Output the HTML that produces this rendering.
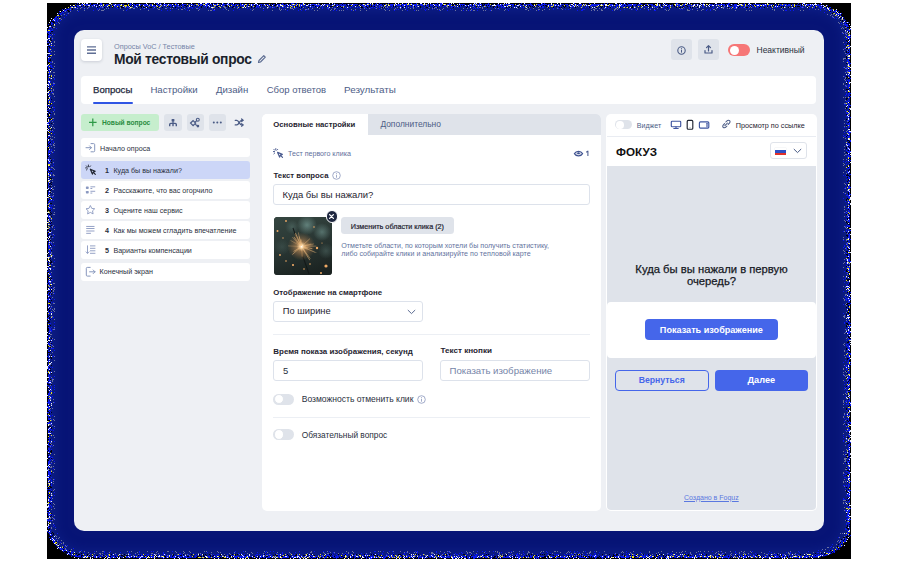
<!DOCTYPE html>
<html><head><meta charset="utf-8">
<style>
*{box-sizing:border-box;margin:0;padding:0}
html,body{width:898px;height:562px;overflow:hidden;background:#fff}
body{position:relative;font-family:"Liberation Sans",sans-serif;color:#1f2430}
.a{position:absolute}
.t{position:absolute;white-space:nowrap;line-height:1}
#black{left:47px;top:3px;width:804px;height:555.5px;background:#000}
#navy{left:47.8px;top:4px;width:802.4px;height:553.6px;background:#071476;border-radius:38px/31px;border:2.5px solid #0a1a9a;box-shadow:inset 0 0 12px 4px #0f218a}
#card{left:74px;top:30px;width:750px;height:501px;background:#eef0f4;border-radius:10px;overflow:hidden}
.wb{background:#fff;border-radius:4px}
.ib{background:#dfe3ea;border-radius:3px}
.lrow{position:absolute;left:81px;width:168.8px;height:18px;background:#fff;border-radius:3px}
.ltxt{font-size:7.15px;color:#2a3040}
.num{font-size:7.15px;font-weight:700;color:#2a3040}
.lbl{font-size:7.85px;font-weight:700;color:#1f2430}
.inp{position:absolute;background:#fff;border:1px solid #dde2eb;border-radius:3px}
</style></head><body>
<div class="a" id="black"></div>
<div class="a" id="navy"></div>
<svg class="a" style="left:0;top:0" width="898" height="562" viewBox="0 0 898 562" shape-rendering="crispEdges"><path fill="#000010" d="M79 4h2v1h-2zM91 4h2v1h-2zM98 4h1v1h-1zM105 4h1v1h-1zM109 4h1v1h-1zM124 4h4v1h-4zM132 4h1v1h-1zM135 4h1v1h-1zM148 4h1v1h-1zM153 4h4v1h-4zM158 4h1v1h-1zM162 4h1v1h-1zM174 4h1v1h-1zM179 4h2v1h-2zM193 4h1v1h-1zM208 4h1v1h-1zM212 4h1v1h-1zM221 4h1v1h-1zM234 4h1v1h-1zM239 4h1v1h-1zM258 4h1v1h-1zM270 4h1v1h-1zM272 4h1v1h-1zM275 4h2v1h-2zM284 4h1v1h-1zM288 4h1v1h-1zM290 4h1v1h-1zM306 4h2v1h-2zM320 4h2v1h-2zM330 4h2v1h-2zM338 4h1v1h-1zM342 4h1v1h-1zM346 4h1v1h-1zM358 4h1v1h-1zM361 4h1v1h-1zM374 4h1v1h-1zM379 4h1v1h-1zM382 4h1v1h-1zM384 4h1v1h-1zM389 4h1v1h-1zM419 4h1v1h-1zM429 4h1v1h-1zM437 4h1v1h-1zM446 4h1v1h-1zM452 4h2v1h-2zM455 4h2v1h-2zM458 4h1v1h-1zM465 4h4v1h-4zM472 4h1v1h-1zM482 4h1v1h-1zM484 4h1v1h-1zM491 4h2v1h-2zM495 4h2v1h-2zM499 4h1v1h-1zM514 4h1v1h-1zM516 4h2v1h-2zM521 4h2v1h-2zM532 4h2v1h-2zM535 4h1v1h-1zM540 4h1v1h-1zM547 4h1v1h-1zM557 4h1v1h-1zM559 4h1v1h-1zM564 4h1v1h-1zM568 4h1v1h-1zM573 4h1v1h-1zM577 4h1v1h-1zM582 4h1v1h-1zM587 4h3v1h-3zM607 4h2v1h-2zM613 4h3v1h-3zM618 4h1v1h-1zM626 4h2v1h-2zM637 4h1v1h-1zM643 4h2v1h-2zM653 4h2v1h-2zM661 4h1v1h-1zM665 4h1v1h-1zM668 4h1v1h-1zM670 4h2v1h-2zM673 4h1v1h-1zM680 4h2v1h-2zM688 4h1v1h-1zM692 4h1v1h-1zM699 4h1v1h-1zM705 4h1v1h-1zM708 4h1v1h-1zM713 4h1v1h-1zM715 4h1v1h-1zM725 4h1v1h-1zM729 4h1v1h-1zM733 4h1v1h-1zM737 4h2v1h-2zM746 4h2v1h-2zM752 4h1v1h-1zM761 4h1v1h-1zM773 4h1v1h-1zM775 4h1v1h-1zM777 4h1v1h-1zM787 4h1v1h-1zM791 4h1v1h-1zM795 4h2v1h-2zM798 4h2v1h-2zM801 4h1v1h-1zM803 4h1v1h-1zM75 5h1v1h-1zM83 5h1v1h-1zM90 5h1v1h-1zM95 5h1v1h-1zM97 5h1v1h-1zM104 5h1v1h-1zM110 5h1v1h-1zM112 5h1v1h-1zM122 5h1v1h-1zM127 5h1v1h-1zM129 5h1v1h-1zM131 5h1v1h-1zM133 5h1v1h-1zM137 5h1v1h-1zM141 5h2v1h-2zM155 5h1v1h-1zM172 5h1v1h-1zM179 5h1v1h-1zM181 5h1v1h-1zM184 5h2v1h-2zM187 5h1v1h-1zM190 5h1v1h-1zM195 5h1v1h-1zM199 5h1v1h-1zM202 5h1v1h-1zM210 5h1v1h-1zM212 5h1v1h-1zM218 5h1v1h-1zM220 5h1v1h-1zM225 5h2v1h-2zM230 5h1v1h-1zM236 5h1v1h-1zM239 5h1v1h-1zM245 5h1v1h-1zM248 5h2v1h-2zM254 5h2v1h-2zM260 5h1v1h-1zM262 5h1v1h-1zM266 5h1v1h-1zM270 5h2v1h-2zM274 5h2v1h-2zM286 5h1v1h-1zM297 5h1v1h-1zM309 5h1v1h-1zM312 5h2v1h-2zM335 5h1v1h-1zM347 5h1v1h-1zM349 5h2v1h-2zM355 5h1v1h-1zM357 5h1v1h-1zM360 5h1v1h-1zM369 5h1v1h-1zM371 5h1v1h-1zM383 5h1v1h-1zM387 5h1v1h-1zM393 5h1v1h-1zM401 5h1v1h-1zM411 5h1v1h-1zM425 5h1v1h-1zM429 5h1v1h-1zM433 5h1v1h-1zM442 5h2v1h-2zM452 5h2v1h-2zM457 5h1v1h-1zM459 5h1v1h-1zM461 5h1v1h-1zM463 5h1v1h-1zM472 5h1v1h-1zM482 5h2v1h-2zM486 5h1v1h-1zM488 5h1v1h-1zM502 5h1v1h-1zM505 5h1v1h-1zM511 5h1v1h-1zM514 5h1v1h-1zM527 5h1v1h-1zM529 5h1v1h-1zM533 5h1v1h-1zM537 5h1v1h-1zM543 5h1v1h-1zM545 5h2v1h-2zM562 5h1v1h-1zM565 5h1v1h-1zM571 5h1v1h-1zM599 5h1v1h-1zM604 5h1v1h-1zM624 5h1v1h-1zM632 5h1v1h-1zM636 5h1v1h-1zM640 5h1v1h-1zM642 5h2v1h-2zM645 5h3v1h-3zM649 5h2v1h-2zM655 5h1v1h-1zM661 5h1v1h-1zM667 5h1v1h-1zM673 5h2v1h-2zM685 5h2v1h-2zM696 5h1v1h-1zM701 5h1v1h-1zM707 5h1v1h-1zM722 5h1v1h-1zM726 5h1v1h-1zM730 5h2v1h-2zM748 5h1v1h-1zM750 5h1v1h-1zM753 5h1v1h-1zM755 5h1v1h-1zM767 5h1v1h-1zM772 5h1v1h-1zM774 5h1v1h-1zM777 5h1v1h-1zM779 5h1v1h-1zM801 5h1v1h-1zM809 5h1v1h-1zM814 5h1v1h-1zM73 6h1v1h-1zM76 6h1v1h-1zM81 6h1v1h-1zM85 6h1v1h-1zM87 6h1v1h-1zM99 6h1v1h-1zM109 6h1v1h-1zM113 6h1v1h-1zM121 6h1v1h-1zM130 6h1v1h-1zM140 6h2v1h-2zM146 6h1v1h-1zM158 6h1v1h-1zM167 6h1v1h-1zM169 6h1v1h-1zM186 6h1v1h-1zM192 6h1v1h-1zM201 6h1v1h-1zM216 6h2v1h-2zM226 6h1v1h-1zM228 6h1v1h-1zM233 6h1v1h-1zM245 6h1v1h-1zM251 6h1v1h-1zM255 6h1v1h-1zM267 6h1v1h-1zM295 6h1v1h-1zM297 6h1v1h-1zM315 6h1v1h-1zM319 6h1v1h-1zM326 6h1v1h-1zM330 6h3v1h-3zM338 6h1v1h-1zM340 6h1v1h-1zM361 6h1v1h-1zM366 6h1v1h-1zM369 6h1v1h-1zM371 6h1v1h-1zM374 6h1v1h-1zM393 6h1v1h-1zM395 6h1v1h-1zM405 6h1v1h-1zM414 6h1v1h-1zM420 6h1v1h-1zM429 6h1v1h-1zM434 6h1v1h-1zM448 6h1v1h-1zM459 6h1v1h-1zM467 6h1v1h-1zM476 6h1v1h-1zM480 6h1v1h-1zM490 6h1v1h-1zM493 6h2v1h-2zM497 6h1v1h-1zM519 6h1v1h-1zM530 6h1v1h-1zM532 6h1v1h-1zM534 6h1v1h-1zM538 6h1v1h-1zM541 6h1v1h-1zM546 6h1v1h-1zM556 6h1v1h-1zM563 6h1v1h-1zM565 6h1v1h-1zM577 6h1v1h-1zM589 6h1v1h-1zM600 6h1v1h-1zM602 6h1v1h-1zM604 6h1v1h-1zM607 6h1v1h-1zM626 6h1v1h-1zM632 6h1v1h-1zM650 6h1v1h-1zM662 6h1v1h-1zM674 6h1v1h-1zM683 6h1v1h-1zM687 6h1v1h-1zM694 6h1v1h-1zM710 6h1v1h-1zM721 6h1v1h-1zM739 6h1v1h-1zM751 6h1v1h-1zM760 6h1v1h-1zM767 6h1v1h-1zM770 6h1v1h-1zM781 6h1v1h-1zM783 6h1v1h-1zM793 6h1v1h-1zM795 6h1v1h-1zM797 6h3v1h-3zM807 6h1v1h-1zM822 6h1v1h-1zM69 7h1v1h-1zM97 7h1v1h-1zM104 7h1v1h-1zM109 7h1v1h-1zM112 7h1v1h-1zM118 7h1v1h-1zM121 7h3v1h-3zM138 7h1v1h-1zM141 7h1v1h-1zM143 7h2v1h-2zM147 7h1v1h-1zM150 7h2v1h-2zM157 7h1v1h-1zM162 7h1v1h-1zM172 7h1v1h-1zM175 7h1v1h-1zM181 7h1v1h-1zM201 7h1v1h-1zM207 7h1v1h-1zM218 7h1v1h-1zM228 7h1v1h-1zM232 7h1v1h-1zM240 7h1v1h-1zM251 7h1v1h-1zM254 7h1v1h-1zM277 7h1v1h-1zM299 7h1v1h-1zM301 7h1v1h-1zM308 7h1v1h-1zM318 7h1v1h-1zM337 7h1v1h-1zM341 7h2v1h-2zM361 7h2v1h-2zM367 7h1v1h-1zM382 7h1v1h-1zM384 7h1v1h-1zM402 7h1v1h-1zM420 7h1v1h-1zM426 7h2v1h-2zM433 7h1v1h-1zM437 7h1v1h-1zM453 7h1v1h-1zM466 7h1v1h-1zM487 7h1v1h-1zM493 7h1v1h-1zM497 7h1v1h-1zM506 7h1v1h-1zM509 7h1v1h-1zM511 7h1v1h-1zM518 7h1v1h-1zM528 7h1v1h-1zM533 7h1v1h-1zM548 7h1v1h-1zM553 7h1v1h-1zM559 7h1v1h-1zM561 7h1v1h-1zM564 7h1v1h-1zM569 7h1v1h-1zM575 7h1v1h-1zM589 7h1v1h-1zM596 7h1v1h-1zM601 7h1v1h-1zM610 7h1v1h-1zM620 7h1v1h-1zM628 7h1v1h-1zM631 7h2v1h-2zM649 7h1v1h-1zM659 7h1v1h-1zM667 7h1v1h-1zM676 7h1v1h-1zM679 7h2v1h-2zM682 7h1v1h-1zM690 7h1v1h-1zM692 7h1v1h-1zM697 7h1v1h-1zM728 7h1v1h-1zM738 7h1v1h-1zM746 7h2v1h-2zM759 7h1v1h-1zM764 7h1v1h-1zM781 7h1v1h-1zM783 7h1v1h-1zM788 7h1v1h-1zM808 7h1v1h-1zM815 7h1v1h-1zM826 7h1v1h-1zM828 7h1v1h-1zM67 8h1v1h-1zM72 8h1v1h-1zM830 8h2v1h-2zM65 9h1v1h-1zM72 9h1v1h-1zM67 10h2v1h-2zM832 10h1v1h-1zM834 10h1v1h-1zM61 11h1v1h-1zM63 11h1v1h-1zM68 11h2v1h-2zM830 11h1v1h-1zM60 12h1v1h-1zM833 12h1v1h-1zM836 12h1v1h-1zM832 13h1v1h-1zM59 14h1v1h-1zM56 15h1v1h-1zM59 15h1v1h-1zM839 15h1v1h-1zM841 15h1v1h-1zM60 16h1v1h-1zM842 16h1v1h-1zM54 17h1v1h-1zM57 17h1v1h-1zM59 17h1v1h-1zM841 17h1v1h-1zM840 18h1v1h-1zM843 18h1v1h-1zM840 20h1v1h-1zM842 20h1v1h-1zM52 21h2v1h-2zM842 21h1v1h-1zM845 21h1v1h-1zM53 22h2v1h-2zM846 23h1v1h-1zM50 24h1v1h-1zM53 24h1v1h-1zM51 25h1v1h-1zM845 26h1v1h-1zM52 27h1v1h-1zM847 27h2v1h-2zM845 29h1v1h-1zM51 31h2v1h-2zM848 31h1v1h-1zM848 32h1v1h-1zM50 33h1v1h-1zM48 34h1v1h-1zM50 38h1v1h-1zM50 39h1v1h-1zM848 39h1v1h-1zM48 40h1v1h-1zM51 40h1v1h-1zM846 40h1v1h-1zM848 40h1v1h-1zM49 41h1v1h-1zM847 41h1v1h-1zM49 42h1v1h-1zM848 42h1v1h-1zM48 43h1v1h-1zM847 43h1v1h-1zM849 43h1v1h-1zM48 44h1v1h-1zM846 45h1v1h-1zM48 46h2v1h-2zM49 47h1v1h-1zM846 48h2v1h-2zM848 50h1v1h-1zM846 51h1v1h-1zM48 52h1v1h-1zM846 52h1v1h-1zM848 52h1v1h-1zM849 54h1v1h-1zM48 56h3v1h-3zM846 56h1v1h-1zM846 57h1v1h-1zM846 58h1v1h-1zM50 59h1v1h-1zM49 60h2v1h-2zM849 60h1v1h-1zM48 62h2v1h-2zM48 63h1v1h-1zM846 63h1v1h-1zM49 64h1v1h-1zM50 68h2v1h-2zM848 69h1v1h-1zM48 70h1v1h-1zM50 70h1v1h-1zM48 74h1v1h-1zM50 76h1v1h-1zM846 76h2v1h-2zM847 77h1v1h-1zM846 78h1v1h-1zM848 78h2v1h-2zM49 79h1v1h-1zM847 81h1v1h-1zM846 83h1v1h-1zM48 86h1v1h-1zM48 88h1v1h-1zM849 88h1v1h-1zM49 89h1v1h-1zM846 89h3v1h-3zM48 90h1v1h-1zM50 91h1v1h-1zM49 92h1v1h-1zM848 92h1v1h-1zM48 96h1v1h-1zM849 96h1v1h-1zM48 98h1v1h-1zM846 98h2v1h-2zM51 99h1v1h-1zM846 99h1v1h-1zM849 102h1v1h-1zM48 103h1v1h-1zM50 103h1v1h-1zM50 104h1v1h-1zM49 106h1v1h-1zM849 106h1v1h-1zM49 107h1v1h-1zM51 107h1v1h-1zM846 107h1v1h-1zM48 108h1v1h-1zM846 108h1v1h-1zM50 109h1v1h-1zM849 109h1v1h-1zM48 111h1v1h-1zM848 111h1v1h-1zM49 112h1v1h-1zM49 113h2v1h-2zM48 114h1v1h-1zM846 114h1v1h-1zM48 115h1v1h-1zM48 116h2v1h-2zM849 117h1v1h-1zM49 118h1v1h-1zM51 118h1v1h-1zM49 119h2v1h-2zM846 119h1v1h-1zM849 121h1v1h-1zM848 122h1v1h-1zM49 123h1v1h-1zM51 123h1v1h-1zM49 125h1v1h-1zM846 125h1v1h-1zM48 128h1v1h-1zM849 128h1v1h-1zM49 129h1v1h-1zM51 129h1v1h-1zM49 131h1v1h-1zM48 132h1v1h-1zM51 132h1v1h-1zM49 133h1v1h-1zM48 134h1v1h-1zM847 135h1v1h-1zM846 136h1v1h-1zM49 137h1v1h-1zM48 138h2v1h-2zM49 140h1v1h-1zM847 140h2v1h-2zM849 141h1v1h-1zM50 142h1v1h-1zM848 142h2v1h-2zM49 143h1v1h-1zM48 144h1v1h-1zM49 145h1v1h-1zM48 146h1v1h-1zM848 146h1v1h-1zM846 147h1v1h-1zM849 147h1v1h-1zM48 148h1v1h-1zM846 148h1v1h-1zM48 149h1v1h-1zM848 150h1v1h-1zM846 152h1v1h-1zM49 153h1v1h-1zM847 153h1v1h-1zM849 154h1v1h-1zM48 156h1v1h-1zM50 158h1v1h-1zM849 158h1v1h-1zM51 160h1v1h-1zM849 160h1v1h-1zM51 162h1v1h-1zM849 162h1v1h-1zM849 164h1v1h-1zM849 165h1v1h-1zM49 166h1v1h-1zM847 166h1v1h-1zM848 167h1v1h-1zM849 169h1v1h-1zM48 170h1v1h-1zM848 170h1v1h-1zM49 171h1v1h-1zM51 171h1v1h-1zM49 173h1v1h-1zM849 173h1v1h-1zM847 174h1v1h-1zM846 175h3v1h-3zM849 176h1v1h-1zM49 177h1v1h-1zM847 177h1v1h-1zM50 178h2v1h-2zM848 179h1v1h-1zM848 180h1v1h-1zM847 181h1v1h-1zM51 182h1v1h-1zM49 183h2v1h-2zM848 183h1v1h-1zM49 184h1v1h-1zM51 184h1v1h-1zM847 185h1v1h-1zM49 186h2v1h-2zM49 189h1v1h-1zM51 189h1v1h-1zM48 190h1v1h-1zM50 190h1v1h-1zM50 192h1v1h-1zM848 192h1v1h-1zM848 193h1v1h-1zM848 194h1v1h-1zM49 195h1v1h-1zM49 197h1v1h-1zM51 198h1v1h-1zM847 198h1v1h-1zM49 199h1v1h-1zM846 199h1v1h-1zM848 199h1v1h-1zM48 200h1v1h-1zM846 200h1v1h-1zM50 203h2v1h-2zM849 204h1v1h-1zM48 205h1v1h-1zM847 206h1v1h-1zM849 207h1v1h-1zM48 209h1v1h-1zM848 209h1v1h-1zM48 210h3v1h-3zM50 212h1v1h-1zM48 213h1v1h-1zM51 213h1v1h-1zM848 213h1v1h-1zM49 214h2v1h-2zM846 214h1v1h-1zM849 215h1v1h-1zM51 216h1v1h-1zM849 217h1v1h-1zM48 218h1v1h-1zM847 218h1v1h-1zM849 218h1v1h-1zM847 219h1v1h-1zM50 220h1v1h-1zM846 221h1v1h-1zM49 222h1v1h-1zM51 222h1v1h-1zM846 222h1v1h-1zM848 222h1v1h-1zM50 223h1v1h-1zM847 223h1v1h-1zM848 224h2v1h-2zM51 225h1v1h-1zM50 226h1v1h-1zM848 227h2v1h-2zM848 228h1v1h-1zM48 229h1v1h-1zM49 230h2v1h-2zM50 231h1v1h-1zM48 232h1v1h-1zM846 232h1v1h-1zM849 232h1v1h-1zM848 233h1v1h-1zM49 234h1v1h-1zM48 235h1v1h-1zM846 235h2v1h-2zM51 236h1v1h-1zM847 236h1v1h-1zM48 237h1v1h-1zM49 238h1v1h-1zM49 239h1v1h-1zM849 239h1v1h-1zM50 240h1v1h-1zM48 241h1v1h-1zM847 241h1v1h-1zM50 244h1v1h-1zM848 244h1v1h-1zM51 245h1v1h-1zM849 245h1v1h-1zM847 248h1v1h-1zM848 249h2v1h-2zM51 250h1v1h-1zM846 251h2v1h-2zM847 252h1v1h-1zM48 253h1v1h-1zM849 253h1v1h-1zM846 254h2v1h-2zM49 255h1v1h-1zM847 255h1v1h-1zM847 257h2v1h-2zM50 258h1v1h-1zM49 259h1v1h-1zM50 260h1v1h-1zM48 261h1v1h-1zM51 261h1v1h-1zM846 261h1v1h-1zM50 262h2v1h-2zM50 263h1v1h-1zM48 265h1v1h-1zM848 265h1v1h-1zM49 266h2v1h-2zM846 266h1v1h-1zM49 269h1v1h-1zM847 269h1v1h-1zM846 270h1v1h-1zM846 271h2v1h-2zM48 272h1v1h-1zM848 272h2v1h-2zM848 274h1v1h-1zM49 275h1v1h-1zM849 275h1v1h-1zM48 276h1v1h-1zM848 276h2v1h-2zM48 277h1v1h-1zM849 277h1v1h-1zM49 278h1v1h-1zM51 278h1v1h-1zM846 278h1v1h-1zM48 279h1v1h-1zM50 279h1v1h-1zM847 279h3v1h-3zM847 280h2v1h-2zM48 283h1v1h-1zM849 283h1v1h-1zM849 284h1v1h-1zM50 285h1v1h-1zM848 285h1v1h-1zM48 287h1v1h-1zM51 287h1v1h-1zM846 288h1v1h-1zM849 288h1v1h-1zM50 289h1v1h-1zM51 290h1v1h-1zM48 291h2v1h-2zM51 291h1v1h-1zM849 291h1v1h-1zM50 292h1v1h-1zM847 292h1v1h-1zM849 292h1v1h-1zM49 293h1v1h-1zM849 293h1v1h-1zM49 294h1v1h-1zM51 294h1v1h-1zM49 297h1v1h-1zM849 297h1v1h-1zM50 298h1v1h-1zM49 300h1v1h-1zM51 300h1v1h-1zM49 302h2v1h-2zM847 303h3v1h-3zM49 304h1v1h-1zM846 304h2v1h-2zM848 305h1v1h-1zM848 306h1v1h-1zM846 307h1v1h-1zM49 308h1v1h-1zM848 308h1v1h-1zM48 309h1v1h-1zM848 309h2v1h-2zM49 310h1v1h-1zM848 310h2v1h-2zM49 311h1v1h-1zM847 312h2v1h-2zM848 313h2v1h-2zM846 314h1v1h-1zM49 315h1v1h-1zM846 315h1v1h-1zM849 315h1v1h-1zM48 316h1v1h-1zM49 317h1v1h-1zM49 318h1v1h-1zM849 318h1v1h-1zM50 319h1v1h-1zM48 320h1v1h-1zM48 321h2v1h-2zM848 321h1v1h-1zM48 322h2v1h-2zM846 323h2v1h-2zM49 324h1v1h-1zM847 324h2v1h-2zM50 325h1v1h-1zM846 325h1v1h-1zM48 326h1v1h-1zM846 326h1v1h-1zM48 328h1v1h-1zM848 328h1v1h-1zM48 329h1v1h-1zM48 330h1v1h-1zM847 331h1v1h-1zM48 332h1v1h-1zM846 333h1v1h-1zM48 334h2v1h-2zM849 334h1v1h-1zM848 336h1v1h-1zM848 337h2v1h-2zM51 338h1v1h-1zM849 338h1v1h-1zM49 339h1v1h-1zM48 341h1v1h-1zM50 341h1v1h-1zM848 341h1v1h-1zM49 342h1v1h-1zM847 342h2v1h-2zM51 343h1v1h-1zM849 344h1v1h-1zM50 345h1v1h-1zM48 346h1v1h-1zM50 347h1v1h-1zM846 348h1v1h-1zM49 349h1v1h-1zM846 349h1v1h-1zM50 351h1v1h-1zM848 351h2v1h-2zM48 352h2v1h-2zM49 354h1v1h-1zM849 354h1v1h-1zM51 355h1v1h-1zM50 357h2v1h-2zM48 358h1v1h-1zM51 358h1v1h-1zM847 358h2v1h-2zM847 359h1v1h-1zM849 360h1v1h-1zM849 361h1v1h-1zM49 362h1v1h-1zM51 365h1v1h-1zM849 365h1v1h-1zM49 367h1v1h-1zM50 368h1v1h-1zM848 369h1v1h-1zM49 370h2v1h-2zM846 371h1v1h-1zM48 373h1v1h-1zM51 373h1v1h-1zM847 373h1v1h-1zM846 377h1v1h-1zM48 378h1v1h-1zM50 379h1v1h-1zM849 379h1v1h-1zM849 380h1v1h-1zM48 381h1v1h-1zM848 381h1v1h-1zM847 382h1v1h-1zM48 384h2v1h-2zM51 384h1v1h-1zM846 386h1v1h-1zM849 387h1v1h-1zM48 388h1v1h-1zM49 389h1v1h-1zM848 390h2v1h-2zM48 391h1v1h-1zM48 392h1v1h-1zM848 392h2v1h-2zM847 395h1v1h-1zM848 397h1v1h-1zM48 398h1v1h-1zM848 399h1v1h-1zM849 403h1v1h-1zM49 405h1v1h-1zM849 405h1v1h-1zM848 406h1v1h-1zM50 407h1v1h-1zM846 408h1v1h-1zM846 409h1v1h-1zM848 410h1v1h-1zM48 411h1v1h-1zM848 411h1v1h-1zM49 412h1v1h-1zM51 412h1v1h-1zM49 413h1v1h-1zM49 414h1v1h-1zM848 414h1v1h-1zM49 417h1v1h-1zM849 417h1v1h-1zM849 418h1v1h-1zM849 419h1v1h-1zM48 420h2v1h-2zM847 420h1v1h-1zM849 420h1v1h-1zM848 421h1v1h-1zM849 423h1v1h-1zM846 424h1v1h-1zM48 426h3v1h-3zM849 426h1v1h-1zM48 427h1v1h-1zM51 427h1v1h-1zM51 428h1v1h-1zM849 428h1v1h-1zM49 431h1v1h-1zM51 431h1v1h-1zM848 432h1v1h-1zM48 434h1v1h-1zM50 434h1v1h-1zM48 435h1v1h-1zM48 437h1v1h-1zM847 437h2v1h-2zM48 439h1v1h-1zM50 439h1v1h-1zM849 442h1v1h-1zM49 443h1v1h-1zM847 443h2v1h-2zM49 444h2v1h-2zM48 446h1v1h-1zM849 446h1v1h-1zM48 450h1v1h-1zM51 450h1v1h-1zM50 451h2v1h-2zM848 451h1v1h-1zM51 452h1v1h-1zM48 453h2v1h-2zM847 454h1v1h-1zM48 455h1v1h-1zM846 455h2v1h-2zM849 456h1v1h-1zM846 457h1v1h-1zM848 457h1v1h-1zM48 458h2v1h-2zM51 458h1v1h-1zM48 460h1v1h-1zM848 460h1v1h-1zM846 462h1v1h-1zM849 462h1v1h-1zM49 465h1v1h-1zM49 468h1v1h-1zM846 468h1v1h-1zM49 470h1v1h-1zM847 470h2v1h-2zM849 471h1v1h-1zM51 472h1v1h-1zM847 474h2v1h-2zM50 475h1v1h-1zM846 475h1v1h-1zM49 477h1v1h-1zM49 482h1v1h-1zM847 482h1v1h-1zM50 484h1v1h-1zM49 486h2v1h-2zM48 487h1v1h-1zM50 487h2v1h-2zM846 487h1v1h-1zM849 487h1v1h-1zM48 488h2v1h-2zM848 489h1v1h-1zM48 490h2v1h-2zM846 490h1v1h-1zM51 491h1v1h-1zM846 491h1v1h-1zM847 492h2v1h-2zM48 493h1v1h-1zM49 494h1v1h-1zM48 495h1v1h-1zM49 496h2v1h-2zM848 497h1v1h-1zM847 498h1v1h-1zM50 499h1v1h-1zM849 499h1v1h-1zM846 500h1v1h-1zM848 500h1v1h-1zM49 502h1v1h-1zM50 503h1v1h-1zM848 504h1v1h-1zM848 505h1v1h-1zM48 508h1v1h-1zM49 510h1v1h-1zM48 511h1v1h-1zM849 512h1v1h-1zM51 513h1v1h-1zM846 513h1v1h-1zM51 515h1v1h-1zM849 515h1v1h-1zM48 516h1v1h-1zM50 516h1v1h-1zM51 519h1v1h-1zM846 520h1v1h-1zM49 521h1v1h-1zM849 521h1v1h-1zM49 522h1v1h-1zM49 524h1v1h-1zM849 524h1v1h-1zM847 525h1v1h-1zM49 526h1v1h-1zM847 526h1v1h-1zM849 526h1v1h-1zM846 527h1v1h-1zM49 528h1v1h-1zM847 528h2v1h-2zM48 529h2v1h-2zM848 529h1v1h-1zM48 531h1v1h-1zM52 532h1v1h-1zM51 533h1v1h-1zM53 533h1v1h-1zM53 534h1v1h-1zM52 535h1v1h-1zM847 535h1v1h-1zM50 536h2v1h-2zM846 536h2v1h-2zM50 537h1v1h-1zM843 537h2v1h-2zM846 537h1v1h-1zM841 539h1v1h-1zM844 539h1v1h-1zM843 540h1v1h-1zM56 541h1v1h-1zM840 542h1v1h-1zM56 543h1v1h-1zM843 543h1v1h-1zM58 544h1v1h-1zM838 544h1v1h-1zM841 544h1v1h-1zM59 546h1v1h-1zM837 546h1v1h-1zM63 547h1v1h-1zM837 547h1v1h-1zM838 548h1v1h-1zM63 549h1v1h-1zM69 550h1v1h-1zM830 550h1v1h-1zM835 550h1v1h-1zM64 551h3v1h-3zM832 551h1v1h-1zM65 552h3v1h-3zM69 552h1v1h-1zM831 552h1v1h-1zM70 553h1v1h-1zM74 553h1v1h-1zM76 553h1v1h-1zM81 553h1v1h-1zM815 553h1v1h-1zM821 553h1v1h-1zM825 553h1v1h-1zM73 554h1v1h-1zM78 554h2v1h-2zM87 554h1v1h-1zM111 554h1v1h-1zM124 554h1v1h-1zM173 554h1v1h-1zM183 554h1v1h-1zM191 554h1v1h-1zM199 554h1v1h-1zM203 554h1v1h-1zM205 554h1v1h-1zM209 554h1v1h-1zM220 554h1v1h-1zM232 554h1v1h-1zM235 554h1v1h-1zM237 554h1v1h-1zM240 554h1v1h-1zM264 554h1v1h-1zM275 554h1v1h-1zM287 554h1v1h-1zM296 554h1v1h-1zM307 554h1v1h-1zM311 554h1v1h-1zM329 554h1v1h-1zM331 554h1v1h-1zM338 554h1v1h-1zM345 554h1v1h-1zM353 554h1v1h-1zM356 554h1v1h-1zM359 554h1v1h-1zM364 554h1v1h-1zM371 554h1v1h-1zM373 554h1v1h-1zM393 554h1v1h-1zM398 554h3v1h-3zM409 554h1v1h-1zM416 554h1v1h-1zM418 554h1v1h-1zM438 554h1v1h-1zM446 554h1v1h-1zM449 554h1v1h-1zM463 554h2v1h-2zM486 554h1v1h-1zM488 554h1v1h-1zM507 554h1v1h-1zM528 554h1v1h-1zM531 554h1v1h-1zM540 554h1v1h-1zM542 554h1v1h-1zM544 554h1v1h-1zM549 554h2v1h-2zM574 554h1v1h-1zM577 554h1v1h-1zM579 554h1v1h-1zM581 554h1v1h-1zM602 554h1v1h-1zM609 554h1v1h-1zM613 554h1v1h-1zM616 554h2v1h-2zM622 554h1v1h-1zM636 554h1v1h-1zM643 554h1v1h-1zM648 554h1v1h-1zM656 554h1v1h-1zM658 554h1v1h-1zM661 554h1v1h-1zM685 554h1v1h-1zM688 554h1v1h-1zM702 554h1v1h-1zM706 554h1v1h-1zM725 554h1v1h-1zM757 554h1v1h-1zM777 554h1v1h-1zM781 554h1v1h-1zM800 554h1v1h-1zM824 554h1v1h-1zM77 555h1v1h-1zM81 555h2v1h-2zM87 555h1v1h-1zM89 555h1v1h-1zM92 555h1v1h-1zM96 555h2v1h-2zM103 555h1v1h-1zM121 555h2v1h-2zM126 555h2v1h-2zM138 555h1v1h-1zM140 555h1v1h-1zM145 555h1v1h-1zM156 555h1v1h-1zM173 555h1v1h-1zM180 555h2v1h-2zM199 555h1v1h-1zM203 555h1v1h-1zM206 555h1v1h-1zM210 555h1v1h-1zM213 555h1v1h-1zM220 555h1v1h-1zM224 555h1v1h-1zM229 555h2v1h-2zM235 555h1v1h-1zM245 555h1v1h-1zM273 555h1v1h-1zM276 555h2v1h-2zM284 555h1v1h-1zM288 555h1v1h-1zM295 555h2v1h-2zM303 555h2v1h-2zM314 555h1v1h-1zM330 555h1v1h-1zM344 555h1v1h-1zM351 555h1v1h-1zM374 555h2v1h-2zM377 555h1v1h-1zM380 555h1v1h-1zM401 555h1v1h-1zM437 555h1v1h-1zM439 555h1v1h-1zM443 555h1v1h-1zM446 555h1v1h-1zM471 555h1v1h-1zM484 555h1v1h-1zM503 555h1v1h-1zM505 555h1v1h-1zM515 555h1v1h-1zM526 555h1v1h-1zM529 555h1v1h-1zM533 555h1v1h-1zM536 555h1v1h-1zM538 555h1v1h-1zM553 555h1v1h-1zM559 555h1v1h-1zM568 555h1v1h-1zM613 555h2v1h-2zM616 555h1v1h-1zM624 555h1v1h-1zM630 555h1v1h-1zM632 555h1v1h-1zM649 555h1v1h-1zM656 555h1v1h-1zM659 555h1v1h-1zM663 555h1v1h-1zM666 555h1v1h-1zM668 555h1v1h-1zM687 555h2v1h-2zM690 555h1v1h-1zM694 555h1v1h-1zM706 555h1v1h-1zM718 555h2v1h-2zM724 555h1v1h-1zM737 555h1v1h-1zM743 555h1v1h-1zM746 555h1v1h-1zM756 555h1v1h-1zM769 555h1v1h-1zM773 555h1v1h-1zM781 555h1v1h-1zM794 555h1v1h-1zM804 555h1v1h-1zM815 555h1v1h-1zM81 556h1v1h-1zM105 556h1v1h-1zM109 556h2v1h-2zM115 556h1v1h-1zM118 556h1v1h-1zM123 556h2v1h-2zM144 556h1v1h-1zM147 556h1v1h-1zM149 556h1v1h-1zM155 556h1v1h-1zM164 556h2v1h-2zM172 556h1v1h-1zM177 556h1v1h-1zM187 556h2v1h-2zM193 556h1v1h-1zM197 556h2v1h-2zM200 556h2v1h-2zM203 556h2v1h-2zM210 556h1v1h-1zM212 556h1v1h-1zM219 556h1v1h-1zM229 556h2v1h-2zM232 556h1v1h-1zM253 556h2v1h-2zM258 556h1v1h-1zM266 556h2v1h-2zM281 556h2v1h-2zM289 556h2v1h-2zM300 556h1v1h-1zM307 556h1v1h-1zM310 556h1v1h-1zM324 556h1v1h-1zM327 556h2v1h-2zM334 556h1v1h-1zM341 556h2v1h-2zM349 556h1v1h-1zM353 556h1v1h-1zM361 556h1v1h-1zM364 556h1v1h-1zM368 556h2v1h-2zM377 556h1v1h-1zM382 556h1v1h-1zM395 556h1v1h-1zM402 556h1v1h-1zM405 556h1v1h-1zM416 556h1v1h-1zM424 556h1v1h-1zM427 556h1v1h-1zM460 556h1v1h-1zM466 556h1v1h-1zM470 556h1v1h-1zM489 556h1v1h-1zM494 556h2v1h-2zM497 556h1v1h-1zM505 556h1v1h-1zM513 556h2v1h-2zM524 556h1v1h-1zM529 556h1v1h-1zM544 556h2v1h-2zM547 556h2v1h-2zM555 556h1v1h-1zM558 556h2v1h-2zM568 556h1v1h-1zM571 556h1v1h-1zM573 556h1v1h-1zM577 556h1v1h-1zM581 556h1v1h-1zM583 556h1v1h-1zM585 556h2v1h-2zM588 556h2v1h-2zM591 556h1v1h-1zM599 556h1v1h-1zM604 556h2v1h-2zM610 556h1v1h-1zM612 556h2v1h-2zM624 556h1v1h-1zM635 556h2v1h-2zM654 556h1v1h-1zM656 556h2v1h-2zM663 556h1v1h-1zM665 556h1v1h-1zM676 556h1v1h-1zM714 556h1v1h-1zM722 556h1v1h-1zM728 556h1v1h-1zM731 556h1v1h-1zM738 556h1v1h-1zM740 556h1v1h-1zM747 556h1v1h-1zM758 556h1v1h-1zM761 556h1v1h-1zM763 556h1v1h-1zM770 556h1v1h-1zM773 556h1v1h-1zM779 556h1v1h-1zM783 556h1v1h-1zM787 556h1v1h-1zM789 556h1v1h-1zM798 556h1v1h-1zM821 556h1v1h-1zM88 557h2v1h-2zM91 557h3v1h-3zM98 557h1v1h-1zM102 557h3v1h-3zM106 557h1v1h-1zM116 557h1v1h-1zM118 557h1v1h-1zM120 557h1v1h-1zM124 557h2v1h-2zM132 557h1v1h-1zM135 557h1v1h-1zM156 557h2v1h-2zM165 557h1v1h-1zM169 557h1v1h-1zM176 557h1v1h-1zM182 557h1v1h-1zM196 557h2v1h-2zM205 557h1v1h-1zM214 557h1v1h-1zM220 557h1v1h-1zM222 557h2v1h-2zM233 557h1v1h-1zM237 557h1v1h-1zM249 557h3v1h-3zM256 557h1v1h-1zM258 557h1v1h-1zM262 557h1v1h-1zM265 557h1v1h-1zM270 557h1v1h-1zM289 557h1v1h-1zM306 557h1v1h-1zM311 557h1v1h-1zM316 557h1v1h-1zM318 557h1v1h-1zM321 557h1v1h-1zM329 557h1v1h-1zM331 557h2v1h-2zM339 557h1v1h-1zM343 557h2v1h-2zM348 557h2v1h-2zM353 557h1v1h-1zM356 557h1v1h-1zM359 557h1v1h-1zM361 557h1v1h-1zM365 557h1v1h-1zM367 557h1v1h-1zM386 557h3v1h-3zM402 557h1v1h-1zM408 557h1v1h-1zM415 557h1v1h-1zM417 557h1v1h-1zM428 557h1v1h-1zM431 557h1v1h-1zM438 557h1v1h-1zM450 557h1v1h-1zM463 557h1v1h-1zM466 557h1v1h-1zM470 557h1v1h-1zM472 557h1v1h-1zM481 557h1v1h-1zM484 557h1v1h-1zM493 557h2v1h-2zM497 557h1v1h-1zM501 557h1v1h-1zM511 557h1v1h-1zM514 557h1v1h-1zM524 557h2v1h-2zM532 557h1v1h-1zM539 557h1v1h-1zM542 557h4v1h-4zM548 557h1v1h-1zM553 557h2v1h-2zM569 557h1v1h-1zM572 557h1v1h-1zM577 557h2v1h-2zM585 557h1v1h-1zM589 557h1v1h-1zM591 557h1v1h-1zM593 557h1v1h-1zM597 557h2v1h-2zM600 557h1v1h-1zM605 557h1v1h-1zM610 557h1v1h-1zM614 557h1v1h-1zM620 557h1v1h-1zM629 557h1v1h-1zM631 557h1v1h-1zM634 557h1v1h-1zM646 557h1v1h-1zM653 557h3v1h-3zM659 557h1v1h-1zM664 557h1v1h-1zM673 557h1v1h-1zM680 557h1v1h-1zM682 557h2v1h-2zM698 557h1v1h-1zM701 557h1v1h-1zM709 557h1v1h-1zM714 557h1v1h-1zM716 557h1v1h-1zM730 557h1v1h-1zM732 557h1v1h-1zM747 557h1v1h-1zM749 557h1v1h-1zM758 557h1v1h-1zM780 557h1v1h-1zM787 557h1v1h-1zM808 557h1v1h-1zM810 557h1v1h-1zM812 557h1v1h-1z"/><path fill="#0a18f0" d="M77 3h1v1h-1zM90 3h1v1h-1zM100 3h2v1h-2zM127 3h1v1h-1zM130 3h1v1h-1zM156 3h2v1h-2zM160 3h1v1h-1zM175 3h2v1h-2zM198 3h1v1h-1zM203 3h1v1h-1zM207 3h2v1h-2zM213 3h1v1h-1zM217 3h1v1h-1zM223 3h1v1h-1zM227 3h1v1h-1zM231 3h1v1h-1zM240 3h1v1h-1zM282 3h1v1h-1zM291 3h3v1h-3zM296 3h1v1h-1zM302 3h1v1h-1zM318 3h1v1h-1zM334 3h1v1h-1zM342 3h1v1h-1zM367 3h2v1h-2zM376 3h1v1h-1zM379 3h1v1h-1zM388 3h1v1h-1zM406 3h1v1h-1zM411 3h1v1h-1zM416 3h1v1h-1zM437 3h1v1h-1zM440 3h2v1h-2zM449 3h1v1h-1zM459 3h1v1h-1zM475 3h1v1h-1zM479 3h1v1h-1zM488 3h1v1h-1zM521 3h1v1h-1zM530 3h1v1h-1zM542 3h1v1h-1zM544 3h1v1h-1zM574 3h1v1h-1zM589 3h1v1h-1zM604 3h1v1h-1zM607 3h1v1h-1zM620 3h1v1h-1zM627 3h1v1h-1zM640 3h1v1h-1zM665 3h1v1h-1zM676 3h2v1h-2zM685 3h1v1h-1zM703 3h1v1h-1zM728 3h2v1h-2zM744 3h1v1h-1zM748 3h1v1h-1zM798 3h1v1h-1zM802 3h1v1h-1zM820 3h1v1h-1zM75 4h1v1h-1zM81 4h2v1h-2zM84 4h1v1h-1zM86 4h2v1h-2zM89 4h2v1h-2zM93 4h3v1h-3zM97 4h1v1h-1zM100 4h2v1h-2zM104 4h1v1h-1zM106 4h3v1h-3zM113 4h2v1h-2zM118 4h3v1h-3zM123 4h1v1h-1zM129 4h3v1h-3zM133 4h2v1h-2zM136 4h3v1h-3zM140 4h1v1h-1zM144 4h3v1h-3zM149 4h3v1h-3zM157 4h1v1h-1zM159 4h1v1h-1zM161 4h1v1h-1zM163 4h4v1h-4zM169 4h2v1h-2zM173 4h1v1h-1zM177 4h1v1h-1zM182 4h4v1h-4zM189 4h1v1h-1zM191 4h2v1h-2zM195 4h1v1h-1zM198 4h5v1h-5zM205 4h3v1h-3zM209 4h3v1h-3zM214 4h3v1h-3zM219 4h2v1h-2zM222 4h3v1h-3zM226 4h1v1h-1zM228 4h2v1h-2zM232 4h2v1h-2zM235 4h2v1h-2zM238 4h1v1h-1zM240 4h1v1h-1zM243 4h2v1h-2zM248 4h1v1h-1zM250 4h1v1h-1zM252 4h2v1h-2zM256 4h1v1h-1zM260 4h2v1h-2zM265 4h1v1h-1zM267 4h1v1h-1zM271 4h1v1h-1zM273 4h2v1h-2zM277 4h3v1h-3zM281 4h3v1h-3zM286 4h1v1h-1zM289 4h1v1h-1zM291 4h1v1h-1zM295 4h2v1h-2zM298 4h1v1h-1zM300 4h3v1h-3zM305 4h1v1h-1zM309 4h1v1h-1zM311 4h5v1h-5zM317 4h1v1h-1zM319 4h1v1h-1zM323 4h1v1h-1zM325 4h1v1h-1zM327 4h1v1h-1zM332 4h1v1h-1zM337 4h1v1h-1zM340 4h2v1h-2zM343 4h1v1h-1zM345 4h1v1h-1zM347 4h1v1h-1zM350 4h2v1h-2zM353 4h4v1h-4zM360 4h1v1h-1zM362 4h1v1h-1zM365 4h1v1h-1zM370 4h1v1h-1zM373 4h1v1h-1zM375 4h1v1h-1zM378 4h1v1h-1zM380 4h2v1h-2zM383 4h1v1h-1zM385 4h1v1h-1zM390 4h4v1h-4zM395 4h1v1h-1zM398 4h2v1h-2zM401 4h6v1h-6zM409 4h1v1h-1zM412 4h1v1h-1zM414 4h3v1h-3zM420 4h3v1h-3zM425 4h1v1h-1zM427 4h1v1h-1zM430 4h1v1h-1zM432 4h1v1h-1zM434 4h3v1h-3zM438 4h1v1h-1zM441 4h2v1h-2zM447 4h4v1h-4zM454 4h1v1h-1zM460 4h5v1h-5zM469 4h1v1h-1zM471 4h1v1h-1zM474 4h1v1h-1zM477 4h1v1h-1zM479 4h3v1h-3zM485 4h1v1h-1zM487 4h2v1h-2zM498 4h1v1h-1zM501 4h2v1h-2zM504 4h1v1h-1zM506 4h3v1h-3zM510 4h4v1h-4zM518 4h1v1h-1zM520 4h1v1h-1zM524 4h1v1h-1zM528 4h4v1h-4zM537 4h3v1h-3zM541 4h6v1h-6zM548 4h2v1h-2zM554 4h3v1h-3zM558 4h1v1h-1zM561 4h1v1h-1zM563 4h1v1h-1zM565 4h3v1h-3zM570 4h1v1h-1zM574 4h1v1h-1zM576 4h1v1h-1zM578 4h1v1h-1zM580 4h2v1h-2zM584 4h1v1h-1zM586 4h1v1h-1zM591 4h3v1h-3zM595 4h1v1h-1zM597 4h3v1h-3zM602 4h1v1h-1zM604 4h1v1h-1zM610 4h3v1h-3zM616 4h2v1h-2zM620 4h1v1h-1zM623 4h3v1h-3zM628 4h4v1h-4zM633 4h3v1h-3zM638 4h1v1h-1zM640 4h2v1h-2zM645 4h2v1h-2zM648 4h5v1h-5zM658 4h1v1h-1zM660 4h1v1h-1zM663 4h1v1h-1zM666 4h2v1h-2zM676 4h1v1h-1zM678 4h2v1h-2zM683 4h2v1h-2zM687 4h1v1h-1zM690 4h1v1h-1zM693 4h1v1h-1zM696 4h1v1h-1zM698 4h1v1h-1zM702 4h1v1h-1zM710 4h1v1h-1zM712 4h1v1h-1zM714 4h1v1h-1zM716 4h1v1h-1zM718 4h7v1h-7zM726 4h3v1h-3zM732 4h1v1h-1zM734 4h3v1h-3zM742 4h1v1h-1zM744 4h1v1h-1zM749 4h1v1h-1zM751 4h1v1h-1zM753 4h1v1h-1zM755 4h6v1h-6zM762 4h3v1h-3zM766 4h1v1h-1zM769 4h1v1h-1zM772 4h1v1h-1zM776 4h1v1h-1zM779 4h2v1h-2zM783 4h4v1h-4zM788 4h2v1h-2zM792 4h1v1h-1zM800 4h1v1h-1zM804 4h1v1h-1zM807 4h3v1h-3zM811 4h1v1h-1zM813 4h1v1h-1zM818 4h1v1h-1zM77 5h1v1h-1zM82 5h1v1h-1zM85 5h1v1h-1zM87 5h1v1h-1zM91 5h3v1h-3zM96 5h1v1h-1zM98 5h1v1h-1zM100 5h1v1h-1zM105 5h3v1h-3zM111 5h1v1h-1zM115 5h4v1h-4zM130 5h1v1h-1zM134 5h3v1h-3zM140 5h1v1h-1zM144 5h5v1h-5zM151 5h1v1h-1zM153 5h2v1h-2zM158 5h3v1h-3zM165 5h2v1h-2zM168 5h4v1h-4zM173 5h1v1h-1zM175 5h1v1h-1zM177 5h2v1h-2zM180 5h1v1h-1zM182 5h2v1h-2zM188 5h1v1h-1zM193 5h1v1h-1zM196 5h2v1h-2zM200 5h2v1h-2zM203 5h1v1h-1zM206 5h2v1h-2zM209 5h1v1h-1zM211 5h1v1h-1zM213 5h1v1h-1zM216 5h2v1h-2zM222 5h2v1h-2zM227 5h1v1h-1zM232 5h2v1h-2zM235 5h1v1h-1zM240 5h4v1h-4zM247 5h1v1h-1zM252 5h1v1h-1zM257 5h2v1h-2zM261 5h1v1h-1zM264 5h1v1h-1zM268 5h2v1h-2zM273 5h1v1h-1zM276 5h1v1h-1zM283 5h3v1h-3zM287 5h1v1h-1zM289 5h1v1h-1zM291 5h2v1h-2zM294 5h2v1h-2zM298 5h1v1h-1zM300 5h1v1h-1zM302 5h2v1h-2zM308 5h1v1h-1zM310 5h1v1h-1zM315 5h6v1h-6zM326 5h1v1h-1zM328 5h2v1h-2zM331 5h1v1h-1zM336 5h3v1h-3zM341 5h4v1h-4zM348 5h1v1h-1zM353 5h2v1h-2zM358 5h1v1h-1zM361 5h4v1h-4zM366 5h3v1h-3zM370 5h1v1h-1zM372 5h2v1h-2zM375 5h1v1h-1zM379 5h3v1h-3zM386 5h1v1h-1zM390 5h3v1h-3zM395 5h1v1h-1zM397 5h4v1h-4zM402 5h2v1h-2zM405 5h1v1h-1zM407 5h1v1h-1zM409 5h1v1h-1zM412 5h1v1h-1zM414 5h4v1h-4zM421 5h2v1h-2zM424 5h1v1h-1zM426 5h1v1h-1zM428 5h1v1h-1zM430 5h3v1h-3zM435 5h2v1h-2zM438 5h1v1h-1zM440 5h2v1h-2zM444 5h3v1h-3zM449 5h2v1h-2zM455 5h2v1h-2zM458 5h1v1h-1zM460 5h1v1h-1zM462 5h1v1h-1zM466 5h1v1h-1zM470 5h2v1h-2zM473 5h3v1h-3zM477 5h1v1h-1zM479 5h1v1h-1zM481 5h1v1h-1zM485 5h1v1h-1zM487 5h1v1h-1zM489 5h1v1h-1zM496 5h1v1h-1zM498 5h4v1h-4zM503 5h2v1h-2zM506 5h2v1h-2zM512 5h1v1h-1zM515 5h2v1h-2zM519 5h4v1h-4zM525 5h1v1h-1zM528 5h1v1h-1zM531 5h2v1h-2zM535 5h1v1h-1zM538 5h4v1h-4zM547 5h1v1h-1zM551 5h2v1h-2zM554 5h1v1h-1zM556 5h2v1h-2zM559 5h2v1h-2zM568 5h1v1h-1zM570 5h1v1h-1zM572 5h1v1h-1zM576 5h1v1h-1zM578 5h1v1h-1zM580 5h2v1h-2zM583 5h1v1h-1zM587 5h1v1h-1zM590 5h8v1h-8zM603 5h1v1h-1zM609 5h3v1h-3zM613 5h1v1h-1zM615 5h2v1h-2zM618 5h1v1h-1zM621 5h1v1h-1zM623 5h1v1h-1zM625 5h2v1h-2zM628 5h4v1h-4zM633 5h2v1h-2zM637 5h3v1h-3zM652 5h1v1h-1zM654 5h1v1h-1zM660 5h1v1h-1zM664 5h1v1h-1zM668 5h2v1h-2zM671 5h2v1h-2zM676 5h4v1h-4zM682 5h1v1h-1zM684 5h1v1h-1zM688 5h2v1h-2zM691 5h2v1h-2zM702 5h2v1h-2zM705 5h1v1h-1zM709 5h3v1h-3zM717 5h1v1h-1zM720 5h1v1h-1zM723 5h2v1h-2zM728 5h1v1h-1zM734 5h3v1h-3zM739 5h2v1h-2zM743 5h1v1h-1zM746 5h2v1h-2zM749 5h1v1h-1zM751 5h2v1h-2zM756 5h1v1h-1zM759 5h1v1h-1zM764 5h3v1h-3zM768 5h3v1h-3zM775 5h2v1h-2zM778 5h1v1h-1zM780 5h4v1h-4zM786 5h4v1h-4zM793 5h1v1h-1zM795 5h2v1h-2zM799 5h1v1h-1zM802 5h1v1h-1zM807 5h2v1h-2zM810 5h2v1h-2zM815 5h4v1h-4zM820 5h1v1h-1zM822 5h1v1h-1zM827 5h1v1h-1zM71 6h2v1h-2zM74 6h2v1h-2zM77 6h2v1h-2zM80 6h1v1h-1zM84 6h1v1h-1zM94 6h1v1h-1zM104 6h1v1h-1zM114 6h2v1h-2zM119 6h1v1h-1zM124 6h1v1h-1zM127 6h1v1h-1zM135 6h1v1h-1zM137 6h1v1h-1zM149 6h1v1h-1zM153 6h3v1h-3zM159 6h1v1h-1zM162 6h1v1h-1zM170 6h1v1h-1zM174 6h1v1h-1zM177 6h1v1h-1zM179 6h1v1h-1zM184 6h1v1h-1zM190 6h1v1h-1zM199 6h1v1h-1zM204 6h1v1h-1zM206 6h1v1h-1zM215 6h1v1h-1zM220 6h1v1h-1zM231 6h1v1h-1zM237 6h1v1h-1zM243 6h1v1h-1zM247 6h1v1h-1zM252 6h1v1h-1zM256 6h3v1h-3zM261 6h1v1h-1zM265 6h1v1h-1zM270 6h1v1h-1zM278 6h2v1h-2zM287 6h1v1h-1zM300 6h1v1h-1zM309 6h1v1h-1zM312 6h1v1h-1zM314 6h1v1h-1zM317 6h2v1h-2zM322 6h1v1h-1zM336 6h1v1h-1zM342 6h1v1h-1zM352 6h1v1h-1zM363 6h1v1h-1zM367 6h1v1h-1zM375 6h1v1h-1zM379 6h1v1h-1zM382 6h1v1h-1zM389 6h1v1h-1zM392 6h1v1h-1zM394 6h1v1h-1zM400 6h1v1h-1zM403 6h1v1h-1zM406 6h1v1h-1zM410 6h1v1h-1zM412 6h1v1h-1zM415 6h1v1h-1zM427 6h1v1h-1zM433 6h1v1h-1zM438 6h1v1h-1zM440 6h1v1h-1zM443 6h1v1h-1zM451 6h3v1h-3zM460 6h1v1h-1zM466 6h1v1h-1zM468 6h1v1h-1zM472 6h1v1h-1zM478 6h1v1h-1zM483 6h1v1h-1zM488 6h2v1h-2zM495 6h1v1h-1zM498 6h1v1h-1zM501 6h2v1h-2zM512 6h1v1h-1zM533 6h1v1h-1zM542 6h2v1h-2zM549 6h2v1h-2zM559 6h2v1h-2zM567 6h1v1h-1zM572 6h2v1h-2zM586 6h1v1h-1zM590 6h1v1h-1zM603 6h1v1h-1zM605 6h1v1h-1zM612 6h1v1h-1zM616 6h1v1h-1zM620 6h3v1h-3zM624 6h1v1h-1zM645 6h2v1h-2zM654 6h4v1h-4zM663 6h2v1h-2zM667 6h2v1h-2zM679 6h1v1h-1zM681 6h1v1h-1zM685 6h1v1h-1zM703 6h1v1h-1zM713 6h1v1h-1zM728 6h2v1h-2zM731 6h1v1h-1zM733 6h1v1h-1zM735 6h2v1h-2zM738 6h1v1h-1zM744 6h1v1h-1zM748 6h1v1h-1zM752 6h2v1h-2zM757 6h1v1h-1zM759 6h1v1h-1zM761 6h1v1h-1zM763 6h1v1h-1zM766 6h1v1h-1zM776 6h1v1h-1zM778 6h2v1h-2zM784 6h1v1h-1zM800 6h1v1h-1zM802 6h1v1h-1zM810 6h1v1h-1zM814 6h1v1h-1zM819 6h1v1h-1zM821 6h1v1h-1zM70 7h1v1h-1zM73 7h1v1h-1zM82 7h1v1h-1zM89 7h1v1h-1zM96 7h1v1h-1zM100 7h2v1h-2zM103 7h1v1h-1zM108 7h1v1h-1zM116 7h1v1h-1zM124 7h1v1h-1zM127 7h2v1h-2zM134 7h1v1h-1zM142 7h1v1h-1zM160 7h1v1h-1zM167 7h1v1h-1zM182 7h1v1h-1zM187 7h1v1h-1zM189 7h1v1h-1zM191 7h2v1h-2zM195 7h1v1h-1zM199 7h1v1h-1zM206 7h1v1h-1zM209 7h1v1h-1zM219 7h1v1h-1zM226 7h1v1h-1zM237 7h1v1h-1zM253 7h1v1h-1zM256 7h1v1h-1zM258 7h1v1h-1zM270 7h1v1h-1zM273 7h2v1h-2zM282 7h2v1h-2zM285 7h1v1h-1zM292 7h1v1h-1zM296 7h1v1h-1zM300 7h1v1h-1zM305 7h1v1h-1zM310 7h1v1h-1zM312 7h1v1h-1zM322 7h1v1h-1zM327 7h2v1h-2zM334 7h1v1h-1zM340 7h1v1h-1zM345 7h1v1h-1zM348 7h1v1h-1zM350 7h1v1h-1zM355 7h1v1h-1zM357 7h1v1h-1zM359 7h1v1h-1zM364 7h2v1h-2zM371 7h2v1h-2zM374 7h1v1h-1zM377 7h1v1h-1zM379 7h1v1h-1zM386 7h1v1h-1zM391 7h1v1h-1zM399 7h1v1h-1zM401 7h1v1h-1zM406 7h1v1h-1zM412 7h1v1h-1zM416 7h1v1h-1zM424 7h1v1h-1zM428 7h1v1h-1zM432 7h1v1h-1zM434 7h1v1h-1zM451 7h1v1h-1zM454 7h1v1h-1zM458 7h1v1h-1zM474 7h1v1h-1zM494 7h1v1h-1zM501 7h1v1h-1zM503 7h2v1h-2zM515 7h1v1h-1zM521 7h1v1h-1zM523 7h1v1h-1zM540 7h1v1h-1zM542 7h2v1h-2zM549 7h1v1h-1zM557 7h1v1h-1zM571 7h1v1h-1zM580 7h1v1h-1zM582 7h1v1h-1zM585 7h1v1h-1zM588 7h1v1h-1zM606 7h1v1h-1zM611 7h1v1h-1zM614 7h1v1h-1zM616 7h1v1h-1zM618 7h1v1h-1zM629 7h1v1h-1zM642 7h1v1h-1zM656 7h1v1h-1zM663 7h1v1h-1zM669 7h1v1h-1zM689 7h1v1h-1zM691 7h1v1h-1zM703 7h1v1h-1zM713 7h1v1h-1zM718 7h1v1h-1zM724 7h1v1h-1zM730 7h1v1h-1zM733 7h1v1h-1zM735 7h1v1h-1zM737 7h1v1h-1zM741 7h1v1h-1zM743 7h1v1h-1zM755 7h1v1h-1zM757 7h1v1h-1zM760 7h1v1h-1zM774 7h1v1h-1zM776 7h1v1h-1zM801 7h1v1h-1zM803 7h1v1h-1zM809 7h1v1h-1zM813 7h2v1h-2zM819 7h3v1h-3zM829 7h2v1h-2zM70 8h1v1h-1zM75 8h2v1h-2zM97 8h1v1h-1zM99 8h1v1h-1zM117 8h1v1h-1zM143 8h1v1h-1zM146 8h1v1h-1zM153 8h1v1h-1zM176 8h1v1h-1zM180 8h1v1h-1zM188 8h1v1h-1zM192 8h1v1h-1zM198 8h1v1h-1zM247 8h1v1h-1zM294 8h2v1h-2zM302 8h1v1h-1zM322 8h1v1h-1zM327 8h1v1h-1zM337 8h1v1h-1zM341 8h1v1h-1zM346 8h1v1h-1zM366 8h1v1h-1zM370 8h1v1h-1zM375 8h1v1h-1zM388 8h1v1h-1zM406 8h1v1h-1zM421 8h1v1h-1zM436 8h1v1h-1zM473 8h1v1h-1zM475 8h1v1h-1zM477 8h2v1h-2zM497 8h1v1h-1zM509 8h1v1h-1zM553 8h1v1h-1zM558 8h1v1h-1zM605 8h1v1h-1zM608 8h1v1h-1zM630 8h1v1h-1zM647 8h1v1h-1zM650 8h1v1h-1zM669 8h1v1h-1zM684 8h1v1h-1zM689 8h1v1h-1zM696 8h1v1h-1zM712 8h1v1h-1zM719 8h1v1h-1zM734 8h2v1h-2zM745 8h1v1h-1zM748 8h1v1h-1zM760 8h1v1h-1zM763 8h1v1h-1zM770 8h1v1h-1zM794 8h1v1h-1zM812 8h1v1h-1zM820 8h1v1h-1zM825 8h1v1h-1zM829 8h1v1h-1zM62 9h1v1h-1zM64 9h1v1h-1zM66 9h3v1h-3zM84 9h1v1h-1zM97 9h1v1h-1zM127 9h1v1h-1zM148 9h1v1h-1zM185 9h1v1h-1zM212 9h1v1h-1zM223 9h1v1h-1zM239 9h1v1h-1zM250 9h1v1h-1zM283 9h1v1h-1zM307 9h1v1h-1zM311 9h1v1h-1zM328 9h1v1h-1zM347 9h1v1h-1zM379 9h1v1h-1zM387 9h1v1h-1zM396 9h1v1h-1zM398 9h1v1h-1zM424 9h1v1h-1zM426 9h1v1h-1zM432 9h1v1h-1zM450 9h1v1h-1zM452 9h1v1h-1zM486 9h1v1h-1zM499 9h1v1h-1zM507 9h1v1h-1zM530 9h1v1h-1zM553 9h1v1h-1zM565 9h1v1h-1zM568 9h1v1h-1zM582 9h3v1h-3zM624 9h1v1h-1zM632 9h1v1h-1zM635 9h1v1h-1zM640 9h1v1h-1zM664 9h1v1h-1zM680 9h1v1h-1zM682 9h1v1h-1zM690 9h1v1h-1zM707 9h1v1h-1zM710 9h1v1h-1zM782 9h1v1h-1zM798 9h1v1h-1zM809 9h1v1h-1zM825 9h1v1h-1zM829 9h1v1h-1zM832 9h1v1h-1zM64 10h3v1h-3zM70 10h1v1h-1zM93 10h1v1h-1zM126 10h1v1h-1zM161 10h1v1h-1zM167 10h1v1h-1zM170 10h1v1h-1zM187 10h1v1h-1zM213 10h2v1h-2zM233 10h1v1h-1zM263 10h1v1h-1zM287 10h1v1h-1zM298 10h1v1h-1zM301 10h1v1h-1zM305 10h1v1h-1zM333 10h1v1h-1zM336 10h1v1h-1zM351 10h1v1h-1zM355 10h1v1h-1zM394 10h1v1h-1zM407 10h1v1h-1zM414 10h1v1h-1zM425 10h1v1h-1zM439 10h1v1h-1zM447 10h1v1h-1zM463 10h1v1h-1zM468 10h1v1h-1zM471 10h1v1h-1zM477 10h1v1h-1zM490 10h1v1h-1zM508 10h1v1h-1zM538 10h1v1h-1zM577 10h1v1h-1zM581 10h2v1h-2zM612 10h1v1h-1zM620 10h1v1h-1zM636 10h1v1h-1zM648 10h1v1h-1zM654 10h2v1h-2zM706 10h1v1h-1zM710 10h1v1h-1zM785 10h2v1h-2zM790 10h1v1h-1zM793 10h1v1h-1zM820 10h1v1h-1zM826 10h1v1h-1zM830 10h2v1h-2zM835 10h2v1h-2zM59 11h1v1h-1zM62 11h1v1h-1zM64 11h1v1h-1zM78 11h1v1h-1zM833 11h3v1h-3zM838 11h1v1h-1zM62 12h2v1h-2zM824 12h1v1h-1zM830 12h1v1h-1zM835 12h1v1h-1zM59 13h3v1h-3zM67 13h1v1h-1zM836 13h1v1h-1zM839 13h1v1h-1zM841 13h1v1h-1zM58 14h1v1h-1zM60 14h1v1h-1zM63 14h1v1h-1zM837 14h4v1h-4zM66 15h1v1h-1zM840 15h1v1h-1zM56 16h1v1h-1zM58 16h1v1h-1zM836 16h1v1h-1zM841 16h1v1h-1zM55 17h2v1h-2zM58 17h1v1h-1zM64 17h1v1h-1zM832 17h1v1h-1zM843 17h1v1h-1zM54 18h2v1h-2zM57 18h1v1h-1zM834 18h1v1h-1zM836 18h1v1h-1zM841 18h1v1h-1zM54 19h2v1h-2zM58 19h1v1h-1zM843 19h1v1h-1zM52 20h2v1h-2zM55 20h1v1h-1zM57 20h1v1h-1zM60 20h1v1h-1zM845 20h1v1h-1zM50 21h1v1h-1zM55 21h1v1h-1zM57 21h1v1h-1zM51 22h1v1h-1zM844 22h1v1h-1zM846 22h1v1h-1zM848 22h1v1h-1zM51 23h2v1h-2zM56 23h1v1h-1zM841 23h1v1h-1zM845 23h1v1h-1zM48 24h1v1h-1zM51 24h1v1h-1zM844 24h4v1h-4zM845 25h3v1h-3zM840 26h1v1h-1zM846 26h3v1h-3zM49 27h2v1h-2zM51 28h1v1h-1zM56 28h1v1h-1zM48 29h2v1h-2zM52 29h1v1h-1zM848 29h1v1h-1zM850 29h1v1h-1zM50 30h3v1h-3zM847 30h3v1h-3zM47 31h4v1h-4zM849 31h1v1h-1zM47 32h1v1h-1zM49 32h1v1h-1zM845 32h1v1h-1zM48 33h2v1h-2zM842 33h1v1h-1zM849 33h1v1h-1zM49 34h2v1h-2zM54 34h1v1h-1zM845 34h1v1h-1zM48 35h2v1h-2zM51 35h1v1h-1zM846 35h1v1h-1zM850 35h1v1h-1zM48 36h2v1h-2zM847 36h3v1h-3zM48 37h2v1h-2zM52 37h1v1h-1zM844 37h1v1h-1zM847 37h4v1h-4zM849 38h1v1h-1zM49 39h1v1h-1zM52 39h1v1h-1zM846 39h1v1h-1zM849 39h1v1h-1zM47 40h1v1h-1zM51 41h1v1h-1zM849 41h1v1h-1zM47 42h2v1h-2zM846 42h1v1h-1zM849 42h1v1h-1zM49 43h1v1h-1zM51 44h1v1h-1zM844 44h1v1h-1zM848 44h1v1h-1zM48 45h2v1h-2zM849 45h1v1h-1zM50 46h2v1h-2zM53 46h1v1h-1zM848 46h2v1h-2zM48 47h1v1h-1zM847 47h1v1h-1zM844 48h1v1h-1zM849 48h1v1h-1zM49 49h1v1h-1zM51 49h1v1h-1zM848 49h2v1h-2zM49 50h2v1h-2zM849 50h1v1h-1zM48 51h2v1h-2zM847 51h2v1h-2zM849 52h1v1h-1zM50 53h1v1h-1zM846 53h1v1h-1zM848 53h2v1h-2zM49 54h2v1h-2zM848 54h1v1h-1zM850 54h1v1h-1zM48 55h1v1h-1zM847 55h1v1h-1zM47 56h1v1h-1zM51 56h1v1h-1zM49 57h1v1h-1zM849 57h1v1h-1zM48 58h2v1h-2zM847 58h1v1h-1zM48 59h1v1h-1zM848 59h2v1h-2zM48 60h1v1h-1zM847 60h2v1h-2zM48 61h2v1h-2zM847 61h3v1h-3zM50 62h2v1h-2zM846 62h1v1h-1zM848 62h1v1h-1zM848 63h3v1h-3zM849 64h1v1h-1zM48 65h4v1h-4zM849 65h1v1h-1zM47 66h1v1h-1zM51 66h1v1h-1zM48 67h1v1h-1zM51 67h2v1h-2zM843 67h1v1h-1zM846 67h1v1h-1zM848 67h2v1h-2zM48 68h2v1h-2zM849 68h1v1h-1zM48 69h1v1h-1zM51 69h1v1h-1zM846 69h2v1h-2zM49 70h1v1h-1zM848 70h3v1h-3zM48 71h2v1h-2zM846 71h1v1h-1zM848 71h2v1h-2zM49 72h1v1h-1zM48 73h2v1h-2zM848 73h1v1h-1zM49 74h1v1h-1zM48 75h1v1h-1zM52 75h1v1h-1zM848 75h2v1h-2zM49 76h1v1h-1zM844 76h1v1h-1zM848 76h1v1h-1zM849 77h1v1h-1zM48 78h1v1h-1zM54 78h1v1h-1zM850 78h1v1h-1zM48 79h1v1h-1zM54 79h1v1h-1zM849 79h1v1h-1zM48 80h2v1h-2zM847 80h3v1h-3zM50 81h1v1h-1zM846 81h1v1h-1zM848 81h2v1h-2zM48 82h1v1h-1zM53 82h1v1h-1zM848 82h1v1h-1zM48 83h1v1h-1zM848 83h1v1h-1zM49 84h1v1h-1zM53 84h2v1h-2zM849 84h1v1h-1zM51 85h1v1h-1zM53 85h1v1h-1zM846 85h1v1h-1zM848 85h2v1h-2zM47 86h1v1h-1zM845 86h1v1h-1zM848 86h2v1h-2zM49 87h1v1h-1zM848 87h1v1h-1zM49 88h1v1h-1zM848 88h1v1h-1zM48 89h1v1h-1zM849 89h1v1h-1zM50 90h1v1h-1zM849 90h1v1h-1zM49 91h1v1h-1zM846 91h1v1h-1zM51 92h2v1h-2zM849 92h1v1h-1zM48 93h2v1h-2zM846 93h1v1h-1zM848 93h3v1h-3zM48 94h1v1h-1zM846 94h1v1h-1zM848 94h1v1h-1zM49 95h1v1h-1zM845 95h1v1h-1zM848 95h2v1h-2zM49 96h2v1h-2zM848 96h1v1h-1zM850 96h1v1h-1zM849 97h1v1h-1zM848 98h1v1h-1zM50 99h1v1h-1zM48 100h3v1h-3zM848 100h1v1h-1zM48 101h1v1h-1zM846 101h2v1h-2zM849 101h1v1h-1zM48 102h1v1h-1zM50 102h1v1h-1zM53 102h1v1h-1zM49 103h1v1h-1zM847 103h1v1h-1zM849 103h1v1h-1zM844 104h2v1h-2zM848 104h2v1h-2zM47 105h1v1h-1zM49 105h1v1h-1zM51 105h1v1h-1zM849 105h2v1h-2zM48 106h1v1h-1zM50 106h1v1h-1zM848 106h1v1h-1zM53 107h2v1h-2zM848 107h2v1h-2zM47 108h1v1h-1zM848 108h1v1h-1zM49 109h1v1h-1zM54 109h1v1h-1zM47 110h1v1h-1zM54 110h1v1h-1zM845 110h1v1h-1zM849 110h1v1h-1zM49 111h1v1h-1zM849 111h1v1h-1zM48 112h1v1h-1zM51 112h1v1h-1zM846 112h1v1h-1zM849 112h1v1h-1zM846 113h3v1h-3zM50 114h1v1h-1zM847 114h1v1h-1zM849 114h1v1h-1zM47 115h1v1h-1zM846 116h2v1h-2zM849 116h1v1h-1zM49 117h2v1h-2zM848 117h1v1h-1zM850 117h1v1h-1zM849 119h1v1h-1zM51 120h1v1h-1zM53 120h1v1h-1zM847 120h2v1h-2zM49 121h1v1h-1zM848 121h1v1h-1zM48 122h2v1h-2zM849 122h1v1h-1zM47 123h2v1h-2zM846 123h1v1h-1zM848 123h2v1h-2zM49 124h1v1h-1zM847 124h3v1h-3zM48 125h1v1h-1zM849 125h1v1h-1zM48 126h1v1h-1zM848 126h2v1h-2zM48 127h1v1h-1zM844 127h1v1h-1zM848 127h1v1h-1zM48 130h1v1h-1zM849 130h1v1h-1zM50 131h2v1h-2zM53 131h1v1h-1zM848 131h1v1h-1zM52 132h1v1h-1zM844 132h1v1h-1zM847 132h4v1h-4zM48 133h1v1h-1zM848 133h2v1h-2zM49 134h1v1h-1zM54 134h1v1h-1zM847 134h1v1h-1zM849 134h1v1h-1zM843 135h1v1h-1zM846 135h1v1h-1zM48 136h2v1h-2zM844 136h2v1h-2zM847 136h3v1h-3zM48 137h1v1h-1zM848 137h2v1h-2zM47 138h1v1h-1zM49 139h1v1h-1zM51 140h1v1h-1zM850 140h1v1h-1zM49 141h1v1h-1zM53 141h1v1h-1zM850 141h1v1h-1zM48 142h2v1h-2zM51 142h1v1h-1zM53 142h1v1h-1zM847 142h1v1h-1zM48 143h1v1h-1zM50 143h1v1h-1zM846 143h1v1h-1zM848 143h1v1h-1zM49 144h1v1h-1zM51 144h1v1h-1zM848 144h2v1h-2zM48 145h1v1h-1zM848 145h1v1h-1zM47 146h1v1h-1zM49 146h1v1h-1zM847 146h1v1h-1zM848 147h1v1h-1zM49 148h1v1h-1zM847 148h1v1h-1zM849 148h1v1h-1zM51 149h1v1h-1zM848 149h1v1h-1zM49 150h1v1h-1zM51 150h1v1h-1zM846 150h1v1h-1zM849 150h1v1h-1zM48 151h3v1h-3zM847 151h4v1h-4zM48 152h2v1h-2zM53 152h1v1h-1zM848 152h2v1h-2zM50 153h1v1h-1zM849 153h1v1h-1zM48 154h1v1h-1zM847 154h2v1h-2zM48 155h1v1h-1zM848 155h2v1h-2zM49 156h1v1h-1zM847 156h4v1h-4zM48 157h1v1h-1zM847 157h1v1h-1zM849 157h1v1h-1zM47 159h1v1h-1zM49 159h1v1h-1zM53 159h1v1h-1zM849 159h1v1h-1zM49 160h2v1h-2zM850 160h1v1h-1zM48 161h1v1h-1zM843 161h1v1h-1zM846 161h1v1h-1zM848 161h2v1h-2zM48 162h2v1h-2zM845 162h1v1h-1zM48 163h2v1h-2zM53 163h1v1h-1zM849 163h1v1h-1zM846 164h1v1h-1zM848 164h1v1h-1zM53 165h1v1h-1zM48 166h1v1h-1zM51 166h1v1h-1zM849 166h1v1h-1zM49 167h1v1h-1zM849 167h1v1h-1zM48 168h2v1h-2zM847 168h3v1h-3zM48 169h1v1h-1zM50 169h2v1h-2zM47 170h1v1h-1zM49 170h1v1h-1zM849 170h1v1h-1zM48 171h1v1h-1zM847 171h1v1h-1zM48 172h2v1h-2zM51 172h1v1h-1zM847 172h1v1h-1zM849 172h1v1h-1zM51 173h1v1h-1zM848 173h1v1h-1zM49 174h1v1h-1zM850 174h1v1h-1zM48 175h2v1h-2zM843 175h1v1h-1zM845 175h1v1h-1zM49 176h1v1h-1zM53 176h1v1h-1zM846 176h1v1h-1zM848 176h1v1h-1zM48 177h1v1h-1zM848 177h2v1h-2zM848 178h2v1h-2zM48 179h1v1h-1zM846 179h1v1h-1zM849 180h1v1h-1zM49 181h1v1h-1zM848 181h1v1h-1zM48 182h1v1h-1zM846 182h1v1h-1zM848 182h1v1h-1zM48 183h1v1h-1zM48 184h1v1h-1zM49 185h1v1h-1zM846 185h1v1h-1zM849 185h1v1h-1zM48 186h1v1h-1zM849 186h1v1h-1zM48 187h1v1h-1zM845 187h1v1h-1zM848 187h3v1h-3zM50 188h1v1h-1zM844 188h1v1h-1zM848 188h2v1h-2zM50 189h1v1h-1zM49 190h1v1h-1zM849 190h1v1h-1zM48 191h1v1h-1zM848 191h1v1h-1zM49 192h1v1h-1zM849 192h1v1h-1zM48 193h1v1h-1zM844 193h1v1h-1zM849 193h1v1h-1zM48 194h1v1h-1zM847 194h1v1h-1zM849 194h2v1h-2zM846 195h3v1h-3zM48 196h1v1h-1zM51 196h1v1h-1zM53 196h1v1h-1zM848 196h2v1h-2zM52 197h1v1h-1zM848 197h2v1h-2zM48 198h1v1h-1zM843 198h1v1h-1zM849 198h1v1h-1zM48 199h1v1h-1zM49 200h3v1h-3zM53 200h1v1h-1zM848 200h1v1h-1zM48 201h2v1h-2zM845 201h1v1h-1zM848 201h2v1h-2zM49 202h1v1h-1zM849 202h1v1h-1zM48 203h1v1h-1zM848 203h1v1h-1zM47 204h1v1h-1zM49 204h1v1h-1zM49 205h2v1h-2zM52 205h1v1h-1zM846 205h1v1h-1zM849 205h1v1h-1zM49 206h1v1h-1zM848 206h2v1h-2zM48 207h1v1h-1zM50 207h2v1h-2zM48 208h2v1h-2zM51 208h1v1h-1zM847 208h3v1h-3zM49 209h1v1h-1zM849 209h1v1h-1zM51 210h1v1h-1zM848 210h1v1h-1zM848 211h2v1h-2zM845 212h1v1h-1zM847 212h1v1h-1zM849 212h1v1h-1zM846 213h1v1h-1zM48 214h1v1h-1zM848 214h2v1h-2zM48 215h2v1h-2zM848 215h1v1h-1zM48 216h1v1h-1zM846 216h1v1h-1zM849 216h1v1h-1zM48 217h2v1h-2zM847 217h2v1h-2zM49 218h1v1h-1zM848 218h1v1h-1zM49 219h2v1h-2zM846 219h1v1h-1zM849 219h1v1h-1zM47 220h1v1h-1zM49 220h1v1h-1zM846 220h1v1h-1zM848 220h2v1h-2zM48 221h1v1h-1zM848 221h2v1h-2zM50 222h1v1h-1zM48 223h1v1h-1zM50 224h1v1h-1zM847 225h3v1h-3zM51 226h1v1h-1zM845 226h2v1h-2zM848 226h2v1h-2zM48 227h1v1h-1zM54 227h1v1h-1zM49 229h1v1h-1zM848 229h1v1h-1zM48 230h1v1h-1zM846 230h1v1h-1zM848 230h1v1h-1zM850 230h1v1h-1zM47 231h1v1h-1zM49 231h1v1h-1zM843 231h1v1h-1zM846 231h1v1h-1zM51 232h1v1h-1zM847 232h1v1h-1zM48 233h2v1h-2zM849 233h1v1h-1zM48 234h1v1h-1zM52 234h1v1h-1zM848 234h2v1h-2zM49 235h1v1h-1zM54 235h1v1h-1zM849 235h1v1h-1zM48 236h1v1h-1zM848 236h2v1h-2zM53 237h1v1h-1zM848 237h2v1h-2zM849 238h1v1h-1zM48 239h1v1h-1zM850 239h1v1h-1zM48 240h1v1h-1zM843 240h1v1h-1zM848 240h1v1h-1zM49 241h1v1h-1zM48 242h1v1h-1zM50 242h1v1h-1zM848 242h1v1h-1zM49 243h1v1h-1zM51 243h1v1h-1zM846 243h2v1h-2zM48 244h1v1h-1zM51 244h1v1h-1zM847 244h1v1h-1zM849 244h1v1h-1zM48 245h2v1h-2zM52 245h1v1h-1zM54 245h1v1h-1zM844 245h1v1h-1zM847 245h1v1h-1zM48 246h2v1h-2zM844 246h1v1h-1zM848 246h2v1h-2zM48 247h2v1h-2zM51 247h1v1h-1zM843 247h1v1h-1zM846 247h1v1h-1zM849 247h1v1h-1zM49 248h1v1h-1zM846 248h1v1h-1zM848 248h1v1h-1zM51 249h1v1h-1zM846 249h1v1h-1zM49 250h2v1h-2zM848 250h1v1h-1zM49 251h2v1h-2zM848 251h1v1h-1zM49 252h1v1h-1zM845 252h1v1h-1zM50 253h1v1h-1zM846 253h1v1h-1zM848 254h2v1h-2zM53 255h1v1h-1zM848 255h1v1h-1zM48 256h2v1h-2zM846 256h2v1h-2zM849 256h1v1h-1zM849 257h1v1h-1zM51 258h1v1h-1zM846 259h1v1h-1zM848 259h2v1h-2zM846 260h1v1h-1zM848 260h2v1h-2zM47 261h1v1h-1zM54 261h1v1h-1zM848 261h1v1h-1zM850 261h1v1h-1zM49 262h1v1h-1zM846 262h1v1h-1zM51 263h1v1h-1zM846 263h1v1h-1zM848 263h1v1h-1zM48 264h2v1h-2zM849 264h1v1h-1zM51 265h1v1h-1zM846 265h1v1h-1zM849 265h1v1h-1zM848 266h1v1h-1zM48 267h2v1h-2zM847 267h3v1h-3zM51 268h1v1h-1zM846 268h1v1h-1zM849 268h1v1h-1zM53 269h1v1h-1zM849 269h1v1h-1zM848 270h2v1h-2zM47 271h1v1h-1zM844 271h1v1h-1zM849 271h1v1h-1zM846 272h1v1h-1zM49 273h2v1h-2zM847 273h1v1h-1zM48 274h1v1h-1zM50 274h1v1h-1zM848 275h1v1h-1zM49 276h1v1h-1zM51 276h1v1h-1zM845 277h1v1h-1zM48 278h1v1h-1zM845 278h1v1h-1zM849 278h1v1h-1zM52 279h1v1h-1zM843 279h1v1h-1zM48 280h2v1h-2zM52 280h1v1h-1zM48 281h1v1h-1zM51 281h1v1h-1zM848 281h1v1h-1zM48 282h2v1h-2zM844 282h1v1h-1zM47 283h1v1h-1zM49 283h1v1h-1zM51 283h1v1h-1zM848 283h1v1h-1zM48 284h2v1h-2zM846 284h1v1h-1zM49 285h1v1h-1zM847 285h1v1h-1zM849 285h1v1h-1zM48 286h1v1h-1zM49 287h2v1h-2zM53 287h1v1h-1zM846 287h3v1h-3zM49 288h1v1h-1zM51 288h1v1h-1zM849 289h1v1h-1zM48 290h1v1h-1zM50 290h1v1h-1zM848 290h1v1h-1zM50 291h1v1h-1zM843 291h1v1h-1zM846 291h1v1h-1zM49 292h1v1h-1zM848 292h1v1h-1zM850 292h1v1h-1zM48 293h1v1h-1zM50 293h1v1h-1zM54 293h1v1h-1zM848 293h1v1h-1zM47 294h1v1h-1zM48 295h3v1h-3zM849 295h1v1h-1zM49 296h1v1h-1zM844 296h1v1h-1zM848 296h1v1h-1zM48 297h1v1h-1zM845 297h1v1h-1zM850 297h1v1h-1zM49 298h1v1h-1zM51 298h1v1h-1zM846 298h2v1h-2zM849 298h1v1h-1zM47 299h2v1h-2zM50 299h1v1h-1zM54 299h1v1h-1zM845 299h2v1h-2zM848 299h3v1h-3zM48 300h1v1h-1zM846 300h1v1h-1zM848 300h1v1h-1zM48 301h2v1h-2zM848 301h2v1h-2zM51 302h1v1h-1zM53 302h1v1h-1zM848 302h1v1h-1zM850 303h1v1h-1zM48 304h1v1h-1zM843 304h1v1h-1zM848 304h2v1h-2zM48 305h1v1h-1zM849 305h1v1h-1zM48 306h1v1h-1zM51 307h1v1h-1zM848 307h1v1h-1zM48 308h1v1h-1zM847 308h1v1h-1zM849 308h1v1h-1zM49 309h2v1h-2zM48 310h1v1h-1zM847 310h1v1h-1zM849 311h1v1h-1zM48 312h3v1h-3zM52 312h1v1h-1zM849 312h1v1h-1zM49 313h1v1h-1zM843 313h1v1h-1zM48 314h2v1h-2zM847 314h2v1h-2zM845 315h1v1h-1zM49 316h1v1h-1zM848 316h2v1h-2zM48 317h1v1h-1zM52 317h2v1h-2zM47 318h2v1h-2zM50 318h1v1h-1zM51 319h1v1h-1zM848 319h1v1h-1zM848 320h1v1h-1zM47 321h1v1h-1zM846 321h2v1h-2zM849 321h1v1h-1zM54 322h1v1h-1zM844 322h1v1h-1zM848 322h1v1h-1zM48 323h3v1h-3zM844 323h1v1h-1zM848 323h3v1h-3zM849 324h1v1h-1zM48 325h2v1h-2zM54 325h1v1h-1zM848 326h3v1h-3zM48 327h2v1h-2zM51 327h1v1h-1zM849 327h1v1h-1zM49 328h2v1h-2zM54 328h1v1h-1zM847 328h1v1h-1zM849 328h1v1h-1zM49 329h2v1h-2zM52 329h1v1h-1zM846 329h1v1h-1zM49 330h3v1h-3zM849 330h1v1h-1zM49 331h1v1h-1zM51 331h1v1h-1zM848 331h2v1h-2zM49 332h1v1h-1zM846 332h5v1h-5zM48 333h1v1h-1zM848 333h2v1h-2zM48 335h1v1h-1zM848 335h1v1h-1zM49 336h1v1h-1zM849 336h1v1h-1zM48 337h1v1h-1zM47 338h2v1h-2zM848 338h1v1h-1zM48 339h1v1h-1zM52 339h1v1h-1zM848 339h3v1h-3zM50 340h1v1h-1zM846 340h1v1h-1zM49 341h1v1h-1zM48 342h1v1h-1zM51 342h1v1h-1zM849 342h1v1h-1zM48 343h2v1h-2zM849 343h1v1h-1zM48 344h2v1h-2zM51 344h1v1h-1zM846 344h2v1h-2zM49 345h1v1h-1zM51 345h1v1h-1zM846 345h1v1h-1zM848 345h2v1h-2zM847 346h2v1h-2zM49 347h1v1h-1zM848 347h2v1h-2zM49 348h1v1h-1zM51 348h3v1h-3zM848 348h2v1h-2zM48 349h1v1h-1zM849 349h1v1h-1zM54 350h1v1h-1zM847 350h2v1h-2zM48 351h2v1h-2zM51 351h1v1h-1zM847 352h2v1h-2zM48 353h1v1h-1zM849 353h2v1h-2zM848 354h1v1h-1zM850 354h1v1h-1zM48 355h1v1h-1zM53 355h1v1h-1zM846 355h1v1h-1zM848 355h1v1h-1zM47 356h1v1h-1zM52 356h1v1h-1zM847 356h2v1h-2zM48 357h2v1h-2zM848 357h2v1h-2zM849 358h1v1h-1zM48 359h1v1h-1zM848 359h2v1h-2zM48 360h2v1h-2zM845 360h1v1h-1zM848 360h1v1h-1zM48 361h1v1h-1zM848 361h1v1h-1zM843 362h1v1h-1zM847 362h2v1h-2zM850 362h1v1h-1zM48 364h1v1h-1zM848 364h3v1h-3zM49 365h1v1h-1zM846 365h1v1h-1zM49 366h1v1h-1zM845 366h2v1h-2zM849 366h1v1h-1zM48 367h1v1h-1zM50 367h1v1h-1zM52 367h1v1h-1zM848 367h1v1h-1zM48 368h2v1h-2zM846 368h1v1h-1zM48 369h1v1h-1zM846 369h2v1h-2zM48 370h1v1h-1zM849 370h1v1h-1zM847 371h2v1h-2zM47 372h1v1h-1zM50 372h1v1h-1zM848 373h2v1h-2zM49 374h1v1h-1zM48 375h1v1h-1zM843 375h1v1h-1zM48 376h3v1h-3zM54 376h1v1h-1zM849 376h1v1h-1zM49 377h1v1h-1zM848 377h2v1h-2zM49 378h1v1h-1zM52 378h1v1h-1zM847 378h4v1h-4zM49 379h1v1h-1zM848 379h1v1h-1zM48 380h2v1h-2zM848 380h1v1h-1zM49 381h2v1h-2zM844 381h1v1h-1zM847 381h1v1h-1zM849 381h1v1h-1zM47 382h2v1h-2zM848 382h1v1h-1zM49 383h2v1h-2zM846 383h1v1h-1zM848 383h1v1h-1zM844 384h1v1h-1zM848 384h1v1h-1zM47 385h1v1h-1zM54 385h1v1h-1zM849 385h1v1h-1zM49 386h1v1h-1zM51 386h1v1h-1zM847 386h3v1h-3zM49 387h1v1h-1zM51 387h1v1h-1zM54 387h1v1h-1zM844 387h1v1h-1zM846 387h1v1h-1zM848 387h1v1h-1zM51 388h1v1h-1zM48 389h1v1h-1zM51 389h1v1h-1zM54 389h1v1h-1zM844 389h1v1h-1zM846 389h1v1h-1zM850 390h1v1h-1zM49 391h3v1h-3zM846 391h1v1h-1zM848 391h2v1h-2zM49 392h1v1h-1zM54 392h1v1h-1zM846 392h1v1h-1zM48 393h2v1h-2zM48 394h2v1h-2zM849 394h1v1h-1zM48 395h1v1h-1zM848 395h1v1h-1zM50 396h1v1h-1zM52 396h1v1h-1zM845 396h1v1h-1zM849 396h1v1h-1zM48 397h2v1h-2zM51 397h1v1h-1zM51 398h1v1h-1zM849 398h1v1h-1zM48 399h2v1h-2zM849 399h1v1h-1zM48 400h1v1h-1zM846 400h1v1h-1zM848 400h2v1h-2zM48 401h2v1h-2zM845 401h2v1h-2zM849 401h1v1h-1zM47 402h4v1h-4zM54 402h1v1h-1zM848 402h1v1h-1zM850 402h1v1h-1zM48 403h2v1h-2zM844 403h1v1h-1zM848 403h1v1h-1zM846 404h3v1h-3zM850 404h1v1h-1zM848 405h1v1h-1zM850 405h1v1h-1zM47 406h2v1h-2zM849 406h1v1h-1zM48 407h2v1h-2zM51 407h1v1h-1zM48 408h2v1h-2zM848 408h2v1h-2zM48 409h1v1h-1zM848 409h1v1h-1zM48 410h3v1h-3zM846 410h1v1h-1zM49 411h1v1h-1zM847 411h1v1h-1zM47 412h2v1h-2zM50 412h1v1h-1zM849 412h1v1h-1zM848 413h1v1h-1zM846 414h1v1h-1zM47 415h2v1h-2zM50 415h1v1h-1zM52 415h1v1h-1zM844 415h1v1h-1zM847 415h3v1h-3zM48 416h1v1h-1zM50 416h1v1h-1zM848 416h1v1h-1zM48 418h2v1h-2zM844 418h1v1h-1zM848 418h1v1h-1zM48 419h2v1h-2zM51 419h1v1h-1zM846 419h1v1h-1zM848 419h1v1h-1zM848 420h1v1h-1zM844 421h1v1h-1zM849 421h1v1h-1zM48 422h2v1h-2zM51 422h1v1h-1zM848 422h3v1h-3zM47 423h4v1h-4zM847 423h1v1h-1zM850 423h1v1h-1zM51 424h1v1h-1zM849 424h1v1h-1zM845 425h1v1h-1zM847 425h2v1h-2zM51 426h1v1h-1zM49 427h1v1h-1zM848 427h1v1h-1zM48 428h1v1h-1zM50 428h1v1h-1zM54 428h1v1h-1zM847 428h2v1h-2zM49 429h3v1h-3zM848 429h2v1h-2zM48 430h2v1h-2zM51 430h1v1h-1zM53 430h1v1h-1zM845 430h1v1h-1zM847 430h3v1h-3zM48 431h1v1h-1zM848 431h1v1h-1zM48 432h2v1h-2zM51 433h1v1h-1zM849 433h1v1h-1zM848 434h1v1h-1zM49 435h2v1h-2zM843 435h1v1h-1zM849 435h1v1h-1zM51 436h1v1h-1zM849 436h1v1h-1zM49 437h1v1h-1zM843 437h1v1h-1zM849 437h1v1h-1zM48 438h2v1h-2zM845 438h1v1h-1zM49 439h1v1h-1zM51 439h1v1h-1zM847 439h1v1h-1zM849 439h1v1h-1zM48 440h2v1h-2zM51 440h1v1h-1zM843 440h1v1h-1zM847 440h1v1h-1zM849 440h1v1h-1zM49 441h1v1h-1zM54 441h1v1h-1zM843 441h1v1h-1zM849 441h1v1h-1zM49 442h2v1h-2zM846 442h1v1h-1zM850 442h1v1h-1zM48 443h1v1h-1zM849 443h1v1h-1zM48 444h1v1h-1zM848 444h1v1h-1zM48 445h4v1h-4zM848 445h2v1h-2zM52 446h1v1h-1zM848 446h1v1h-1zM850 446h1v1h-1zM50 447h1v1h-1zM48 448h2v1h-2zM848 448h2v1h-2zM48 449h2v1h-2zM51 449h1v1h-1zM848 449h1v1h-1zM47 450h1v1h-1zM49 450h1v1h-1zM848 450h2v1h-2zM48 451h2v1h-2zM849 451h1v1h-1zM49 452h1v1h-1zM845 452h1v1h-1zM848 452h1v1h-1zM51 453h1v1h-1zM849 453h1v1h-1zM48 454h1v1h-1zM849 454h1v1h-1zM49 455h1v1h-1zM844 455h1v1h-1zM848 455h2v1h-2zM48 456h1v1h-1zM50 456h1v1h-1zM846 456h1v1h-1zM848 456h1v1h-1zM48 457h2v1h-2zM51 457h2v1h-2zM849 457h1v1h-1zM50 458h1v1h-1zM848 458h1v1h-1zM51 459h1v1h-1zM53 459h1v1h-1zM848 459h1v1h-1zM49 460h2v1h-2zM849 460h1v1h-1zM48 461h2v1h-2zM54 461h1v1h-1zM847 461h3v1h-3zM48 462h2v1h-2zM847 462h2v1h-2zM48 463h2v1h-2zM51 463h1v1h-1zM845 463h1v1h-1zM48 464h1v1h-1zM848 464h2v1h-2zM48 466h1v1h-1zM848 466h1v1h-1zM48 467h2v1h-2zM848 467h1v1h-1zM48 468h1v1h-1zM53 468h1v1h-1zM848 468h2v1h-2zM47 469h1v1h-1zM49 469h1v1h-1zM48 470h1v1h-1zM849 470h1v1h-1zM48 471h3v1h-3zM846 471h2v1h-2zM48 472h3v1h-3zM848 472h2v1h-2zM48 473h3v1h-3zM844 473h1v1h-1zM848 473h2v1h-2zM48 474h3v1h-3zM845 474h2v1h-2zM49 475h1v1h-1zM843 475h1v1h-1zM849 475h1v1h-1zM47 476h2v1h-2zM849 476h1v1h-1zM51 477h1v1h-1zM844 477h2v1h-2zM848 477h2v1h-2zM48 478h2v1h-2zM846 478h1v1h-1zM48 479h3v1h-3zM54 479h1v1h-1zM48 480h1v1h-1zM51 480h1v1h-1zM848 480h1v1h-1zM49 481h1v1h-1zM51 481h1v1h-1zM849 481h2v1h-2zM48 482h1v1h-1zM846 482h1v1h-1zM848 482h1v1h-1zM51 483h1v1h-1zM849 483h1v1h-1zM51 484h1v1h-1zM848 484h1v1h-1zM48 485h1v1h-1zM51 485h1v1h-1zM843 485h2v1h-2zM846 485h1v1h-1zM848 485h2v1h-2zM846 486h1v1h-1zM848 486h1v1h-1zM47 487h1v1h-1zM49 487h1v1h-1zM848 487h1v1h-1zM845 488h1v1h-1zM47 489h1v1h-1zM49 489h2v1h-2zM849 489h1v1h-1zM51 490h1v1h-1zM847 490h4v1h-4zM48 491h2v1h-2zM849 491h1v1h-1zM48 492h1v1h-1zM54 492h1v1h-1zM848 493h2v1h-2zM48 494h1v1h-1zM847 494h2v1h-2zM49 495h1v1h-1zM54 495h1v1h-1zM846 495h1v1h-1zM848 495h2v1h-2zM48 496h1v1h-1zM51 496h1v1h-1zM848 496h2v1h-2zM48 497h1v1h-1zM50 497h2v1h-2zM48 498h1v1h-1zM50 498h1v1h-1zM843 498h1v1h-1zM849 498h1v1h-1zM49 499h1v1h-1zM51 499h1v1h-1zM843 499h2v1h-2zM847 499h1v1h-1zM49 500h3v1h-3zM849 500h1v1h-1zM48 501h2v1h-2zM846 501h1v1h-1zM848 501h2v1h-2zM50 502h1v1h-1zM49 503h1v1h-1zM51 503h1v1h-1zM48 504h2v1h-2zM845 504h1v1h-1zM849 504h1v1h-1zM50 505h1v1h-1zM49 506h1v1h-1zM51 506h1v1h-1zM848 506h1v1h-1zM48 507h2v1h-2zM51 507h1v1h-1zM847 507h3v1h-3zM49 508h1v1h-1zM848 508h1v1h-1zM850 508h1v1h-1zM48 509h1v1h-1zM47 510h2v1h-2zM845 510h2v1h-2zM848 510h2v1h-2zM846 511h1v1h-1zM848 511h2v1h-2zM47 512h1v1h-1zM49 512h1v1h-1zM848 512h1v1h-1zM48 513h2v1h-2zM847 513h2v1h-2zM48 514h1v1h-1zM50 514h2v1h-2zM847 514h3v1h-3zM48 515h3v1h-3zM52 515h1v1h-1zM847 515h1v1h-1zM846 516h3v1h-3zM48 517h1v1h-1zM848 517h2v1h-2zM49 518h1v1h-1zM54 518h1v1h-1zM847 518h2v1h-2zM47 519h1v1h-1zM49 519h1v1h-1zM846 519h2v1h-2zM849 519h2v1h-2zM47 520h5v1h-5zM848 520h2v1h-2zM48 521h1v1h-1zM847 522h3v1h-3zM846 523h1v1h-1zM848 523h2v1h-2zM53 524h1v1h-1zM846 524h1v1h-1zM49 525h1v1h-1zM54 525h1v1h-1zM848 525h1v1h-1zM48 526h1v1h-1zM53 526h1v1h-1zM848 526h1v1h-1zM48 527h2v1h-2zM55 527h1v1h-1zM48 528h1v1h-1zM845 528h1v1h-1zM845 529h2v1h-2zM849 529h1v1h-1zM49 530h2v1h-2zM847 530h2v1h-2zM47 531h1v1h-1zM48 532h3v1h-3zM847 532h1v1h-1zM849 532h1v1h-1zM49 533h1v1h-1zM57 533h1v1h-1zM847 533h2v1h-2zM51 534h1v1h-1zM846 534h2v1h-2zM50 535h2v1h-2zM846 535h1v1h-1zM848 535h1v1h-1zM850 535h1v1h-1zM849 536h1v1h-1zM49 537h1v1h-1zM51 537h1v1h-1zM838 537h1v1h-1zM51 538h1v1h-1zM845 538h1v1h-1zM51 539h2v1h-2zM55 539h1v1h-1zM843 539h1v1h-1zM845 539h2v1h-2zM53 540h1v1h-1zM841 540h1v1h-1zM844 540h2v1h-2zM53 541h2v1h-2zM57 541h1v1h-1zM839 541h1v1h-1zM842 541h1v1h-1zM844 541h2v1h-2zM53 542h2v1h-2zM60 542h1v1h-1zM841 542h1v1h-1zM841 543h2v1h-2zM55 544h1v1h-1zM57 544h1v1h-1zM63 544h1v1h-1zM832 544h1v1h-1zM840 544h1v1h-1zM67 545h1v1h-1zM839 545h1v1h-1zM842 545h1v1h-1zM57 546h1v1h-1zM65 546h1v1h-1zM831 546h1v1h-1zM839 546h3v1h-3zM59 547h1v1h-1zM64 547h1v1h-1zM830 547h1v1h-1zM59 548h3v1h-3zM63 548h1v1h-1zM73 548h1v1h-1zM836 548h2v1h-2zM60 549h3v1h-3zM66 549h1v1h-1zM832 549h1v1h-1zM837 549h1v1h-1zM839 549h1v1h-1zM63 550h3v1h-3zM81 550h1v1h-1zM818 550h1v1h-1zM821 550h1v1h-1zM829 550h1v1h-1zM833 550h2v1h-2zM63 551h1v1h-1zM67 551h1v1h-1zM69 551h1v1h-1zM71 551h1v1h-1zM73 551h1v1h-1zM79 551h1v1h-1zM94 551h1v1h-1zM104 551h1v1h-1zM110 551h1v1h-1zM129 551h1v1h-1zM139 551h1v1h-1zM151 551h1v1h-1zM153 551h1v1h-1zM172 551h1v1h-1zM235 551h1v1h-1zM243 551h1v1h-1zM266 551h1v1h-1zM270 551h1v1h-1zM273 551h1v1h-1zM299 551h1v1h-1zM314 551h1v1h-1zM323 551h1v1h-1zM329 551h1v1h-1zM374 551h2v1h-2zM383 551h1v1h-1zM389 551h1v1h-1zM392 551h1v1h-1zM415 551h1v1h-1zM417 551h1v1h-1zM436 551h1v1h-1zM448 551h1v1h-1zM477 551h1v1h-1zM482 551h1v1h-1zM485 551h1v1h-1zM493 551h1v1h-1zM511 551h1v1h-1zM523 551h1v1h-1zM546 551h1v1h-1zM570 551h1v1h-1zM574 551h1v1h-1zM577 551h1v1h-1zM585 551h1v1h-1zM594 551h1v1h-1zM626 551h1v1h-1zM712 551h1v1h-1zM720 551h1v1h-1zM735 551h1v1h-1zM752 551h1v1h-1zM769 551h1v1h-1zM798 551h1v1h-1zM808 551h1v1h-1zM831 551h1v1h-1zM833 551h2v1h-2zM68 552h1v1h-1zM71 552h2v1h-2zM84 552h1v1h-1zM104 552h1v1h-1zM120 552h1v1h-1zM129 552h1v1h-1zM139 552h1v1h-1zM163 552h1v1h-1zM207 552h1v1h-1zM257 552h1v1h-1zM265 552h1v1h-1zM282 552h1v1h-1zM295 552h1v1h-1zM333 552h1v1h-1zM406 552h1v1h-1zM417 552h1v1h-1zM429 552h1v1h-1zM436 552h1v1h-1zM449 552h1v1h-1zM461 552h1v1h-1zM501 552h1v1h-1zM547 552h1v1h-1zM574 552h1v1h-1zM579 552h1v1h-1zM599 552h1v1h-1zM640 552h1v1h-1zM735 552h1v1h-1zM771 552h1v1h-1zM786 552h1v1h-1zM790 552h1v1h-1zM799 552h1v1h-1zM817 552h2v1h-2zM827 552h3v1h-3zM832 552h1v1h-1zM834 552h1v1h-1zM67 553h1v1h-1zM69 553h1v1h-1zM71 553h1v1h-1zM90 553h1v1h-1zM107 553h1v1h-1zM163 553h1v1h-1zM179 553h2v1h-2zM193 553h1v1h-1zM234 553h1v1h-1zM238 553h1v1h-1zM241 553h1v1h-1zM276 553h1v1h-1zM282 553h1v1h-1zM334 553h1v1h-1zM345 553h1v1h-1zM361 553h1v1h-1zM378 553h1v1h-1zM382 553h1v1h-1zM393 553h1v1h-1zM404 553h1v1h-1zM439 553h1v1h-1zM443 553h1v1h-1zM455 553h1v1h-1zM459 553h1v1h-1zM462 553h1v1h-1zM486 553h1v1h-1zM498 553h1v1h-1zM510 553h1v1h-1zM517 553h1v1h-1zM523 553h1v1h-1zM542 553h1v1h-1zM550 553h1v1h-1zM578 553h1v1h-1zM586 553h1v1h-1zM594 553h2v1h-2zM626 553h1v1h-1zM628 553h1v1h-1zM668 553h1v1h-1zM671 553h1v1h-1zM686 553h1v1h-1zM699 553h1v1h-1zM703 553h1v1h-1zM723 553h1v1h-1zM736 553h1v1h-1zM755 553h1v1h-1zM768 553h1v1h-1zM790 553h1v1h-1zM820 553h1v1h-1zM828 553h1v1h-1zM830 553h1v1h-1zM69 554h1v1h-1zM71 554h1v1h-1zM82 554h1v1h-1zM85 554h1v1h-1zM104 554h1v1h-1zM112 554h1v1h-1zM115 554h1v1h-1zM129 554h2v1h-2zM135 554h1v1h-1zM139 554h1v1h-1zM141 554h1v1h-1zM145 554h1v1h-1zM147 554h2v1h-2zM151 554h1v1h-1zM153 554h1v1h-1zM158 554h1v1h-1zM163 554h1v1h-1zM165 554h1v1h-1zM180 554h1v1h-1zM182 554h1v1h-1zM188 554h1v1h-1zM196 554h1v1h-1zM200 554h1v1h-1zM213 554h1v1h-1zM217 554h2v1h-2zM227 554h1v1h-1zM244 554h1v1h-1zM256 554h2v1h-2zM259 554h1v1h-1zM263 554h1v1h-1zM265 554h1v1h-1zM267 554h2v1h-2zM270 554h1v1h-1zM278 554h2v1h-2zM282 554h1v1h-1zM286 554h1v1h-1zM292 554h1v1h-1zM294 554h1v1h-1zM298 554h1v1h-1zM308 554h1v1h-1zM328 554h1v1h-1zM332 554h1v1h-1zM336 554h1v1h-1zM343 554h2v1h-2zM346 554h2v1h-2zM350 554h1v1h-1zM355 554h1v1h-1zM365 554h2v1h-2zM372 554h1v1h-1zM374 554h1v1h-1zM382 554h1v1h-1zM386 554h1v1h-1zM392 554h1v1h-1zM403 554h2v1h-2zM417 554h1v1h-1zM422 554h1v1h-1zM432 554h1v1h-1zM447 554h2v1h-2zM453 554h1v1h-1zM456 554h2v1h-2zM466 554h1v1h-1zM470 554h1v1h-1zM474 554h1v1h-1zM476 554h2v1h-2zM482 554h2v1h-2zM493 554h1v1h-1zM508 554h1v1h-1zM516 554h2v1h-2zM519 554h1v1h-1zM524 554h1v1h-1zM537 554h1v1h-1zM547 554h2v1h-2zM554 554h1v1h-1zM556 554h3v1h-3zM564 554h1v1h-1zM567 554h1v1h-1zM569 554h1v1h-1zM571 554h3v1h-3zM576 554h1v1h-1zM583 554h1v1h-1zM590 554h1v1h-1zM595 554h1v1h-1zM598 554h1v1h-1zM614 554h2v1h-2zM618 554h1v1h-1zM623 554h1v1h-1zM631 554h1v1h-1zM634 554h1v1h-1zM644 554h1v1h-1zM647 554h1v1h-1zM649 554h1v1h-1zM657 554h1v1h-1zM667 554h1v1h-1zM670 554h1v1h-1zM672 554h1v1h-1zM675 554h1v1h-1zM681 554h1v1h-1zM690 554h1v1h-1zM697 554h1v1h-1zM700 554h1v1h-1zM704 554h1v1h-1zM713 554h1v1h-1zM717 554h1v1h-1zM720 554h1v1h-1zM722 554h1v1h-1zM733 554h1v1h-1zM739 554h1v1h-1zM744 554h1v1h-1zM748 554h1v1h-1zM750 554h1v1h-1zM753 554h1v1h-1zM756 554h1v1h-1zM773 554h1v1h-1zM775 554h2v1h-2zM782 554h2v1h-2zM795 554h1v1h-1zM797 554h1v1h-1zM815 554h1v1h-1zM818 554h1v1h-1zM821 554h1v1h-1zM823 554h1v1h-1zM826 554h2v1h-2zM73 555h1v1h-1zM75 555h2v1h-2zM79 555h2v1h-2zM95 555h1v1h-1zM99 555h1v1h-1zM101 555h1v1h-1zM107 555h2v1h-2zM110 555h1v1h-1zM116 555h1v1h-1zM137 555h1v1h-1zM141 555h2v1h-2zM144 555h1v1h-1zM147 555h1v1h-1zM150 555h1v1h-1zM161 555h1v1h-1zM165 555h1v1h-1zM168 555h1v1h-1zM171 555h1v1h-1zM174 555h1v1h-1zM177 555h3v1h-3zM182 555h1v1h-1zM195 555h1v1h-1zM205 555h1v1h-1zM211 555h1v1h-1zM214 555h1v1h-1zM216 555h1v1h-1zM231 555h3v1h-3zM243 555h1v1h-1zM247 555h1v1h-1zM255 555h1v1h-1zM261 555h1v1h-1zM271 555h1v1h-1zM278 555h1v1h-1zM280 555h1v1h-1zM287 555h1v1h-1zM298 555h1v1h-1zM301 555h1v1h-1zM310 555h2v1h-2zM321 555h1v1h-1zM326 555h4v1h-4zM333 555h1v1h-1zM337 555h1v1h-1zM339 555h1v1h-1zM346 555h1v1h-1zM350 555h1v1h-1zM353 555h2v1h-2zM362 555h2v1h-2zM368 555h1v1h-1zM378 555h1v1h-1zM387 555h1v1h-1zM389 555h1v1h-1zM392 555h1v1h-1zM400 555h1v1h-1zM408 555h1v1h-1zM412 555h1v1h-1zM415 555h1v1h-1zM430 555h1v1h-1zM432 555h1v1h-1zM440 555h1v1h-1zM445 555h1v1h-1zM450 555h1v1h-1zM460 555h1v1h-1zM475 555h2v1h-2zM480 555h1v1h-1zM488 555h2v1h-2zM491 555h1v1h-1zM499 555h1v1h-1zM513 555h2v1h-2zM517 555h2v1h-2zM523 555h1v1h-1zM530 555h1v1h-1zM532 555h1v1h-1zM537 555h1v1h-1zM539 555h1v1h-1zM547 555h1v1h-1zM556 555h1v1h-1zM565 555h1v1h-1zM570 555h1v1h-1zM580 555h1v1h-1zM585 555h2v1h-2zM589 555h3v1h-3zM593 555h2v1h-2zM596 555h1v1h-1zM603 555h1v1h-1zM605 555h1v1h-1zM609 555h1v1h-1zM626 555h2v1h-2zM631 555h1v1h-1zM633 555h1v1h-1zM635 555h1v1h-1zM637 555h1v1h-1zM641 555h2v1h-2zM644 555h1v1h-1zM646 555h2v1h-2zM651 555h1v1h-1zM655 555h1v1h-1zM658 555h1v1h-1zM665 555h1v1h-1zM673 555h1v1h-1zM677 555h1v1h-1zM679 555h1v1h-1zM685 555h1v1h-1zM693 555h1v1h-1zM702 555h1v1h-1zM707 555h1v1h-1zM709 555h1v1h-1zM727 555h1v1h-1zM729 555h1v1h-1zM739 555h1v1h-1zM741 555h1v1h-1zM744 555h2v1h-2zM747 555h1v1h-1zM754 555h1v1h-1zM764 555h1v1h-1zM767 555h1v1h-1zM770 555h1v1h-1zM774 555h1v1h-1zM776 555h1v1h-1zM780 555h1v1h-1zM782 555h2v1h-2zM788 555h1v1h-1zM792 555h1v1h-1zM799 555h1v1h-1zM806 555h1v1h-1zM814 555h1v1h-1zM816 555h4v1h-4zM821 555h1v1h-1zM824 555h2v1h-2zM71 556h1v1h-1zM75 556h6v1h-6zM82 556h2v1h-2zM86 556h1v1h-1zM88 556h2v1h-2zM94 556h1v1h-1zM97 556h2v1h-2zM103 556h2v1h-2zM107 556h2v1h-2zM111 556h4v1h-4zM116 556h2v1h-2zM119 556h2v1h-2zM126 556h2v1h-2zM129 556h2v1h-2zM133 556h1v1h-1zM135 556h1v1h-1zM139 556h2v1h-2zM146 556h1v1h-1zM150 556h4v1h-4zM157 556h1v1h-1zM160 556h1v1h-1zM166 556h3v1h-3zM171 556h1v1h-1zM173 556h2v1h-2zM180 556h1v1h-1zM182 556h1v1h-1zM184 556h3v1h-3zM189 556h2v1h-2zM195 556h2v1h-2zM199 556h1v1h-1zM202 556h1v1h-1zM207 556h3v1h-3zM215 556h1v1h-1zM220 556h1v1h-1zM224 556h1v1h-1zM227 556h2v1h-2zM234 556h5v1h-5zM240 556h3v1h-3zM244 556h3v1h-3zM248 556h2v1h-2zM251 556h1v1h-1zM255 556h2v1h-2zM261 556h2v1h-2zM265 556h1v1h-1zM268 556h2v1h-2zM271 556h2v1h-2zM274 556h1v1h-1zM277 556h3v1h-3zM283 556h2v1h-2zM287 556h1v1h-1zM291 556h1v1h-1zM293 556h1v1h-1zM295 556h2v1h-2zM299 556h1v1h-1zM302 556h1v1h-1zM304 556h1v1h-1zM306 556h1v1h-1zM308 556h1v1h-1zM311 556h2v1h-2zM315 556h2v1h-2zM319 556h1v1h-1zM321 556h3v1h-3zM326 556h1v1h-1zM329 556h1v1h-1zM332 556h2v1h-2zM335 556h3v1h-3zM340 556h1v1h-1zM344 556h1v1h-1zM351 556h1v1h-1zM355 556h1v1h-1zM358 556h1v1h-1zM365 556h1v1h-1zM370 556h4v1h-4zM376 556h1v1h-1zM381 556h1v1h-1zM383 556h1v1h-1zM385 556h3v1h-3zM389 556h2v1h-2zM392 556h2v1h-2zM400 556h2v1h-2zM403 556h1v1h-1zM407 556h1v1h-1zM409 556h2v1h-2zM412 556h1v1h-1zM415 556h1v1h-1zM419 556h2v1h-2zM422 556h1v1h-1zM425 556h1v1h-1zM429 556h3v1h-3zM433 556h2v1h-2zM437 556h1v1h-1zM439 556h1v1h-1zM441 556h3v1h-3zM447 556h2v1h-2zM450 556h1v1h-1zM452 556h2v1h-2zM457 556h2v1h-2zM462 556h4v1h-4zM467 556h1v1h-1zM471 556h6v1h-6zM479 556h1v1h-1zM482 556h5v1h-5zM493 556h1v1h-1zM496 556h1v1h-1zM498 556h1v1h-1zM500 556h1v1h-1zM503 556h2v1h-2zM507 556h2v1h-2zM510 556h2v1h-2zM515 556h1v1h-1zM518 556h2v1h-2zM521 556h2v1h-2zM525 556h2v1h-2zM528 556h1v1h-1zM530 556h2v1h-2zM534 556h1v1h-1zM539 556h5v1h-5zM546 556h1v1h-1zM551 556h4v1h-4zM557 556h1v1h-1zM561 556h2v1h-2zM565 556h2v1h-2zM570 556h1v1h-1zM576 556h1v1h-1zM578 556h3v1h-3zM582 556h1v1h-1zM587 556h1v1h-1zM590 556h1v1h-1zM592 556h2v1h-2zM595 556h2v1h-2zM600 556h2v1h-2zM603 556h1v1h-1zM606 556h2v1h-2zM609 556h1v1h-1zM611 556h1v1h-1zM614 556h4v1h-4zM619 556h5v1h-5zM626 556h4v1h-4zM631 556h1v1h-1zM638 556h1v1h-1zM642 556h3v1h-3zM647 556h1v1h-1zM650 556h2v1h-2zM655 556h1v1h-1zM659 556h2v1h-2zM662 556h1v1h-1zM666 556h1v1h-1zM669 556h1v1h-1zM674 556h2v1h-2zM677 556h1v1h-1zM681 556h1v1h-1zM684 556h3v1h-3zM690 556h2v1h-2zM693 556h2v1h-2zM697 556h3v1h-3zM702 556h2v1h-2zM706 556h1v1h-1zM711 556h1v1h-1zM713 556h1v1h-1zM716 556h3v1h-3zM720 556h2v1h-2zM723 556h5v1h-5zM729 556h1v1h-1zM732 556h2v1h-2zM735 556h1v1h-1zM737 556h1v1h-1zM741 556h2v1h-2zM744 556h3v1h-3zM749 556h1v1h-1zM751 556h4v1h-4zM756 556h2v1h-2zM759 556h1v1h-1zM762 556h1v1h-1zM764 556h1v1h-1zM766 556h1v1h-1zM776 556h3v1h-3zM780 556h1v1h-1zM782 556h1v1h-1zM784 556h2v1h-2zM788 556h1v1h-1zM790 556h1v1h-1zM792 556h1v1h-1zM797 556h1v1h-1zM800 556h2v1h-2zM804 556h2v1h-2zM807 556h2v1h-2zM810 556h2v1h-2zM813 556h5v1h-5zM820 556h1v1h-1zM85 557h1v1h-1zM94 557h1v1h-1zM97 557h1v1h-1zM99 557h1v1h-1zM101 557h1v1h-1zM107 557h1v1h-1zM110 557h1v1h-1zM114 557h2v1h-2zM126 557h1v1h-1zM128 557h1v1h-1zM130 557h1v1h-1zM133 557h2v1h-2zM136 557h4v1h-4zM141 557h2v1h-2zM144 557h3v1h-3zM152 557h2v1h-2zM155 557h1v1h-1zM158 557h1v1h-1zM161 557h2v1h-2zM164 557h1v1h-1zM166 557h1v1h-1zM168 557h1v1h-1zM170 557h6v1h-6zM177 557h1v1h-1zM179 557h3v1h-3zM183 557h1v1h-1zM185 557h6v1h-6zM192 557h1v1h-1zM195 557h1v1h-1zM201 557h1v1h-1zM208 557h3v1h-3zM212 557h2v1h-2zM216 557h1v1h-1zM218 557h2v1h-2zM226 557h1v1h-1zM228 557h1v1h-1zM230 557h1v1h-1zM232 557h1v1h-1zM234 557h3v1h-3zM239 557h5v1h-5zM245 557h1v1h-1zM248 557h1v1h-1zM252 557h2v1h-2zM257 557h1v1h-1zM259 557h3v1h-3zM263 557h2v1h-2zM266 557h4v1h-4zM271 557h1v1h-1zM273 557h1v1h-1zM275 557h1v1h-1zM279 557h1v1h-1zM282 557h7v1h-7zM292 557h2v1h-2zM296 557h1v1h-1zM300 557h2v1h-2zM305 557h1v1h-1zM309 557h2v1h-2zM312 557h4v1h-4zM317 557h1v1h-1zM320 557h1v1h-1zM322 557h1v1h-1zM324 557h3v1h-3zM333 557h2v1h-2zM336 557h3v1h-3zM340 557h3v1h-3zM347 557h1v1h-1zM351 557h1v1h-1zM355 557h1v1h-1zM357 557h2v1h-2zM364 557h1v1h-1zM366 557h1v1h-1zM368 557h3v1h-3zM372 557h2v1h-2zM375 557h1v1h-1zM377 557h2v1h-2zM381 557h1v1h-1zM384 557h2v1h-2zM390 557h2v1h-2zM393 557h1v1h-1zM395 557h2v1h-2zM399 557h1v1h-1zM404 557h4v1h-4zM410 557h1v1h-1zM414 557h1v1h-1zM418 557h1v1h-1zM420 557h2v1h-2zM423 557h1v1h-1zM426 557h2v1h-2zM430 557h1v1h-1zM433 557h1v1h-1zM439 557h1v1h-1zM442 557h3v1h-3zM446 557h1v1h-1zM448 557h2v1h-2zM453 557h3v1h-3zM460 557h2v1h-2zM464 557h2v1h-2zM467 557h1v1h-1zM471 557h1v1h-1zM473 557h4v1h-4zM479 557h2v1h-2zM482 557h1v1h-1zM485 557h3v1h-3zM489 557h1v1h-1zM491 557h1v1h-1zM496 557h1v1h-1zM499 557h1v1h-1zM502 557h8v1h-8zM512 557h1v1h-1zM516 557h1v1h-1zM518 557h2v1h-2zM521 557h1v1h-1zM527 557h1v1h-1zM529 557h3v1h-3zM534 557h1v1h-1zM536 557h3v1h-3zM552 557h1v1h-1zM556 557h3v1h-3zM560 557h6v1h-6zM567 557h1v1h-1zM570 557h2v1h-2zM573 557h3v1h-3zM579 557h6v1h-6zM587 557h2v1h-2zM592 557h1v1h-1zM595 557h2v1h-2zM601 557h2v1h-2zM606 557h2v1h-2zM617 557h1v1h-1zM621 557h8v1h-8zM630 557h1v1h-1zM636 557h3v1h-3zM640 557h2v1h-2zM643 557h3v1h-3zM650 557h2v1h-2zM657 557h2v1h-2zM660 557h1v1h-1zM662 557h1v1h-1zM665 557h2v1h-2zM669 557h1v1h-1zM671 557h2v1h-2zM675 557h2v1h-2zM681 557h1v1h-1zM684 557h2v1h-2zM687 557h5v1h-5zM693 557h1v1h-1zM697 557h1v1h-1zM700 557h1v1h-1zM704 557h1v1h-1zM706 557h3v1h-3zM711 557h2v1h-2zM717 557h1v1h-1zM721 557h1v1h-1zM723 557h2v1h-2zM726 557h4v1h-4zM731 557h1v1h-1zM734 557h1v1h-1zM738 557h3v1h-3zM743 557h3v1h-3zM748 557h1v1h-1zM750 557h1v1h-1zM761 557h2v1h-2zM764 557h2v1h-2zM767 557h1v1h-1zM770 557h3v1h-3zM774 557h4v1h-4zM779 557h1v1h-1zM781 557h3v1h-3zM785 557h1v1h-1zM789 557h1v1h-1zM791 557h1v1h-1zM794 557h5v1h-5zM800 557h1v1h-1zM804 557h2v1h-2zM807 557h1v1h-1zM809 557h1v1h-1zM813 557h1v1h-1zM110 558h1v1h-1zM140 558h1v1h-1zM163 558h1v1h-1zM203 558h1v1h-1zM236 558h1v1h-1zM281 558h1v1h-1zM299 558h1v1h-1zM311 558h1v1h-1zM319 558h1v1h-1zM324 558h1v1h-1zM336 558h1v1h-1zM354 558h1v1h-1zM366 558h1v1h-1zM370 558h2v1h-2zM383 558h2v1h-2zM388 558h1v1h-1zM418 558h1v1h-1zM424 558h1v1h-1zM453 558h1v1h-1zM468 558h2v1h-2zM473 558h2v1h-2zM490 558h1v1h-1zM497 558h1v1h-1zM500 558h1v1h-1zM518 558h1v1h-1zM536 558h1v1h-1zM538 558h1v1h-1zM547 558h1v1h-1zM550 558h1v1h-1zM556 558h1v1h-1zM564 558h1v1h-1zM585 558h1v1h-1zM595 558h1v1h-1zM602 558h1v1h-1zM631 558h1v1h-1zM658 558h1v1h-1zM667 558h1v1h-1zM722 558h1v1h-1zM728 558h1v1h-1zM799 558h1v1h-1z"/><path fill="#6a70a0" d="M89 6h1v1h-1zM92 6h1v1h-1zM100 6h1v1h-1zM102 6h1v1h-1zM126 6h1v1h-1zM144 6h1v1h-1zM148 6h1v1h-1zM156 6h1v1h-1zM166 6h1v1h-1zM178 6h1v1h-1zM181 6h1v1h-1zM214 6h1v1h-1zM218 6h1v1h-1zM223 6h2v1h-2zM246 6h1v1h-1zM249 6h1v1h-1zM268 6h1v1h-1zM276 6h2v1h-2zM283 6h1v1h-1zM292 6h1v1h-1zM299 6h1v1h-1zM320 6h1v1h-1zM341 6h1v1h-1zM364 6h1v1h-1zM376 6h1v1h-1zM381 6h1v1h-1zM384 6h1v1h-1zM387 6h1v1h-1zM413 6h1v1h-1zM417 6h1v1h-1zM446 6h2v1h-2zM455 6h1v1h-1zM473 6h1v1h-1zM485 6h1v1h-1zM539 6h2v1h-2zM571 6h1v1h-1zM576 6h1v1h-1zM578 6h1v1h-1zM582 6h1v1h-1zM591 6h1v1h-1zM596 6h1v1h-1zM610 6h1v1h-1zM634 6h1v1h-1zM652 6h1v1h-1zM660 6h1v1h-1zM670 6h1v1h-1zM691 6h2v1h-2zM695 6h2v1h-2zM701 6h1v1h-1zM719 6h1v1h-1zM724 6h1v1h-1zM745 6h1v1h-1zM750 6h1v1h-1zM771 6h1v1h-1zM805 6h1v1h-1zM808 6h2v1h-2zM81 7h1v1h-1zM88 7h1v1h-1zM102 7h1v1h-1zM120 7h1v1h-1zM125 7h1v1h-1zM132 7h1v1h-1zM137 7h1v1h-1zM154 7h1v1h-1zM188 7h1v1h-1zM214 7h1v1h-1zM224 7h2v1h-2zM234 7h1v1h-1zM260 7h1v1h-1zM268 7h1v1h-1zM272 7h1v1h-1zM279 7h1v1h-1zM288 7h1v1h-1zM303 7h1v1h-1zM332 7h1v1h-1zM343 7h1v1h-1zM383 7h1v1h-1zM385 7h1v1h-1zM387 7h1v1h-1zM397 7h1v1h-1zM408 7h1v1h-1zM413 7h1v1h-1zM429 7h1v1h-1zM435 7h2v1h-2zM447 7h1v1h-1zM477 7h1v1h-1zM479 7h2v1h-2zM482 7h1v1h-1zM510 7h1v1h-1zM525 7h1v1h-1zM529 7h1v1h-1zM538 7h1v1h-1zM547 7h1v1h-1zM623 7h1v1h-1zM626 7h1v1h-1zM635 7h1v1h-1zM654 7h1v1h-1zM662 7h1v1h-1zM683 7h1v1h-1zM722 7h2v1h-2zM744 7h1v1h-1zM749 7h1v1h-1zM751 7h1v1h-1zM767 7h1v1h-1zM782 7h1v1h-1zM785 7h1v1h-1zM789 7h1v1h-1zM791 7h1v1h-1zM802 7h1v1h-1zM77 8h1v1h-1zM80 8h1v1h-1zM84 8h1v1h-1zM87 8h1v1h-1zM106 8h1v1h-1zM108 8h1v1h-1zM120 8h1v1h-1zM129 8h2v1h-2zM133 8h2v1h-2zM144 8h1v1h-1zM157 8h1v1h-1zM165 8h2v1h-2zM170 8h1v1h-1zM172 8h1v1h-1zM184 8h1v1h-1zM196 8h2v1h-2zM212 8h1v1h-1zM225 8h1v1h-1zM237 8h1v1h-1zM263 8h1v1h-1zM267 8h1v1h-1zM279 8h1v1h-1zM290 8h3v1h-3zM308 8h1v1h-1zM312 8h1v1h-1zM319 8h1v1h-1zM328 8h1v1h-1zM334 8h2v1h-2zM360 8h1v1h-1zM364 8h1v1h-1zM369 8h1v1h-1zM376 8h1v1h-1zM381 8h1v1h-1zM395 8h1v1h-1zM400 8h1v1h-1zM410 8h1v1h-1zM413 8h1v1h-1zM432 8h1v1h-1zM434 8h1v1h-1zM443 8h1v1h-1zM463 8h1v1h-1zM467 8h1v1h-1zM482 8h1v1h-1zM495 8h1v1h-1zM498 8h1v1h-1zM517 8h1v1h-1zM527 8h1v1h-1zM533 8h1v1h-1zM557 8h1v1h-1zM561 8h1v1h-1zM570 8h1v1h-1zM591 8h1v1h-1zM595 8h2v1h-2zM599 8h1v1h-1zM604 8h1v1h-1zM615 8h2v1h-2zM618 8h1v1h-1zM629 8h1v1h-1zM637 8h1v1h-1zM644 8h1v1h-1zM657 8h1v1h-1zM679 8h1v1h-1zM681 8h2v1h-2zM697 8h1v1h-1zM716 8h1v1h-1zM723 8h1v1h-1zM727 8h1v1h-1zM729 8h1v1h-1zM731 8h1v1h-1zM736 8h1v1h-1zM781 8h1v1h-1zM70 9h1v1h-1zM99 9h1v1h-1zM104 9h1v1h-1zM140 9h1v1h-1zM158 9h2v1h-2zM178 9h1v1h-1zM181 9h2v1h-2zM199 9h1v1h-1zM214 9h1v1h-1zM226 9h1v1h-1zM253 9h1v1h-1zM279 9h1v1h-1zM281 9h1v1h-1zM285 9h1v1h-1zM293 9h1v1h-1zM300 9h1v1h-1zM305 9h2v1h-2zM308 9h1v1h-1zM331 9h1v1h-1zM334 9h1v1h-1zM351 9h1v1h-1zM355 9h1v1h-1zM384 9h1v1h-1zM394 9h1v1h-1zM405 9h1v1h-1zM428 9h1v1h-1zM437 9h1v1h-1zM439 9h1v1h-1zM442 9h1v1h-1zM471 9h1v1h-1zM505 9h1v1h-1zM525 9h2v1h-2zM538 9h2v1h-2zM544 9h1v1h-1zM549 9h1v1h-1zM562 9h1v1h-1zM593 9h2v1h-2zM601 9h1v1h-1zM614 9h2v1h-2zM617 9h1v1h-1zM631 9h1v1h-1zM637 9h1v1h-1zM648 9h1v1h-1zM650 9h1v1h-1zM654 9h1v1h-1zM665 9h1v1h-1zM669 9h1v1h-1zM687 9h1v1h-1zM692 9h1v1h-1zM702 9h2v1h-2zM713 9h2v1h-2zM772 9h1v1h-1zM774 9h1v1h-1zM815 9h1v1h-1zM818 9h1v1h-1zM824 9h1v1h-1zM77 10h1v1h-1zM84 10h1v1h-1zM98 10h1v1h-1zM101 10h3v1h-3zM123 10h1v1h-1zM148 10h1v1h-1zM189 10h1v1h-1zM198 10h1v1h-1zM208 10h1v1h-1zM210 10h2v1h-2zM228 10h1v1h-1zM252 10h1v1h-1zM272 10h1v1h-1zM280 10h1v1h-1zM314 10h1v1h-1zM317 10h1v1h-1zM330 10h1v1h-1zM339 10h1v1h-1zM341 10h1v1h-1zM343 10h1v1h-1zM353 10h1v1h-1zM360 10h1v1h-1zM366 10h1v1h-1zM385 10h1v1h-1zM389 10h1v1h-1zM402 10h1v1h-1zM416 10h1v1h-1zM418 10h1v1h-1zM440 10h1v1h-1zM455 10h1v1h-1zM461 10h1v1h-1zM466 10h1v1h-1zM470 10h1v1h-1zM473 10h2v1h-2zM483 10h1v1h-1zM485 10h1v1h-1zM491 10h1v1h-1zM504 10h1v1h-1zM528 10h1v1h-1zM536 10h1v1h-1zM542 10h1v1h-1zM591 10h1v1h-1zM594 10h1v1h-1zM597 10h1v1h-1zM601 10h2v1h-2zM614 10h1v1h-1zM666 10h1v1h-1zM668 10h1v1h-1zM687 10h3v1h-3zM697 10h1v1h-1zM701 10h1v1h-1zM715 10h1v1h-1zM735 10h1v1h-1zM746 10h1v1h-1zM749 10h1v1h-1zM751 10h1v1h-1zM774 10h1v1h-1zM783 10h1v1h-1zM800 10h1v1h-1zM803 10h1v1h-1zM65 11h1v1h-1zM70 11h1v1h-1zM68 13h1v1h-1zM833 13h1v1h-1zM64 14h1v1h-1zM827 14h1v1h-1zM831 14h1v1h-1zM833 14h1v1h-1zM61 15h1v1h-1zM830 15h1v1h-1zM836 15h1v1h-1zM832 16h1v1h-1zM837 16h1v1h-1zM833 17h1v1h-1zM60 18h1v1h-1zM838 18h1v1h-1zM61 19h1v1h-1zM841 19h1v1h-1zM840 21h1v1h-1zM58 22h1v1h-1zM838 22h1v1h-1zM59 23h1v1h-1zM839 23h1v1h-1zM843 24h1v1h-1zM53 27h2v1h-2zM842 27h1v1h-1zM845 27h2v1h-2zM841 28h1v1h-1zM843 28h1v1h-1zM845 31h1v1h-1zM842 32h1v1h-1zM846 32h2v1h-2zM843 33h1v1h-1zM845 33h1v1h-1zM52 34h1v1h-1zM846 34h1v1h-1zM50 36h1v1h-1zM845 36h1v1h-1zM52 38h1v1h-1zM54 41h1v1h-1zM54 42h1v1h-1zM843 42h1v1h-1zM54 45h1v1h-1zM846 46h2v1h-2zM845 48h1v1h-1zM843 49h1v1h-1zM847 50h1v1h-1zM51 51h1v1h-1zM54 51h1v1h-1zM844 51h1v1h-1zM845 53h1v1h-1zM54 54h1v1h-1zM847 54h1v1h-1zM846 55h1v1h-1zM847 56h1v1h-1zM50 57h1v1h-1zM843 58h3v1h-3zM843 59h1v1h-1zM52 61h1v1h-1zM843 61h1v1h-1zM52 62h1v1h-1zM54 63h1v1h-1zM847 65h1v1h-1zM54 66h1v1h-1zM844 67h1v1h-1zM847 67h1v1h-1zM53 68h1v1h-1zM845 68h2v1h-2zM51 70h1v1h-1zM847 71h1v1h-1zM50 72h1v1h-1zM53 72h2v1h-2zM845 72h1v1h-1zM847 72h1v1h-1zM54 75h1v1h-1zM843 76h1v1h-1zM53 77h1v1h-1zM845 77h1v1h-1zM50 78h1v1h-1zM845 78h1v1h-1zM844 79h1v1h-1zM845 80h1v1h-1zM50 83h1v1h-1zM53 83h2v1h-2zM843 83h1v1h-1zM843 84h1v1h-1zM845 85h1v1h-1zM52 86h1v1h-1zM846 86h1v1h-1zM53 89h1v1h-1zM843 89h1v1h-1zM51 90h1v1h-1zM53 90h1v1h-1zM51 91h1v1h-1zM845 91h1v1h-1zM52 93h2v1h-2zM53 94h1v1h-1zM54 96h1v1h-1zM843 97h1v1h-1zM845 97h1v1h-1zM845 100h1v1h-1zM54 101h1v1h-1zM844 103h2v1h-2zM52 107h1v1h-1zM50 108h1v1h-1zM845 108h1v1h-1zM53 111h1v1h-1zM846 111h1v1h-1zM54 113h1v1h-1zM54 114h1v1h-1zM52 118h2v1h-2zM50 120h1v1h-1zM844 120h1v1h-1zM52 121h1v1h-1zM847 121h1v1h-1zM53 123h1v1h-1zM844 123h1v1h-1zM52 125h1v1h-1zM844 126h1v1h-1zM846 126h1v1h-1zM53 127h1v1h-1zM54 128h1v1h-1zM50 130h1v1h-1zM52 130h1v1h-1zM843 130h1v1h-1zM847 130h1v1h-1zM846 131h1v1h-1zM50 136h1v1h-1zM52 136h1v1h-1zM54 137h1v1h-1zM843 137h1v1h-1zM50 138h1v1h-1zM845 138h1v1h-1zM51 139h2v1h-2zM54 143h1v1h-1zM50 144h1v1h-1zM53 144h1v1h-1zM53 145h2v1h-2zM846 145h1v1h-1zM51 146h1v1h-1zM844 146h1v1h-1zM54 147h1v1h-1zM847 147h1v1h-1zM844 149h1v1h-1zM54 150h1v1h-1zM51 151h1v1h-1zM52 152h1v1h-1zM844 152h1v1h-1zM845 154h2v1h-2zM844 155h1v1h-1zM50 159h1v1h-1zM843 159h1v1h-1zM846 159h1v1h-1zM53 162h1v1h-1zM50 163h1v1h-1zM843 163h1v1h-1zM844 164h1v1h-1zM843 165h1v1h-1zM51 167h2v1h-2zM53 168h1v1h-1zM54 169h1v1h-1zM845 170h1v1h-1zM843 172h1v1h-1zM846 173h1v1h-1zM50 174h1v1h-1zM53 174h1v1h-1zM53 175h2v1h-2zM52 179h1v1h-1zM52 181h1v1h-1zM844 183h1v1h-1zM845 184h1v1h-1zM51 185h1v1h-1zM54 186h1v1h-1zM52 187h1v1h-1zM845 188h1v1h-1zM52 189h2v1h-2zM847 190h1v1h-1zM50 191h1v1h-1zM51 192h1v1h-1zM843 192h1v1h-1zM53 193h1v1h-1zM845 193h1v1h-1zM53 195h1v1h-1zM50 196h1v1h-1zM52 196h1v1h-1zM847 200h1v1h-1zM54 205h1v1h-1zM844 206h1v1h-1zM844 207h1v1h-1zM53 208h2v1h-2zM844 209h1v1h-1zM846 211h1v1h-1zM54 212h1v1h-1zM844 212h1v1h-1zM53 214h2v1h-2zM847 214h1v1h-1zM847 215h1v1h-1zM50 216h1v1h-1zM844 216h1v1h-1zM50 217h1v1h-1zM51 219h1v1h-1zM844 220h1v1h-1zM847 220h1v1h-1zM51 221h1v1h-1zM845 221h1v1h-1zM53 225h1v1h-1zM52 226h1v1h-1zM844 226h1v1h-1zM52 227h1v1h-1zM845 227h1v1h-1zM846 228h1v1h-1zM54 229h1v1h-1zM51 231h1v1h-1zM844 231h1v1h-1zM847 233h1v1h-1zM53 234h1v1h-1zM50 235h1v1h-1zM52 237h1v1h-1zM843 237h1v1h-1zM50 239h1v1h-1zM843 239h1v1h-1zM846 239h1v1h-1zM846 240h1v1h-1zM51 242h1v1h-1zM53 242h1v1h-1zM847 242h1v1h-1zM846 244h1v1h-1zM51 248h1v1h-1zM845 248h1v1h-1zM843 250h1v1h-1zM844 251h1v1h-1zM51 252h1v1h-1zM51 253h1v1h-1zM844 253h1v1h-1zM52 255h1v1h-1zM50 256h1v1h-1zM51 257h1v1h-1zM54 258h1v1h-1zM844 259h1v1h-1zM847 261h1v1h-1zM844 262h1v1h-1zM52 263h1v1h-1zM843 263h1v1h-1zM53 266h2v1h-2zM847 266h1v1h-1zM843 267h1v1h-1zM51 272h1v1h-1zM847 272h1v1h-1zM847 274h1v1h-1zM843 276h1v1h-1zM846 277h1v1h-1zM51 279h1v1h-1zM847 281h1v1h-1zM50 282h1v1h-1zM53 283h2v1h-2zM51 286h1v1h-1zM843 286h1v1h-1zM54 287h1v1h-1zM845 287h1v1h-1zM53 288h1v1h-1zM54 289h1v1h-1zM53 290h1v1h-1zM53 291h1v1h-1zM51 292h1v1h-1zM53 293h1v1h-1zM50 294h1v1h-1zM845 294h2v1h-2zM845 295h1v1h-1zM52 297h1v1h-1zM843 298h1v1h-1zM844 299h1v1h-1zM844 300h1v1h-1zM53 303h2v1h-2zM846 303h1v1h-1zM50 304h1v1h-1zM845 304h1v1h-1zM846 305h1v1h-1zM51 306h1v1h-1zM50 308h1v1h-1zM54 308h1v1h-1zM52 309h1v1h-1zM54 309h1v1h-1zM53 310h1v1h-1zM51 311h1v1h-1zM54 311h1v1h-1zM846 312h1v1h-1zM844 315h1v1h-1zM51 316h2v1h-2zM843 316h2v1h-2zM844 317h1v1h-1zM54 319h1v1h-1zM846 320h1v1h-1zM847 325h1v1h-1zM54 327h1v1h-1zM53 329h2v1h-2zM845 329h1v1h-1zM846 330h1v1h-1zM50 331h1v1h-1zM845 332h1v1h-1zM844 333h1v1h-1zM50 334h2v1h-2zM50 336h1v1h-1zM847 337h1v1h-1zM52 338h1v1h-1zM846 338h1v1h-1zM54 339h1v1h-1zM50 342h1v1h-1zM844 343h1v1h-1zM50 344h1v1h-1zM843 344h1v1h-1zM52 345h1v1h-1zM844 345h1v1h-1zM50 346h1v1h-1zM53 346h1v1h-1zM51 347h1v1h-1zM844 350h1v1h-1zM844 351h1v1h-1zM52 352h1v1h-1zM50 354h1v1h-1zM844 355h1v1h-1zM54 356h1v1h-1zM845 357h1v1h-1zM54 360h1v1h-1zM50 364h1v1h-1zM844 365h1v1h-1zM843 368h1v1h-1zM843 369h1v1h-1zM54 371h1v1h-1zM845 371h1v1h-1zM843 372h1v1h-1zM846 372h1v1h-1zM843 374h1v1h-1zM844 375h1v1h-1zM846 375h2v1h-2zM845 376h1v1h-1zM51 377h1v1h-1zM52 379h2v1h-2zM50 380h1v1h-1zM52 380h1v1h-1zM843 380h1v1h-1zM847 380h1v1h-1zM52 381h1v1h-1zM51 383h1v1h-1zM50 385h1v1h-1zM845 388h1v1h-1zM51 390h1v1h-1zM847 391h1v1h-1zM847 392h1v1h-1zM845 393h1v1h-1zM50 394h1v1h-1zM843 394h1v1h-1zM846 394h1v1h-1zM50 398h1v1h-1zM846 398h1v1h-1zM50 399h1v1h-1zM53 399h1v1h-1zM843 400h1v1h-1zM843 401h1v1h-1zM53 402h1v1h-1zM843 402h1v1h-1zM846 402h1v1h-1zM51 404h1v1h-1zM843 404h1v1h-1zM843 407h1v1h-1zM50 408h1v1h-1zM52 408h1v1h-1zM844 413h1v1h-1zM847 413h1v1h-1zM844 414h1v1h-1zM54 416h1v1h-1zM843 416h1v1h-1zM843 417h1v1h-1zM50 418h1v1h-1zM53 419h1v1h-1zM51 420h1v1h-1zM54 420h1v1h-1zM845 420h1v1h-1zM844 423h1v1h-1zM50 424h1v1h-1zM843 424h1v1h-1zM52 425h1v1h-1zM54 426h1v1h-1zM846 426h1v1h-1zM50 431h1v1h-1zM846 431h1v1h-1zM843 433h1v1h-1zM53 435h1v1h-1zM846 436h1v1h-1zM54 437h1v1h-1zM846 439h1v1h-1zM51 442h1v1h-1zM845 442h1v1h-1zM50 443h1v1h-1zM51 444h1v1h-1zM53 445h1v1h-1zM845 445h1v1h-1zM50 446h1v1h-1zM846 449h1v1h-1zM843 451h1v1h-1zM847 451h1v1h-1zM54 454h1v1h-1zM843 454h1v1h-1zM845 454h2v1h-2zM844 458h3v1h-3zM844 459h2v1h-2zM52 460h1v1h-1zM845 460h1v1h-1zM844 461h2v1h-2zM51 462h1v1h-1zM54 463h1v1h-1zM843 463h1v1h-1zM50 464h1v1h-1zM51 466h1v1h-1zM53 466h1v1h-1zM50 467h2v1h-2zM846 467h1v1h-1zM54 469h1v1h-1zM845 469h2v1h-2zM51 470h1v1h-1zM53 472h1v1h-1zM843 472h1v1h-1zM843 473h1v1h-1zM847 475h1v1h-1zM53 479h1v1h-1zM844 479h1v1h-1zM53 481h1v1h-1zM843 481h1v1h-1zM845 481h1v1h-1zM843 482h1v1h-1zM53 483h1v1h-1zM844 486h1v1h-1zM54 489h1v1h-1zM53 490h1v1h-1zM845 490h1v1h-1zM51 494h1v1h-1zM52 495h1v1h-1zM52 498h1v1h-1zM843 500h3v1h-3zM50 501h1v1h-1zM843 502h1v1h-1zM845 502h1v1h-1zM53 503h1v1h-1zM843 503h1v1h-1zM54 504h1v1h-1zM847 504h1v1h-1zM53 506h1v1h-1zM844 507h1v1h-1zM54 508h1v1h-1zM51 509h1v1h-1zM844 510h1v1h-1zM847 512h1v1h-1zM54 515h1v1h-1zM50 517h1v1h-1zM52 517h1v1h-1zM50 518h1v1h-1zM53 518h1v1h-1zM54 519h1v1h-1zM52 520h1v1h-1zM845 520h1v1h-1zM847 521h1v1h-1zM50 522h1v1h-1zM53 523h1v1h-1zM51 527h1v1h-1zM51 528h1v1h-1zM55 529h1v1h-1zM840 533h1v1h-1zM842 533h1v1h-1zM55 535h1v1h-1zM56 536h1v1h-1zM844 536h1v1h-1zM59 537h1v1h-1zM839 537h1v1h-1zM56 538h1v1h-1zM58 538h1v1h-1zM843 538h1v1h-1zM57 540h1v1h-1zM61 540h1v1h-1zM838 540h1v1h-1zM840 540h1v1h-1zM837 541h1v1h-1zM840 541h1v1h-1zM63 542h1v1h-1zM839 542h1v1h-1zM57 543h1v1h-1zM61 543h1v1h-1zM63 543h1v1h-1zM59 544h1v1h-1zM836 544h1v1h-1zM65 545h1v1h-1zM62 546h1v1h-1zM66 546h1v1h-1zM827 547h2v1h-2zM833 547h1v1h-1zM836 547h1v1h-1zM65 548h1v1h-1zM65 549h1v1h-1zM71 549h1v1h-1zM822 549h1v1h-1zM825 549h1v1h-1zM80 551h1v1h-1zM84 551h1v1h-1zM96 551h1v1h-1zM102 551h2v1h-2zM127 551h1v1h-1zM131 551h1v1h-1zM147 551h1v1h-1zM157 551h1v1h-1zM167 551h2v1h-2zM175 551h1v1h-1zM183 551h1v1h-1zM189 551h1v1h-1zM204 551h1v1h-1zM206 551h1v1h-1zM217 551h1v1h-1zM245 551h1v1h-1zM264 551h1v1h-1zM311 551h1v1h-1zM327 551h1v1h-1zM346 551h1v1h-1zM352 551h1v1h-1zM378 551h1v1h-1zM380 551h1v1h-1zM393 551h1v1h-1zM400 551h1v1h-1zM407 551h1v1h-1zM440 551h1v1h-1zM447 551h1v1h-1zM449 551h1v1h-1zM466 551h1v1h-1zM473 551h1v1h-1zM489 551h1v1h-1zM495 551h1v1h-1zM497 551h1v1h-1zM513 551h1v1h-1zM519 551h1v1h-1zM528 551h1v1h-1zM541 551h1v1h-1zM543 551h1v1h-1zM554 551h2v1h-2zM557 551h1v1h-1zM568 551h1v1h-1zM583 551h1v1h-1zM590 551h1v1h-1zM596 551h1v1h-1zM604 551h1v1h-1zM622 551h1v1h-1zM633 551h1v1h-1zM649 551h1v1h-1zM661 551h1v1h-1zM672 551h1v1h-1zM682 551h1v1h-1zM685 551h1v1h-1zM698 551h1v1h-1zM700 551h1v1h-1zM704 551h1v1h-1zM708 551h1v1h-1zM718 551h1v1h-1zM721 551h1v1h-1zM730 551h1v1h-1zM741 551h1v1h-1zM744 551h1v1h-1zM750 551h1v1h-1zM790 551h1v1h-1zM79 552h1v1h-1zM88 552h1v1h-1zM109 552h1v1h-1zM137 552h1v1h-1zM156 552h1v1h-1zM176 552h1v1h-1zM184 552h1v1h-1zM190 552h1v1h-1zM211 552h1v1h-1zM218 552h1v1h-1zM220 552h1v1h-1zM234 552h1v1h-1zM251 552h1v1h-1zM267 552h1v1h-1zM277 552h1v1h-1zM289 552h1v1h-1zM310 552h2v1h-2zM323 552h1v1h-1zM330 552h1v1h-1zM334 552h1v1h-1zM348 552h1v1h-1zM353 552h1v1h-1zM370 552h1v1h-1zM387 552h1v1h-1zM404 552h1v1h-1zM407 552h1v1h-1zM414 552h1v1h-1zM416 552h1v1h-1zM431 552h2v1h-2zM444 552h1v1h-1zM450 552h1v1h-1zM467 552h1v1h-1zM469 552h2v1h-2zM484 552h1v1h-1zM497 552h1v1h-1zM499 552h1v1h-1zM508 552h2v1h-2zM511 552h1v1h-1zM528 552h2v1h-2zM540 552h1v1h-1zM560 552h1v1h-1zM567 552h1v1h-1zM569 552h1v1h-1zM589 552h2v1h-2zM621 552h1v1h-1zM623 552h1v1h-1zM630 552h1v1h-1zM649 552h1v1h-1zM658 552h1v1h-1zM676 552h1v1h-1zM679 552h1v1h-1zM681 552h1v1h-1zM690 552h1v1h-1zM696 552h1v1h-1zM716 552h1v1h-1zM725 552h1v1h-1zM739 552h1v1h-1zM743 552h1v1h-1zM751 552h1v1h-1zM761 552h1v1h-1zM788 552h1v1h-1zM813 552h1v1h-1zM820 552h1v1h-1zM94 553h1v1h-1zM99 553h2v1h-2zM102 553h1v1h-1zM115 553h1v1h-1zM128 553h1v1h-1zM135 553h1v1h-1zM151 553h2v1h-2zM158 553h1v1h-1zM183 553h1v1h-1zM198 553h1v1h-1zM200 553h1v1h-1zM229 553h1v1h-1zM247 553h1v1h-1zM252 553h1v1h-1zM263 553h1v1h-1zM290 553h1v1h-1zM307 553h1v1h-1zM324 553h1v1h-1zM327 553h2v1h-2zM338 553h1v1h-1zM342 553h1v1h-1zM348 553h1v1h-1zM366 553h1v1h-1zM388 553h1v1h-1zM409 553h1v1h-1zM431 553h3v1h-3zM447 553h1v1h-1zM467 553h1v1h-1zM471 553h1v1h-1zM476 553h1v1h-1zM499 553h1v1h-1zM505 553h1v1h-1zM519 553h1v1h-1zM527 553h1v1h-1zM532 553h1v1h-1zM552 553h1v1h-1zM566 553h1v1h-1zM571 553h1v1h-1zM574 553h2v1h-2zM579 553h1v1h-1zM582 553h1v1h-1zM587 553h1v1h-1zM589 553h1v1h-1zM615 553h1v1h-1zM631 553h1v1h-1zM641 553h1v1h-1zM656 553h1v1h-1zM667 553h1v1h-1zM690 553h1v1h-1zM715 553h1v1h-1zM718 553h1v1h-1zM722 553h1v1h-1zM731 553h1v1h-1zM739 553h1v1h-1zM744 553h1v1h-1zM748 553h1v1h-1zM764 553h1v1h-1zM774 553h1v1h-1zM778 553h1v1h-1zM788 553h2v1h-2zM795 553h1v1h-1zM806 553h1v1h-1zM89 554h1v1h-1zM100 554h1v1h-1zM108 554h1v1h-1zM120 554h1v1h-1zM122 554h1v1h-1zM126 554h1v1h-1zM138 554h1v1h-1zM155 554h2v1h-2zM172 554h1v1h-1zM177 554h1v1h-1zM185 554h1v1h-1zM187 554h1v1h-1zM211 554h1v1h-1zM224 554h1v1h-1zM230 554h1v1h-1zM239 554h1v1h-1zM269 554h1v1h-1zM276 554h2v1h-2zM297 554h1v1h-1zM305 554h1v1h-1zM351 554h2v1h-2zM358 554h1v1h-1zM424 554h1v1h-1zM436 554h1v1h-1zM442 554h1v1h-1zM454 554h1v1h-1zM499 554h1v1h-1zM502 554h1v1h-1zM512 554h1v1h-1zM521 554h1v1h-1zM527 554h1v1h-1zM580 554h1v1h-1zM605 554h2v1h-2zM619 554h1v1h-1zM633 554h1v1h-1zM642 554h1v1h-1zM652 554h1v1h-1zM691 554h1v1h-1zM699 554h1v1h-1zM718 554h1v1h-1zM721 554h1v1h-1zM730 554h1v1h-1zM766 554h2v1h-2zM772 554h1v1h-1zM784 554h1v1h-1zM789 554h1v1h-1zM794 554h1v1h-1zM88 555h1v1h-1zM93 555h1v1h-1zM102 555h1v1h-1zM105 555h1v1h-1zM133 555h1v1h-1zM167 555h1v1h-1zM189 555h1v1h-1zM198 555h1v1h-1zM202 555h1v1h-1zM222 555h1v1h-1zM227 555h1v1h-1zM234 555h1v1h-1zM264 555h1v1h-1zM266 555h2v1h-2zM282 555h1v1h-1zM297 555h1v1h-1zM318 555h1v1h-1zM322 555h1v1h-1zM355 555h1v1h-1zM386 555h1v1h-1zM396 555h1v1h-1zM406 555h1v1h-1zM411 555h1v1h-1zM414 555h1v1h-1zM417 555h1v1h-1zM420 555h1v1h-1zM425 555h2v1h-2zM441 555h1v1h-1zM448 555h1v1h-1zM458 555h1v1h-1zM470 555h1v1h-1zM502 555h1v1h-1zM510 555h1v1h-1zM516 555h1v1h-1zM572 555h1v1h-1zM574 555h1v1h-1zM576 555h1v1h-1zM582 555h1v1h-1zM588 555h1v1h-1zM619 555h1v1h-1zM623 555h1v1h-1zM667 555h1v1h-1zM671 555h1v1h-1zM676 555h1v1h-1zM683 555h1v1h-1zM711 555h1v1h-1zM721 555h1v1h-1zM731 555h1v1h-1zM753 555h1v1h-1zM795 555h1v1h-1zM798 555h1v1h-1z"/><path fill="#e8e020" d="M103 4h1v1h-1zM111 4h1v1h-1zM128 4h1v1h-1zM152 4h1v1h-1zM175 4h1v1h-1zM187 4h1v1h-1zM196 4h2v1h-2zM203 4h2v1h-2zM218 4h1v1h-1zM246 4h1v1h-1zM249 4h1v1h-1zM269 4h1v1h-1zM292 4h1v1h-1zM294 4h1v1h-1zM297 4h1v1h-1zM299 4h1v1h-1zM303 4h1v1h-1zM318 4h1v1h-1zM364 4h1v1h-1zM368 4h1v1h-1zM372 4h1v1h-1zM386 4h1v1h-1zM388 4h1v1h-1zM394 4h1v1h-1zM400 4h1v1h-1zM407 4h2v1h-2zM410 4h1v1h-1zM417 4h1v1h-1zM423 4h1v1h-1zM426 4h1v1h-1zM443 4h1v1h-1zM445 4h1v1h-1zM475 4h1v1h-1zM490 4h1v1h-1zM503 4h1v1h-1zM515 4h1v1h-1zM519 4h1v1h-1zM534 4h1v1h-1zM536 4h1v1h-1zM553 4h1v1h-1zM585 4h1v1h-1zM590 4h1v1h-1zM609 4h1v1h-1zM647 4h1v1h-1zM656 4h1v1h-1zM659 4h1v1h-1zM674 4h1v1h-1zM677 4h1v1h-1zM682 4h1v1h-1zM686 4h1v1h-1zM691 4h1v1h-1zM707 4h1v1h-1zM739 4h1v1h-1zM745 4h1v1h-1zM767 4h2v1h-2zM778 4h1v1h-1zM782 4h1v1h-1zM794 4h1v1h-1zM74 5h1v1h-1zM84 5h1v1h-1zM103 5h1v1h-1zM108 5h2v1h-2zM120 5h2v1h-2zM124 5h3v1h-3zM128 5h1v1h-1zM139 5h1v1h-1zM149 5h1v1h-1zM161 5h1v1h-1zM167 5h1v1h-1zM189 5h1v1h-1zM198 5h1v1h-1zM214 5h2v1h-2zM228 5h1v1h-1zM231 5h1v1h-1zM237 5h1v1h-1zM244 5h1v1h-1zM265 5h1v1h-1zM282 5h1v1h-1zM296 5h1v1h-1zM299 5h1v1h-1zM327 5h1v1h-1zM333 5h1v1h-1zM351 5h1v1h-1zM359 5h1v1h-1zM384 5h1v1h-1zM389 5h1v1h-1zM447 5h1v1h-1zM451 5h1v1h-1zM454 5h1v1h-1zM476 5h1v1h-1zM508 5h1v1h-1zM523 5h1v1h-1zM553 5h1v1h-1zM564 5h1v1h-1zM569 5h1v1h-1zM575 5h1v1h-1zM582 5h1v1h-1zM584 5h1v1h-1zM600 5h1v1h-1zM602 5h1v1h-1zM607 5h1v1h-1zM614 5h1v1h-1zM641 5h1v1h-1zM656 5h1v1h-1zM663 5h1v1h-1zM681 5h1v1h-1zM704 5h1v1h-1zM718 5h1v1h-1zM741 5h2v1h-2zM745 5h1v1h-1zM754 5h1v1h-1zM760 5h1v1h-1zM773 5h1v1h-1zM785 5h1v1h-1zM791 5h1v1h-1zM794 5h1v1h-1zM803 5h1v1h-1zM112 6h1v1h-1zM117 6h1v1h-1zM125 6h1v1h-1zM157 6h1v1h-1zM160 6h1v1h-1zM219 6h1v1h-1zM253 6h1v1h-1zM291 6h1v1h-1zM294 6h1v1h-1zM343 6h1v1h-1zM484 6h1v1h-1zM525 6h1v1h-1zM535 6h1v1h-1zM548 6h1v1h-1zM551 6h2v1h-2zM597 6h1v1h-1zM619 6h1v1h-1zM638 6h1v1h-1zM677 6h1v1h-1zM755 6h1v1h-1zM794 6h1v1h-1zM816 6h1v1h-1zM825 6h1v1h-1zM68 7h1v1h-1zM71 7h1v1h-1zM74 7h1v1h-1zM131 7h1v1h-1zM159 7h1v1h-1zM213 7h1v1h-1zM220 7h1v1h-1zM238 7h1v1h-1zM242 7h1v1h-1zM290 7h1v1h-1zM294 7h1v1h-1zM581 7h1v1h-1zM617 7h1v1h-1zM624 7h1v1h-1zM627 7h1v1h-1zM641 7h1v1h-1zM670 7h1v1h-1zM732 7h1v1h-1zM772 7h1v1h-1zM812 7h1v1h-1zM833 9h1v1h-1zM829 10h1v1h-1zM834 13h1v1h-1zM57 15h2v1h-2zM835 15h1v1h-1zM840 16h1v1h-1zM59 18h1v1h-1zM842 19h1v1h-1zM54 25h1v1h-1zM849 29h1v1h-1zM48 30h2v1h-2zM848 33h1v1h-1zM849 34h1v1h-1zM848 35h1v1h-1zM846 37h1v1h-1zM50 41h1v1h-1zM51 45h1v1h-1zM847 45h2v1h-2zM849 47h1v1h-1zM848 48h1v1h-1zM50 49h1v1h-1zM50 55h2v1h-2zM848 55h1v1h-1zM849 58h1v1h-1zM847 62h1v1h-1zM49 63h1v1h-1zM49 66h1v1h-1zM848 66h2v1h-2zM48 72h1v1h-1zM848 72h1v1h-1zM51 75h1v1h-1zM51 76h1v1h-1zM49 77h1v1h-1zM848 77h1v1h-1zM849 82h1v1h-1zM50 84h1v1h-1zM849 87h1v1h-1zM51 88h1v1h-1zM49 90h1v1h-1zM848 91h2v1h-2zM49 94h1v1h-1zM848 97h1v1h-1zM49 98h1v1h-1zM49 101h1v1h-1zM49 102h1v1h-1zM51 103h1v1h-1zM846 103h1v1h-1zM49 104h1v1h-1zM849 108h1v1h-1zM847 111h1v1h-1zM849 113h1v1h-1zM848 114h1v1h-1zM49 115h1v1h-1zM51 119h1v1h-1zM48 121h1v1h-1zM848 125h1v1h-1zM49 126h1v1h-1zM50 128h1v1h-1zM49 132h1v1h-1zM51 133h1v1h-1zM847 133h1v1h-1zM849 138h1v1h-1zM846 142h1v1h-1zM48 147h1v1h-1zM848 157h1v1h-1zM848 158h1v1h-1zM48 164h2v1h-2zM49 165h1v1h-1zM848 165h1v1h-1zM846 167h1v1h-1zM48 176h1v1h-1zM50 179h1v1h-1zM48 181h1v1h-1zM849 182h1v1h-1zM849 184h1v1h-1zM847 187h1v1h-1zM849 189h1v1h-1zM48 197h1v1h-1zM50 198h1v1h-1zM849 199h1v1h-1zM849 200h1v1h-1zM49 203h1v1h-1zM48 204h1v1h-1zM848 205h1v1h-1zM48 206h1v1h-1zM48 211h1v1h-1zM49 212h1v1h-1zM848 212h1v1h-1zM849 213h1v1h-1zM51 218h1v1h-1zM48 220h1v1h-1zM48 222h1v1h-1zM49 224h1v1h-1zM48 226h1v1h-1zM49 227h1v1h-1zM48 228h1v1h-1zM849 228h1v1h-1zM48 231h1v1h-1zM847 239h1v1h-1zM49 240h1v1h-1zM848 243h1v1h-1zM49 244h1v1h-1zM847 246h1v1h-1zM49 249h1v1h-1zM849 252h1v1h-1zM51 255h1v1h-1zM49 257h1v1h-1zM846 258h1v1h-1zM48 259h1v1h-1zM848 262h1v1h-1zM49 263h1v1h-1zM849 263h1v1h-1zM50 265h1v1h-1zM849 266h1v1h-1zM847 268h2v1h-2zM848 271h1v1h-1zM49 274h1v1h-1zM849 274h1v1h-1zM49 277h1v1h-1zM846 280h1v1h-1zM50 284h1v1h-1zM48 285h1v1h-1zM49 286h1v1h-1zM848 288h1v1h-1zM848 291h1v1h-1zM48 303h2v1h-2zM849 306h1v1h-1zM849 307h1v1h-1zM848 311h1v1h-1zM48 313h1v1h-1zM849 314h1v1h-1zM51 317h1v1h-1zM849 320h1v1h-1zM48 324h1v1h-1zM849 325h1v1h-1zM49 338h1v1h-1zM849 340h1v1h-1zM48 345h1v1h-1zM49 346h1v1h-1zM847 353h1v1h-1zM846 354h1v1h-1zM849 355h1v1h-1zM849 362h1v1h-1zM49 363h1v1h-1zM849 363h1v1h-1zM848 368h1v1h-1zM848 370h1v1h-1zM48 371h1v1h-1zM48 372h1v1h-1zM848 374h2v1h-2zM846 378h1v1h-1zM847 384h1v1h-1zM849 384h1v1h-1zM849 389h1v1h-1zM51 392h1v1h-1zM51 393h1v1h-1zM848 393h1v1h-1zM848 394h1v1h-1zM49 396h1v1h-1zM849 397h1v1h-1zM49 398h1v1h-1zM849 402h1v1h-1zM848 407h2v1h-2zM49 409h1v1h-1zM848 412h1v1h-1zM48 414h1v1h-1zM847 416h1v1h-1zM849 416h1v1h-1zM50 420h1v1h-1zM48 421h1v1h-1zM49 424h1v1h-1zM849 425h1v1h-1zM848 426h1v1h-1zM847 429h1v1h-1zM849 434h1v1h-1zM51 435h1v1h-1zM48 436h1v1h-1zM849 438h1v1h-1zM848 439h1v1h-1zM48 441h1v1h-1zM846 441h1v1h-1zM847 450h1v1h-1zM50 453h1v1h-1zM847 456h1v1h-1zM848 465h1v1h-1zM48 469h1v1h-1zM51 471h1v1h-1zM848 475h1v1h-1zM49 480h1v1h-1zM849 480h1v1h-1zM849 482h1v1h-1zM48 483h1v1h-1zM49 485h1v1h-1zM48 486h1v1h-1zM849 488h1v1h-1zM49 492h1v1h-1zM49 493h1v1h-1zM49 497h1v1h-1zM48 502h1v1h-1zM48 503h1v1h-1zM849 503h1v1h-1zM846 508h2v1h-2zM849 508h1v1h-1zM848 509h1v1h-1zM50 513h1v1h-1zM48 518h1v1h-1zM849 518h1v1h-1zM848 521h1v1h-1zM49 523h1v1h-1zM849 531h1v1h-1zM846 533h1v1h-1zM848 534h1v1h-1zM55 542h2v1h-2zM843 542h1v1h-1zM55 543h1v1h-1zM57 545h1v1h-1zM841 545h1v1h-1zM62 547h1v1h-1zM838 547h1v1h-1zM835 549h1v1h-1zM832 550h1v1h-1zM70 551h1v1h-1zM826 553h2v1h-2zM74 554h1v1h-1zM83 554h1v1h-1zM92 554h1v1h-1zM109 554h1v1h-1zM143 554h1v1h-1zM178 554h1v1h-1zM193 554h1v1h-1zM234 554h1v1h-1zM285 554h1v1h-1zM291 554h1v1h-1zM299 554h1v1h-1zM306 554h1v1h-1zM320 554h1v1h-1zM415 554h1v1h-1zM423 554h1v1h-1zM445 554h1v1h-1zM578 554h1v1h-1zM632 554h1v1h-1zM637 554h1v1h-1zM673 554h1v1h-1zM684 554h1v1h-1zM719 554h1v1h-1zM743 554h1v1h-1zM745 554h1v1h-1zM808 554h1v1h-1zM810 554h1v1h-1zM109 555h1v1h-1zM118 555h1v1h-1zM151 555h1v1h-1zM283 555h1v1h-1zM324 555h1v1h-1zM341 555h1v1h-1zM345 555h1v1h-1zM359 555h2v1h-2zM369 555h1v1h-1zM381 555h1v1h-1zM395 555h1v1h-1zM403 555h1v1h-1zM438 555h1v1h-1zM465 555h1v1h-1zM500 555h1v1h-1zM534 555h1v1h-1zM548 555h1v1h-1zM650 555h1v1h-1zM657 555h1v1h-1zM723 555h1v1h-1zM758 555h1v1h-1zM84 556h1v1h-1zM106 556h1v1h-1zM125 556h1v1h-1zM136 556h1v1h-1zM145 556h1v1h-1zM161 556h1v1h-1zM163 556h1v1h-1zM169 556h1v1h-1zM192 556h1v1h-1zM218 556h1v1h-1zM223 556h1v1h-1zM273 556h1v1h-1zM275 556h1v1h-1zM314 556h1v1h-1zM318 556h1v1h-1zM320 556h1v1h-1zM346 556h1v1h-1zM374 556h1v1h-1zM378 556h1v1h-1zM388 556h1v1h-1zM391 556h1v1h-1zM398 556h1v1h-1zM414 556h1v1h-1zM435 556h1v1h-1zM451 556h1v1h-1zM480 556h1v1h-1zM499 556h1v1h-1zM501 556h2v1h-2zM533 556h1v1h-1zM556 556h1v1h-1zM564 556h1v1h-1zM584 556h1v1h-1zM625 556h1v1h-1zM630 556h1v1h-1zM632 556h2v1h-2zM637 556h1v1h-1zM640 556h2v1h-2zM653 556h1v1h-1zM672 556h2v1h-2zM679 556h1v1h-1zM683 556h1v1h-1zM688 556h1v1h-1zM695 556h1v1h-1zM701 556h1v1h-1zM705 556h1v1h-1zM709 556h2v1h-2zM712 556h1v1h-1zM734 556h1v1h-1zM750 556h1v1h-1zM765 556h1v1h-1zM772 556h1v1h-1zM781 556h1v1h-1zM793 556h1v1h-1zM796 556h1v1h-1zM799 556h1v1h-1zM802 556h1v1h-1zM809 556h1v1h-1zM819 556h1v1h-1zM87 557h1v1h-1zM100 557h1v1h-1zM148 557h1v1h-1zM154 557h1v1h-1zM198 557h3v1h-3zM202 557h2v1h-2zM207 557h1v1h-1zM211 557h1v1h-1zM224 557h2v1h-2zM231 557h1v1h-1zM238 557h1v1h-1zM246 557h2v1h-2zM254 557h1v1h-1zM274 557h1v1h-1zM277 557h1v1h-1zM281 557h1v1h-1zM302 557h1v1h-1zM304 557h1v1h-1zM308 557h1v1h-1zM319 557h1v1h-1zM323 557h1v1h-1zM327 557h1v1h-1zM345 557h1v1h-1zM379 557h1v1h-1zM392 557h1v1h-1zM394 557h1v1h-1zM397 557h2v1h-2zM400 557h1v1h-1zM409 557h1v1h-1zM436 557h1v1h-1zM483 557h1v1h-1zM488 557h1v1h-1zM498 557h1v1h-1zM520 557h1v1h-1zM523 557h1v1h-1zM528 557h1v1h-1zM533 557h1v1h-1zM540 557h1v1h-1zM550 557h1v1h-1zM555 557h1v1h-1zM612 557h1v1h-1zM632 557h2v1h-2zM639 557h1v1h-1zM661 557h1v1h-1zM668 557h1v1h-1zM710 557h1v1h-1zM715 557h1v1h-1zM719 557h2v1h-2zM735 557h1v1h-1zM737 557h1v1h-1zM741 557h1v1h-1zM752 557h1v1h-1zM756 557h1v1h-1zM760 557h1v1h-1zM786 557h1v1h-1zM790 557h1v1h-1z"/><path fill="#e8ecff" d="M79 3h1v1h-1zM82 3h1v1h-1zM84 3h1v1h-1zM86 3h2v1h-2zM97 3h1v1h-1zM109 3h2v1h-2zM132 3h1v1h-1zM146 3h1v1h-1zM154 3h1v1h-1zM158 3h1v1h-1zM164 3h1v1h-1zM182 3h1v1h-1zM191 3h1v1h-1zM200 3h2v1h-2zM205 3h2v1h-2zM210 3h1v1h-1zM222 3h1v1h-1zM228 3h1v1h-1zM233 3h1v1h-1zM255 3h2v1h-2zM276 3h1v1h-1zM303 3h1v1h-1zM329 3h1v1h-1zM332 3h1v1h-1zM370 3h1v1h-1zM372 3h1v1h-1zM395 3h1v1h-1zM398 3h1v1h-1zM402 3h1v1h-1zM408 3h1v1h-1zM420 3h2v1h-2zM424 3h1v1h-1zM428 3h1v1h-1zM430 3h1v1h-1zM442 3h1v1h-1zM451 3h1v1h-1zM453 3h1v1h-1zM474 3h1v1h-1zM476 3h1v1h-1zM480 3h1v1h-1zM498 3h1v1h-1zM504 3h1v1h-1zM506 3h1v1h-1zM508 3h2v1h-2zM524 3h1v1h-1zM541 3h1v1h-1zM551 3h1v1h-1zM557 3h1v1h-1zM560 3h1v1h-1zM573 3h1v1h-1zM579 3h2v1h-2zM594 3h1v1h-1zM615 3h2v1h-2zM624 3h1v1h-1zM639 3h1v1h-1zM657 3h1v1h-1zM663 3h1v1h-1zM687 3h1v1h-1zM689 3h1v1h-1zM700 3h1v1h-1zM715 3h2v1h-2zM721 3h1v1h-1zM738 3h1v1h-1zM749 3h1v1h-1zM755 3h1v1h-1zM767 3h1v1h-1zM775 3h1v1h-1zM803 3h2v1h-2zM815 3h1v1h-1zM821 3h1v1h-1zM83 4h1v1h-1zM115 4h1v1h-1zM121 4h1v1h-1zM139 4h1v1h-1zM147 4h1v1h-1zM160 4h1v1h-1zM168 4h1v1h-1zM172 4h1v1h-1zM178 4h1v1h-1zM213 4h1v1h-1zM217 4h1v1h-1zM227 4h1v1h-1zM242 4h1v1h-1zM245 4h1v1h-1zM251 4h1v1h-1zM254 4h1v1h-1zM257 4h1v1h-1zM264 4h1v1h-1zM280 4h1v1h-1zM287 4h1v1h-1zM293 4h1v1h-1zM304 4h1v1h-1zM308 4h1v1h-1zM310 4h1v1h-1zM316 4h1v1h-1zM322 4h1v1h-1zM324 4h1v1h-1zM334 4h1v1h-1zM348 4h1v1h-1zM352 4h1v1h-1zM363 4h1v1h-1zM367 4h1v1h-1zM377 4h1v1h-1zM396 4h1v1h-1zM411 4h1v1h-1zM424 4h1v1h-1zM433 4h1v1h-1zM439 4h1v1h-1zM444 4h1v1h-1zM457 4h1v1h-1zM459 4h1v1h-1zM470 4h1v1h-1zM473 4h1v1h-1zM494 4h1v1h-1zM500 4h1v1h-1zM551 4h1v1h-1zM560 4h1v1h-1zM571 4h2v1h-2zM575 4h1v1h-1zM583 4h1v1h-1zM601 4h1v1h-1zM605 4h2v1h-2zM619 4h1v1h-1zM621 4h1v1h-1zM632 4h1v1h-1zM655 4h1v1h-1zM657 4h1v1h-1zM664 4h1v1h-1zM675 4h1v1h-1zM685 4h1v1h-1zM694 4h1v1h-1zM697 4h1v1h-1zM701 4h1v1h-1zM703 4h2v1h-2zM706 4h1v1h-1zM709 4h1v1h-1zM731 4h1v1h-1zM740 4h2v1h-2zM748 4h1v1h-1zM750 4h1v1h-1zM765 4h1v1h-1zM802 4h1v1h-1zM806 4h1v1h-1zM810 4h1v1h-1zM812 4h1v1h-1zM814 4h3v1h-3zM70 5h1v1h-1zM73 5h1v1h-1zM79 5h2v1h-2zM88 5h2v1h-2zM94 5h1v1h-1zM99 5h1v1h-1zM101 5h1v1h-1zM114 5h1v1h-1zM132 5h1v1h-1zM143 5h1v1h-1zM152 5h1v1h-1zM156 5h1v1h-1zM164 5h1v1h-1zM191 5h1v1h-1zM205 5h1v1h-1zM208 5h1v1h-1zM221 5h1v1h-1zM251 5h1v1h-1zM259 5h1v1h-1zM267 5h1v1h-1zM272 5h1v1h-1zM277 5h1v1h-1zM280 5h2v1h-2zM288 5h1v1h-1zM290 5h1v1h-1zM301 5h1v1h-1zM306 5h2v1h-2zM321 5h1v1h-1zM323 5h1v1h-1zM332 5h1v1h-1zM365 5h1v1h-1zM385 5h1v1h-1zM388 5h1v1h-1zM394 5h1v1h-1zM404 5h1v1h-1zM413 5h1v1h-1zM434 5h1v1h-1zM439 5h1v1h-1zM448 5h1v1h-1zM465 5h1v1h-1zM468 5h1v1h-1zM478 5h1v1h-1zM480 5h1v1h-1zM492 5h4v1h-4zM509 5h2v1h-2zM517 5h2v1h-2zM526 5h1v1h-1zM534 5h1v1h-1zM548 5h1v1h-1zM555 5h1v1h-1zM558 5h1v1h-1zM573 5h1v1h-1zM577 5h1v1h-1zM586 5h1v1h-1zM588 5h2v1h-2zM598 5h1v1h-1zM601 5h1v1h-1zM605 5h2v1h-2zM608 5h1v1h-1zM612 5h1v1h-1zM619 5h2v1h-2zM644 5h1v1h-1zM648 5h1v1h-1zM657 5h1v1h-1zM659 5h1v1h-1zM665 5h2v1h-2zM670 5h1v1h-1zM675 5h1v1h-1zM680 5h1v1h-1zM693 5h2v1h-2zM697 5h1v1h-1zM699 5h2v1h-2zM708 5h1v1h-1zM712 5h2v1h-2zM716 5h1v1h-1zM721 5h1v1h-1zM727 5h1v1h-1zM737 5h2v1h-2zM757 5h2v1h-2zM761 5h1v1h-1zM763 5h1v1h-1zM771 5h1v1h-1zM805 5h1v1h-1zM813 5h1v1h-1zM821 5h1v1h-1zM823 5h1v1h-1zM826 5h1v1h-1zM96 6h1v1h-1zM107 6h1v1h-1zM123 6h1v1h-1zM129 6h1v1h-1zM136 6h1v1h-1zM173 6h1v1h-1zM189 6h1v1h-1zM209 6h1v1h-1zM229 6h1v1h-1zM244 6h1v1h-1zM248 6h1v1h-1zM282 6h1v1h-1zM310 6h1v1h-1zM327 6h1v1h-1zM337 6h1v1h-1zM355 6h1v1h-1zM360 6h1v1h-1zM418 6h1v1h-1zM457 6h1v1h-1zM504 6h2v1h-2zM507 6h1v1h-1zM520 6h1v1h-1zM570 6h1v1h-1zM574 6h1v1h-1zM642 6h1v1h-1zM693 6h1v1h-1zM699 6h1v1h-1zM706 6h1v1h-1zM709 6h1v1h-1zM727 6h1v1h-1zM775 6h1v1h-1zM777 6h1v1h-1zM824 6h1v1h-1zM72 7h1v1h-1zM75 7h1v1h-1zM130 7h1v1h-1zM146 7h1v1h-1zM211 7h2v1h-2zM243 7h1v1h-1zM245 7h1v1h-1zM267 7h1v1h-1zM287 7h1v1h-1zM317 7h1v1h-1zM329 7h1v1h-1zM347 7h1v1h-1zM400 7h1v1h-1zM404 7h1v1h-1zM470 7h1v1h-1zM514 7h1v1h-1zM516 7h1v1h-1zM526 7h1v1h-1zM592 7h1v1h-1zM594 7h1v1h-1zM605 7h1v1h-1zM619 7h1v1h-1zM630 7h1v1h-1zM634 7h1v1h-1zM648 7h1v1h-1zM652 7h1v1h-1zM661 7h1v1h-1zM699 7h1v1h-1zM717 7h1v1h-1zM721 7h1v1h-1zM736 7h1v1h-1zM784 7h1v1h-1zM792 7h1v1h-1zM807 7h1v1h-1zM823 7h1v1h-1zM827 7h1v1h-1zM65 8h1v1h-1zM827 8h2v1h-2zM828 9h1v1h-1zM836 9h1v1h-1zM63 10h1v1h-1zM833 10h1v1h-1zM60 11h1v1h-1zM836 11h1v1h-1zM837 12h1v1h-1zM57 13h1v1h-1zM838 13h1v1h-1zM840 13h1v1h-1zM836 14h1v1h-1zM838 15h1v1h-1zM839 17h1v1h-1zM842 17h1v1h-1zM51 18h1v1h-1zM842 18h1v1h-1zM53 19h1v1h-1zM50 20h1v1h-1zM54 20h1v1h-1zM844 21h1v1h-1zM49 22h1v1h-1zM843 22h1v1h-1zM847 22h1v1h-1zM54 24h1v1h-1zM849 24h1v1h-1zM49 26h2v1h-2zM850 26h1v1h-1zM47 27h1v1h-1zM850 28h1v1h-1zM845 30h1v1h-1zM847 31h1v1h-1zM849 32h1v1h-1zM849 35h1v1h-1zM48 38h2v1h-2zM848 38h1v1h-1zM47 39h1v1h-1zM49 40h1v1h-1zM849 40h1v1h-1zM848 41h1v1h-1zM51 43h1v1h-1zM49 44h1v1h-1zM47 45h1v1h-1zM850 46h1v1h-1zM846 47h1v1h-1zM848 47h1v1h-1zM47 53h3v1h-3zM849 55h1v1h-1zM848 56h2v1h-2zM48 57h1v1h-1zM848 58h1v1h-1zM48 64h1v1h-1zM848 64h1v1h-1zM47 65h1v1h-1zM848 65h1v1h-1zM850 67h1v1h-1zM848 68h1v1h-1zM49 69h1v1h-1zM47 70h1v1h-1zM50 71h1v1h-1zM849 72h1v1h-1zM849 73h1v1h-1zM846 74h1v1h-1zM848 74h1v1h-1zM49 75h1v1h-1zM850 75h1v1h-1zM51 78h1v1h-1zM48 81h2v1h-2zM49 82h1v1h-1zM846 82h1v1h-1zM850 82h1v1h-1zM849 83h1v1h-1zM47 84h2v1h-2zM48 85h1v1h-1zM48 87h1v1h-1zM848 90h1v1h-1zM48 91h1v1h-1zM47 92h2v1h-2zM48 95h1v1h-1zM49 97h1v1h-1zM48 99h1v1h-1zM848 102h1v1h-1zM48 104h1v1h-1zM847 105h1v1h-1zM846 106h1v1h-1zM48 107h1v1h-1zM49 108h1v1h-1zM850 108h1v1h-1zM850 109h1v1h-1zM47 112h1v1h-1zM848 112h1v1h-1zM49 114h1v1h-1zM847 115h1v1h-1zM848 116h1v1h-1zM47 117h1v1h-1zM848 118h1v1h-1zM48 119h1v1h-1zM848 119h1v1h-1zM48 120h1v1h-1zM47 122h1v1h-1zM47 124h2v1h-2zM51 127h1v1h-1zM47 128h1v1h-1zM48 129h1v1h-1zM848 129h2v1h-2zM47 130h1v1h-1zM48 131h1v1h-1zM849 131h2v1h-2zM848 134h1v1h-1zM48 135h2v1h-2zM848 138h1v1h-1zM48 139h1v1h-1zM848 139h2v1h-2zM48 140h1v1h-1zM846 144h1v1h-1zM847 145h1v1h-1zM848 148h1v1h-1zM49 149h1v1h-1zM849 149h1v1h-1zM850 152h1v1h-1zM848 153h1v1h-1zM49 154h1v1h-1zM850 154h1v1h-1zM48 159h1v1h-1zM48 160h1v1h-1zM848 160h1v1h-1zM49 161h1v1h-1zM850 162h1v1h-1zM48 165h1v1h-1zM848 166h1v1h-1zM49 169h1v1h-1zM849 171h1v1h-1zM848 172h1v1h-1zM48 173h1v1h-1zM48 174h1v1h-1zM50 175h1v1h-1zM48 178h1v1h-1zM849 179h1v1h-1zM48 180h2v1h-2zM49 182h1v1h-1zM848 184h1v1h-1zM848 185h1v1h-1zM48 188h1v1h-1zM51 188h1v1h-1zM47 189h1v1h-1zM848 189h1v1h-1zM848 190h1v1h-1zM49 191h1v1h-1zM849 191h1v1h-1zM49 194h1v1h-1zM48 195h1v1h-1zM849 195h1v1h-1zM49 196h1v1h-1zM47 197h1v1h-1zM850 197h1v1h-1zM850 198h1v1h-1zM51 199h1v1h-1zM850 199h1v1h-1zM848 202h1v1h-1zM850 203h1v1h-1zM850 204h1v1h-1zM49 207h1v1h-1zM848 207h1v1h-1zM47 212h2v1h-2zM47 215h1v1h-1zM47 216h1v1h-1zM49 216h1v1h-1zM848 216h1v1h-1zM48 219h1v1h-1zM848 219h1v1h-1zM49 221h1v1h-1zM47 222h1v1h-1zM848 223h1v1h-1zM48 224h1v1h-1zM847 227h1v1h-1zM47 228h1v1h-1zM850 228h1v1h-1zM848 231h1v1h-1zM49 232h2v1h-2zM850 234h1v1h-1zM49 236h1v1h-1zM47 237h1v1h-1zM49 237h1v1h-1zM48 238h1v1h-1zM848 238h1v1h-1zM848 239h1v1h-1zM47 240h1v1h-1zM49 242h1v1h-1zM849 243h1v1h-1zM50 246h1v1h-1zM848 247h1v1h-1zM849 248h1v1h-1zM849 250h1v1h-1zM48 252h1v1h-1zM848 252h1v1h-1zM850 252h1v1h-1zM47 253h1v1h-1zM50 254h1v1h-1zM51 256h1v1h-1zM848 256h1v1h-1zM47 257h2v1h-2zM48 258h1v1h-1zM847 259h1v1h-1zM48 260h2v1h-2zM847 260h1v1h-1zM49 261h1v1h-1zM847 262h1v1h-1zM850 262h1v1h-1zM847 263h1v1h-1zM49 265h1v1h-1zM47 266h2v1h-2zM47 268h1v1h-1zM49 268h2v1h-2zM47 269h1v1h-1zM50 269h1v1h-1zM848 269h1v1h-1zM48 273h1v1h-1zM849 273h1v1h-1zM50 276h1v1h-1zM846 276h1v1h-1zM848 277h1v1h-1zM49 279h1v1h-1zM849 280h1v1h-1zM49 281h2v1h-2zM849 281h1v1h-1zM51 284h1v1h-1zM846 286h3v1h-3zM849 287h1v1h-1zM48 288h1v1h-1zM847 288h1v1h-1zM48 289h2v1h-2zM51 289h1v1h-1zM846 289h1v1h-1zM848 289h1v1h-1zM47 290h1v1h-1zM849 290h1v1h-1zM850 294h1v1h-1zM847 295h1v1h-1zM48 296h1v1h-1zM849 296h1v1h-1zM848 298h1v1h-1zM49 299h1v1h-1zM849 300h1v1h-1zM49 306h1v1h-1zM48 307h1v1h-1zM847 309h1v1h-1zM47 311h1v1h-1zM51 313h1v1h-1zM51 314h1v1h-1zM847 315h2v1h-2zM847 317h3v1h-3zM846 318h1v1h-1zM848 318h1v1h-1zM48 319h1v1h-1zM848 327h1v1h-1zM850 327h1v1h-1zM848 329h1v1h-1zM848 330h1v1h-1zM846 331h1v1h-1zM850 331h1v1h-1zM47 332h1v1h-1zM49 333h1v1h-1zM847 333h1v1h-1zM47 335h1v1h-1zM849 335h1v1h-1zM49 337h1v1h-1zM850 337h1v1h-1zM48 340h2v1h-2zM51 340h1v1h-1zM850 340h1v1h-1zM47 341h1v1h-1zM850 342h1v1h-1zM47 343h1v1h-1zM850 344h1v1h-1zM849 346h1v1h-1zM47 349h1v1h-1zM848 349h1v1h-1zM50 350h1v1h-1zM849 350h1v1h-1zM49 356h1v1h-1zM51 356h1v1h-1zM849 356h1v1h-1zM850 358h1v1h-1zM49 359h1v1h-1zM47 361h1v1h-1zM49 361h1v1h-1zM51 362h1v1h-1zM50 363h1v1h-1zM49 364h1v1h-1zM48 365h1v1h-1zM848 365h1v1h-1zM47 366h1v1h-1zM848 366h1v1h-1zM47 367h1v1h-1zM846 367h1v1h-1zM47 368h1v1h-1zM49 369h1v1h-1zM49 372h1v1h-1zM51 372h1v1h-1zM49 373h1v1h-1zM849 375h1v1h-1zM47 377h2v1h-2zM847 377h1v1h-1zM47 381h1v1h-1zM49 382h2v1h-2zM848 385h1v1h-1zM48 387h1v1h-1zM849 388h1v1h-1zM50 389h1v1h-1zM848 389h1v1h-1zM49 390h1v1h-1zM47 395h1v1h-1zM849 395h1v1h-1zM848 396h1v1h-1zM50 397h1v1h-1zM846 397h1v1h-1zM847 398h1v1h-1zM50 400h1v1h-1zM51 403h1v1h-1zM850 403h1v1h-1zM48 404h1v1h-1zM51 405h1v1h-1zM49 406h1v1h-1zM47 407h1v1h-1zM849 410h1v1h-1zM849 411h2v1h-2zM847 414h1v1h-1zM49 415h1v1h-1zM848 417h1v1h-1zM47 421h1v1h-1zM51 423h1v1h-1zM48 424h1v1h-1zM848 424h1v1h-1zM48 425h1v1h-1zM850 425h1v1h-1zM50 427h1v1h-1zM49 428h1v1h-1zM48 429h1v1h-1zM850 430h1v1h-1zM849 431h2v1h-2zM849 432h1v1h-1zM48 433h3v1h-3zM850 435h1v1h-1zM850 437h1v1h-1zM846 438h1v1h-1zM848 440h1v1h-1zM850 440h1v1h-1zM51 441h1v1h-1zM850 441h1v1h-1zM47 444h1v1h-1zM849 447h1v1h-1zM849 449h1v1h-1zM48 452h1v1h-1zM847 452h1v1h-1zM850 453h1v1h-1zM850 454h1v1h-1zM49 456h1v1h-1zM850 457h1v1h-1zM47 458h1v1h-1zM849 459h1v1h-1zM848 463h1v1h-1zM49 464h1v1h-1zM48 465h1v1h-1zM849 465h1v1h-1zM47 466h1v1h-1zM49 466h1v1h-1zM849 466h1v1h-1zM849 469h1v1h-1zM47 470h1v1h-1zM850 472h1v1h-1zM849 474h1v1h-1zM48 475h1v1h-1zM848 476h1v1h-1zM47 477h2v1h-2zM848 478h2v1h-2zM848 479h1v1h-1zM48 481h1v1h-1zM847 481h1v1h-1zM51 482h1v1h-1zM49 483h1v1h-1zM49 484h1v1h-1zM848 491h1v1h-1zM849 492h1v1h-1zM51 493h1v1h-1zM847 493h1v1h-1zM849 494h1v1h-1zM51 495h1v1h-1zM849 497h1v1h-1zM848 498h1v1h-1zM48 499h1v1h-1zM48 500h1v1h-1zM51 501h1v1h-1zM47 503h1v1h-1zM846 503h1v1h-1zM48 505h1v1h-1zM849 505h2v1h-2zM47 506h2v1h-2zM47 507h1v1h-1zM847 510h1v1h-1zM49 511h1v1h-1zM846 512h1v1h-1zM849 513h1v1h-1zM49 514h1v1h-1zM848 515h1v1h-1zM49 516h1v1h-1zM849 516h2v1h-2zM49 517h1v1h-1zM47 518h1v1h-1zM848 519h1v1h-1zM48 522h1v1h-1zM50 523h1v1h-1zM48 524h1v1h-1zM48 525h1v1h-1zM47 526h1v1h-1zM848 527h1v1h-1zM47 530h1v1h-1zM849 530h1v1h-1zM49 531h1v1h-1zM848 531h1v1h-1zM844 533h1v1h-1zM50 534h1v1h-1zM54 536h1v1h-1zM848 537h1v1h-1zM52 538h1v1h-1zM50 539h1v1h-1zM53 539h1v1h-1zM847 539h1v1h-1zM52 540h1v1h-1zM54 540h1v1h-1zM846 541h1v1h-1zM54 543h1v1h-1zM56 544h1v1h-1zM58 545h1v1h-1zM844 545h1v1h-1zM58 547h1v1h-1zM60 547h1v1h-1zM57 548h1v1h-1zM62 550h1v1h-1zM66 550h1v1h-1zM74 552h1v1h-1zM824 552h1v1h-1zM68 553h1v1h-1zM829 553h1v1h-1zM67 554h1v1h-1zM72 554h1v1h-1zM113 554h1v1h-1zM119 554h1v1h-1zM128 554h1v1h-1zM154 554h1v1h-1zM164 554h1v1h-1zM198 554h1v1h-1zM202 554h1v1h-1zM221 554h1v1h-1zM241 554h1v1h-1zM249 554h1v1h-1zM280 554h1v1h-1zM309 554h1v1h-1zM312 554h1v1h-1zM325 554h1v1h-1zM375 554h1v1h-1zM411 554h1v1h-1zM413 554h1v1h-1zM434 554h1v1h-1zM506 554h1v1h-1zM629 554h1v1h-1zM659 554h1v1h-1zM663 554h1v1h-1zM674 554h1v1h-1zM680 554h1v1h-1zM682 554h1v1h-1zM701 554h1v1h-1zM735 554h1v1h-1zM771 554h1v1h-1zM780 554h1v1h-1zM792 554h1v1h-1zM804 554h1v1h-1zM807 554h1v1h-1zM809 554h1v1h-1zM828 554h1v1h-1zM155 555h1v1h-1zM159 555h1v1h-1zM169 555h1v1h-1zM185 555h1v1h-1zM242 555h1v1h-1zM249 555h1v1h-1zM263 555h1v1h-1zM306 555h1v1h-1zM352 555h1v1h-1zM365 555h1v1h-1zM367 555h1v1h-1zM391 555h1v1h-1zM399 555h1v1h-1zM427 555h1v1h-1zM431 555h1v1h-1zM482 555h1v1h-1zM498 555h1v1h-1zM558 555h1v1h-1zM595 555h1v1h-1zM636 555h1v1h-1zM695 555h1v1h-1zM710 555h1v1h-1zM720 555h1v1h-1zM759 555h1v1h-1zM785 555h1v1h-1zM812 555h1v1h-1zM820 555h1v1h-1zM822 555h1v1h-1zM85 556h1v1h-1zM87 556h1v1h-1zM92 556h1v1h-1zM96 556h1v1h-1zM128 556h1v1h-1zM131 556h1v1h-1zM134 556h1v1h-1zM141 556h2v1h-2zM148 556h1v1h-1zM154 556h1v1h-1zM156 556h1v1h-1zM158 556h2v1h-2zM162 556h1v1h-1zM175 556h1v1h-1zM183 556h1v1h-1zM205 556h2v1h-2zM214 556h1v1h-1zM217 556h1v1h-1zM222 556h1v1h-1zM225 556h1v1h-1zM231 556h1v1h-1zM233 556h1v1h-1zM243 556h1v1h-1zM247 556h1v1h-1zM252 556h1v1h-1zM257 556h1v1h-1zM260 556h1v1h-1zM263 556h1v1h-1zM270 556h1v1h-1zM280 556h1v1h-1zM285 556h2v1h-2zM292 556h1v1h-1zM297 556h2v1h-2zM301 556h1v1h-1zM305 556h1v1h-1zM309 556h1v1h-1zM313 556h1v1h-1zM345 556h1v1h-1zM350 556h1v1h-1zM356 556h2v1h-2zM360 556h1v1h-1zM362 556h1v1h-1zM396 556h1v1h-1zM404 556h1v1h-1zM406 556h1v1h-1zM411 556h1v1h-1zM413 556h1v1h-1zM417 556h1v1h-1zM426 556h1v1h-1zM432 556h1v1h-1zM438 556h1v1h-1zM440 556h1v1h-1zM445 556h1v1h-1zM454 556h1v1h-1zM456 556h1v1h-1zM461 556h1v1h-1zM478 556h1v1h-1zM481 556h1v1h-1zM487 556h1v1h-1zM491 556h1v1h-1zM509 556h1v1h-1zM512 556h1v1h-1zM538 556h1v1h-1zM549 556h1v1h-1zM560 556h1v1h-1zM567 556h1v1h-1zM569 556h1v1h-1zM572 556h1v1h-1zM594 556h1v1h-1zM602 556h1v1h-1zM608 556h1v1h-1zM618 556h1v1h-1zM646 556h1v1h-1zM649 556h1v1h-1zM652 556h1v1h-1zM667 556h2v1h-2zM670 556h1v1h-1zM678 556h1v1h-1zM700 556h1v1h-1zM704 556h1v1h-1zM708 556h1v1h-1zM715 556h1v1h-1zM739 556h1v1h-1zM743 556h1v1h-1zM748 556h1v1h-1zM755 556h1v1h-1zM760 556h1v1h-1zM771 556h1v1h-1zM775 556h1v1h-1zM794 556h2v1h-2zM803 556h1v1h-1zM818 556h1v1h-1zM74 557h1v1h-1zM83 557h2v1h-2zM86 557h1v1h-1zM90 557h1v1h-1zM96 557h1v1h-1zM105 557h1v1h-1zM108 557h2v1h-2zM113 557h1v1h-1zM117 557h1v1h-1zM119 557h1v1h-1zM123 557h1v1h-1zM129 557h1v1h-1zM140 557h1v1h-1zM147 557h1v1h-1zM149 557h1v1h-1zM151 557h1v1h-1zM163 557h1v1h-1zM167 557h1v1h-1zM178 557h1v1h-1zM206 557h1v1h-1zM227 557h1v1h-1zM272 557h1v1h-1zM276 557h1v1h-1zM280 557h1v1h-1zM294 557h2v1h-2zM297 557h1v1h-1zM299 557h1v1h-1zM307 557h1v1h-1zM330 557h1v1h-1zM350 557h1v1h-1zM362 557h2v1h-2zM371 557h1v1h-1zM374 557h1v1h-1zM376 557h1v1h-1zM380 557h1v1h-1zM382 557h1v1h-1zM389 557h1v1h-1zM403 557h1v1h-1zM412 557h1v1h-1zM422 557h1v1h-1zM425 557h1v1h-1zM434 557h1v1h-1zM441 557h1v1h-1zM451 557h2v1h-2zM457 557h1v1h-1zM459 557h1v1h-1zM462 557h1v1h-1zM469 557h1v1h-1zM477 557h1v1h-1zM500 557h1v1h-1zM510 557h1v1h-1zM515 557h1v1h-1zM517 557h1v1h-1zM526 557h1v1h-1zM546 557h1v1h-1zM549 557h1v1h-1zM551 557h1v1h-1zM566 557h1v1h-1zM576 557h1v1h-1zM586 557h1v1h-1zM608 557h1v1h-1zM611 557h1v1h-1zM613 557h1v1h-1zM615 557h1v1h-1zM618 557h1v1h-1zM647 557h2v1h-2zM656 557h1v1h-1zM667 557h1v1h-1zM670 557h1v1h-1zM677 557h1v1h-1zM686 557h1v1h-1zM692 557h1v1h-1zM694 557h1v1h-1zM696 557h1v1h-1zM713 557h1v1h-1zM722 557h1v1h-1zM733 557h1v1h-1zM746 557h1v1h-1zM751 557h1v1h-1zM759 557h1v1h-1zM763 557h1v1h-1zM769 557h1v1h-1zM773 557h1v1h-1zM784 557h1v1h-1zM792 557h1v1h-1zM799 557h1v1h-1zM802 557h1v1h-1zM806 557h1v1h-1zM811 557h1v1h-1zM818 557h1v1h-1zM78 558h1v1h-1zM90 558h1v1h-1zM92 558h1v1h-1zM104 558h1v1h-1zM107 558h1v1h-1zM118 558h2v1h-2zM139 558h1v1h-1zM146 558h1v1h-1zM154 558h1v1h-1zM174 558h1v1h-1zM179 558h1v1h-1zM186 558h1v1h-1zM214 558h1v1h-1zM218 558h1v1h-1zM229 558h1v1h-1zM234 558h1v1h-1zM240 558h1v1h-1zM242 558h2v1h-2zM245 558h1v1h-1zM248 558h1v1h-1zM256 558h1v1h-1zM259 558h1v1h-1zM266 558h1v1h-1zM275 558h1v1h-1zM290 558h1v1h-1zM293 558h1v1h-1zM300 558h1v1h-1zM303 558h1v1h-1zM305 558h2v1h-2zM317 558h1v1h-1zM344 558h1v1h-1zM348 558h1v1h-1zM361 558h1v1h-1zM369 558h1v1h-1zM396 558h1v1h-1zM399 558h1v1h-1zM404 558h1v1h-1zM413 558h1v1h-1zM422 558h1v1h-1zM436 558h1v1h-1zM444 558h2v1h-2zM452 558h1v1h-1zM455 558h2v1h-2zM458 558h1v1h-1zM461 558h1v1h-1zM464 558h2v1h-2zM491 558h1v1h-1zM512 558h1v1h-1zM519 558h1v1h-1zM534 558h1v1h-1zM568 558h1v1h-1zM573 558h1v1h-1zM578 558h1v1h-1zM605 558h1v1h-1zM610 558h1v1h-1zM619 558h1v1h-1zM625 558h1v1h-1zM630 558h1v1h-1zM643 558h1v1h-1zM646 558h1v1h-1zM649 558h1v1h-1zM655 558h1v1h-1zM661 558h1v1h-1zM666 558h1v1h-1zM668 558h1v1h-1zM694 558h1v1h-1zM707 558h1v1h-1zM717 558h1v1h-1zM738 558h1v1h-1zM743 558h1v1h-1zM762 558h1v1h-1zM769 558h2v1h-2zM782 558h1v1h-1zM784 558h1v1h-1zM787 558h1v1h-1zM812 558h1v1h-1z"/></svg>
<div class="a" id="card"></div>

<!-- header -->
<div class="a wb" style="left:81px;top:39px;width:21px;height:22px;border-radius:4px;box-shadow:0 1px 3px rgba(40,50,80,.18)"></div>

<div class="t" style="left:114px;top:43px;font-size:7.3px;color:#7685a8">Опросы VoC / Тестовые</div>
<div class="t" style="left:114px;top:53px;font-size:13.8px;font-weight:700;color:#1a1f2c;letter-spacing:-0.29px">Мой тестовый опрос</div>
<svg class="a" style="left:257px;top:54px" width="10" height="10" viewBox="0 0 10 10"><path d="M1.5 8.5 L2 6.5 L6.8 1.7 L8.3 3.2 L3.5 8 Z" fill="none" stroke="#5a6a90" stroke-width="1.1" stroke-linejoin="round"/></svg>

<div class="a ib" style="left:671px;top:39px;width:21px;height:21px"></div>
<svg class="a" style="left:677px;top:45.5px" width="9" height="9" viewBox="0 0 9 9"><circle cx="4.5" cy="4.5" r="3.7" fill="none" stroke="#4a5b85" stroke-width="1.1"/><rect x="4" y="3.8" width="1" height="2.8" fill="#4a5b85"/><rect x="4" y="2.2" width="1" height="1" fill="#4a5b85"/></svg>
<div class="a ib" style="left:698px;top:39px;width:21px;height:21px"></div>
<svg class="a" style="left:703px;top:44px" width="11" height="11" viewBox="0 0 11 11"><path d="M2 6.5 V9 H9 V6.5" fill="none" stroke="#4a5b85" stroke-width="1.2" stroke-linecap="round" stroke-linejoin="round"/><path d="M5.5 7 V1.8 M3.5 3.6 L5.5 1.6 L7.5 3.6" fill="none" stroke="#4a5b85" stroke-width="1.2" stroke-linecap="round" stroke-linejoin="round"/></svg>
<div class="a" style="left:728px;top:44px;width:22px;height:12px;border-radius:6px;background:#f67777"></div>
<div class="a" style="left:729.5px;top:45.5px;width:9px;height:9px;border-radius:50%;background:#fff"></div>
<div class="t" style="left:756.5px;top:45.7px;font-size:8.5px;color:#2a3040">Неактивный</div>

<!-- tabs -->
<div class="a wb" style="left:81px;top:76px;width:735px;height:28px;border-radius:4px"></div>
<div class="t" style="left:93px;top:85px;font-size:9.6px;color:#1f2a40;-webkit-text-stroke:0.25px #1f2a40">Вопросы</div>
<div class="a" style="left:92.5px;top:102px;width:40px;height:2px;background:#2f55e4;border-radius:1px"></div>
<div class="t" style="left:150.4px;top:85px;font-size:9.66px;color:#4d5d86">Настройки</div>
<div class="t" style="left:216px;top:85px;font-size:9.6px;color:#4d5d86">Дизайн</div>
<div class="t" style="left:266.7px;top:85px;font-size:9.51px;color:#4d5d86">Сбор ответов</div>
<div class="t" style="left:344px;top:85px;font-size:9.87px;color:#4d5d86">Результаты</div>

<!-- left panel -->
<div class="a" style="left:81px;top:114px;width:78px;height:17px;background:#c6eecd;border-radius:3px"></div>
<div class="t" style="left:102px;top:119.5px;font-size:6.65px;font-weight:700;color:#2a8c40">Новый вопрос</div>
<div class="a ib" style="left:164px;top:114px;width:17.5px;height:17px"></div>
<div class="a ib" style="left:186.5px;top:114px;width:17.5px;height:17px"></div>
<div class="a ib" style="left:208.5px;top:114px;width:17.5px;height:17px"></div>

<div class="lrow" style="top:138px;height:19px"></div>
<div class="t ltxt" style="left:100px;top:145.8px">Начало опроса</div>

<div class="lrow" style="top:161px;background:#ccd6f7"></div>
<div class="t num" style="left:105px;top:168px">1</div>
<div class="t ltxt" style="left:113.4px;top:168px">Куда бы вы нажали?</div>

<div class="lrow" style="top:180.5px"></div>
<div class="t num" style="left:105px;top:187.8px">2</div>
<div class="t ltxt" style="left:113.4px;top:187.8px">Расскажите, что вас огорчило</div>

<div class="lrow" style="top:200.6px"></div>
<div class="t num" style="left:105px;top:207.7px">3</div>
<div class="t ltxt" style="left:113.4px;top:207.7px">Оцените наш сервис</div>

<div class="lrow" style="top:220.6px"></div>
<div class="t num" style="left:105px;top:227.7px">4</div>
<div class="t ltxt" style="left:113.4px;top:227.7px">Как мы можем сгладить впечатление</div>

<div class="lrow" style="top:240.5px"></div>
<div class="t num" style="left:105px;top:247.7px">5</div>
<div class="t ltxt" style="left:113.4px;top:247.7px">Варианты компенсации</div>

<div class="lrow" style="top:262.6px;height:18.5px"></div>
<div class="t ltxt" style="left:99.6px;top:269px">Конечный экран</div>

<!-- middle -->
<div class="a" style="left:262px;top:114px;width:339px;height:396.5px;background:#fff;border-radius:5px;overflow:hidden">
  <div class="a" style="left:105.5px;top:0;width:240px;height:20.7px;background:#dfe3ea"></div>
  <div class="a" style="left:0;top:0;width:105.5px;height:21px;background:#fff;border-radius:5px 5px 0 0"></div>
</div>
<div class="t" style="left:273.3px;top:120.5px;font-size:7.73px;font-weight:700;color:#1f2430">Основные настройки</div>
<div class="t" style="left:380.4px;top:120px;font-size:8.42px;color:#4d5d86">Дополнительно</div>

<div class="t" style="left:288px;top:151px;font-size:7.1px;color:#5f6f9c">Тест первого клика</div>

<div class="t lbl" style="left:273.5px;top:171.5px;font-size:7.77px">Текст вопроса</div>
<svg class="a" style="left:332.3px;top:171px" width="9" height="9" viewBox="0 0 9 9"><circle cx="4.5" cy="4.5" r="3.8" fill="none" stroke="#8a97bd" stroke-width="0.8"/><rect x="4.1" y="3.8" width="0.8" height="2.9" fill="#8a97bd"/><rect x="4.1" y="2.2" width="0.8" height="0.9" fill="#8a97bd"/></svg>
<div class="inp" style="left:273px;top:184px;width:317px;height:21.3px"></div>
<div class="t" style="left:282.5px;top:190px;font-size:9.48px;color:#1f2430">Куда бы вы нажали?</div>

<div class="a" style="left:273.5px;top:217px;width:58.2px;height:58.3px;border-radius:3.5px;overflow:hidden;background:#27322f">
<svg width="59" height="59" viewBox="0 0 59 59">
<defs>
<radialGradient id="bk1" cx="0.5" cy="0.5" r="0.5"><stop offset="0" stop-color="#6a8c86" stop-opacity=".85"/><stop offset="1" stop-color="#6a8c86" stop-opacity="0"/></radialGradient>
<radialGradient id="glow" cx="0.5" cy="0.5" r="0.5"><stop offset="0" stop-color="#fffaf0"/><stop offset=".12" stop-color="#ffe0b0"/><stop offset=".35" stop-color="#e0a060" stop-opacity=".55"/><stop offset="1" stop-color="#b07040" stop-opacity="0"/></radialGradient>
<linearGradient id="bgg" x1="0.2" y1="0" x2="0.5" y2="1"><stop offset="0" stop-color="#34443f"/><stop offset=".5" stop-color="#293633"/><stop offset="1" stop-color="#1b2321"/></linearGradient>
</defs>
<rect width="59" height="59" fill="url(#bgg)"/>
<circle cx="33" cy="8" r="10" fill="url(#bk1)"/>
<circle cx="48" cy="15" r="9" fill="url(#bk1)" opacity=".8"/>
<circle cx="18" cy="10" r="7" fill="url(#bk1)" opacity=".45"/>
<circle cx="52" cy="34" r="8" fill="url(#bk1)" opacity=".4"/>
<circle cx="8" cy="30" r="8" fill="url(#bk1)" opacity=".25"/>
<path d="M19 11 L35 57" stroke="#121716" stroke-width="1.1" opacity=".85"/>
<circle cx="27.5" cy="29.5" r="14" fill="url(#glow)"/>
<g stroke="#f5c080" stroke-linecap="round"><path d="M27.7 32.1 L28.2 39.2" stroke-width="0.56" opacity="0.78"/><path d="M28.5 29.9 L40.7 35.3" stroke-width="0.44" opacity="0.61"/><path d="M29.9 29.4 L41.9 29.1" stroke-width="0.52" opacity="0.79"/><path d="M29.2 31.9 L36.1 41.4" stroke-width="0.53" opacity="0.83"/><path d="M26.9 28.5 L21.1 17.5" stroke-width="0.56" opacity="0.64"/><path d="M31.0 30.2 L38.0 31.6" stroke-width="0.60" opacity="0.90"/><path d="M26.7 25.8 L25.3 19.8" stroke-width="0.63" opacity="0.70"/><path d="M30.8 28.1 L33.9 26.8" stroke-width="0.40" opacity="0.60"/><path d="M29.8 29.0 L39.5 26.9" stroke-width="0.46" opacity="0.73"/><path d="M26.0 30.8 L18.6 37.3" stroke-width="0.55" opacity="0.91"/><path d="M25.9 26.1 L21.5 16.2" stroke-width="0.70" opacity="0.80"/><path d="M29.4 32.6 L35.6 42.9" stroke-width="0.67" opacity="0.76"/><path d="M27.1 27.9 L24.3 15.6" stroke-width="0.55" opacity="0.63"/><path d="M30.8 30.9 L42.2 35.7" stroke-width="0.38" opacity="0.86"/><path d="M26.3 30.3 L19.9 34.3" stroke-width="0.62" opacity="0.89"/><path d="M30.2 30.3 L33.7 31.3" stroke-width="0.60" opacity="0.65"/><path d="M30.4 26.8 L35.6 22.0" stroke-width="0.70" opacity="0.64"/><path d="M30.0 30.8 L33.1 32.4" stroke-width="0.42" opacity="0.68"/><path d="M26.4 28.6 L22.6 25.4" stroke-width="0.65" opacity="0.64"/><path d="M31.1 28.6 L36.9 27.0" stroke-width="0.51" opacity="0.73"/><path d="M25.8 27.3 L20.3 20.4" stroke-width="0.57" opacity="0.92"/><path d="M25.2 29.4 L14.3 28.9" stroke-width="0.43" opacity="0.64"/><path d="M30.0 29.1 L38.9 27.9" stroke-width="0.35" opacity="0.69"/><path d="M26.6 29.0 L16.8 23.6" stroke-width="0.57" opacity="0.53"/><path d="M25.8 27.8 L18.6 20.3" stroke-width="0.47" opacity="0.82"/><path d="M27.4 28.4 L27.0 22.9" stroke-width="0.59" opacity="0.93"/></g>
<g fill="#f0aa66"><circle cx="3.5" cy="14" r="1"/><circle cx="12" cy="4" r="0.9"/><circle cx="52" cy="49" r="1.6"/><circle cx="47" cy="56" r="1"/><circle cx="43" cy="31" r="1.2"/><circle cx="19" cy="48" r="1.1"/><circle cx="6" cy="38" r="0.9"/><circle cx="12" cy="44" r="0.8"/><circle cx="40" cy="10" r="0.8"/><circle cx="30" cy="52" r="0.8"/><circle cx="9" cy="21" r="0.7"/><circle cx="48" cy="26" r="0.6"/><circle cx="36" cy="47" r="0.8"/></g>
</svg>
</div>
<div class="a" style="left:325.6px;top:210.4px;width:12.6px;height:12.6px;border-radius:50%;background:#1e2740;border:1px solid #fff"></div>
<svg class="a" style="left:328.4px;top:213.2px" width="7" height="7" viewBox="0 0 7 7"><path d="M1.6 1.6 L5.4 5.4 M5.4 1.6 L1.6 5.4" stroke="#fff" stroke-width="1.3" stroke-linecap="round"/></svg>

<div class="a" style="left:341.3px;top:217px;width:112.5px;height:17.2px;background:#dfe3ea;border-radius:3.5px"></div>
<div class="t" style="left:350.8px;top:222.6px;font-size:7.23px;color:#1f2430;-webkit-text-stroke:0.2px #1f2430">Изменить области клика (2)</div>
<div class="t" style="left:341.3px;top:242.6px;font-size:7.14px;color:#6373a0">Отметьте области, по которым хотели бы получить статистику,</div>
<div class="t" style="left:341.3px;top:250.6px;font-size:7.12px;color:#6373a0">либо собирайте клики и анализируйте по тепловой карте</div>

<div class="t lbl" style="left:273.3px;top:288.5px;font-size:7.81px">Отображение на смартфоне</div>
<div class="inp" style="left:273.3px;top:301.2px;width:149.4px;height:20.8px"></div>
<div class="t" style="left:282.8px;top:307px;font-size:9.34px;color:#1f2430">По ширине</div>
<svg class="a" style="left:406.5px;top:309px" width="9" height="6" viewBox="0 0 9 6"><path d="M0.8 1 L4.5 4.6 L8.2 1" fill="none" stroke="#5a6a90" stroke-width="1"/></svg>

<div class="a" style="left:273.3px;top:333.6px;width:316.4px;height:1px;background:#eceff4"></div>

<div class="t lbl" style="left:273.3px;top:347.6px;font-size:7.94px">Время показа изображения, секунд</div>
<div class="inp" style="left:273.3px;top:360px;width:149.4px;height:21.4px"></div>
<div class="t" style="left:283px;top:366.2px;font-size:9.48px;color:#2a3040">5</div>
<div class="t lbl" style="left:440.4px;top:347.4px;font-size:8.12px">Текст кнопки</div>
<div class="inp" style="left:440.4px;top:360px;width:149.3px;height:21.4px"></div>
<div class="t" style="left:449.5px;top:366px;font-size:9.63px;color:#7685a8">Показать изображение</div>

<div class="a" style="left:273.3px;top:393.5px;width:21px;height:11px;border-radius:6px;background:#dfe3ea"></div>
<div class="a" style="left:273.5px;top:393.7px;width:10.6px;height:10.6px;border-radius:50%;background:#fff;border:0.7px solid #dfe3ea"></div>
<div class="t" style="left:301.7px;top:394.6px;font-size:8.55px;color:#2a3040">Возможность отменить клик</div>
<svg class="a" style="left:417px;top:395px" width="9" height="9" viewBox="0 0 9 9"><circle cx="4.5" cy="4.5" r="3.8" fill="none" stroke="#8a97bd" stroke-width="0.8"/><rect x="4.1" y="3.8" width="0.8" height="2.9" fill="#8a97bd"/><rect x="4.1" y="2.2" width="0.8" height="0.9" fill="#8a97bd"/></svg>

<div class="a" style="left:273.3px;top:416.8px;width:316.4px;height:1px;background:#eceff4"></div>

<div class="a" style="left:273.3px;top:429.1px;width:21px;height:11px;border-radius:6px;background:#dfe3ea"></div>
<div class="a" style="left:273.5px;top:429.3px;width:10.6px;height:10.6px;border-radius:50%;background:#fff;border:0.7px solid #dfe3ea"></div>
<div class="t" style="left:301.7px;top:431px;font-size:8.33px;color:#2a3040">Обязательный вопрос</div>

<!-- right -->
<div class="a" style="left:606px;top:114px;width:211px;height:397px;background:#fff;border-radius:5px"></div>
<div class="a" style="left:615.4px;top:120.3px;width:16.4px;height:9.2px;border-radius:5px;background:#dfe3ea"></div>
<div class="a" style="left:616.2px;top:121.1px;width:7.6px;height:7.6px;border-radius:50%;background:#fff"></div>
<div class="t" style="left:636.8px;top:121.6px;font-size:7.05px;color:#4d5d86">Виджет</div>
<div class="t" style="left:735.8px;top:121.6px;font-size:7.24px;color:#1f2430">Просмотр по ссылке</div>
<div class="a" style="left:607.4px;top:135.8px;width:208.5px;height:1px;background:#e9ecf2"></div>

<div class="t" style="left:616px;top:146.2px;font-size:11.66px;font-weight:700;color:#111">ФОКУЗ</div>
<div class="a" style="left:769.5px;top:142.1px;width:37px;height:17.4px;border:1px solid #dfe3ea;border-radius:3px;background:#fff"></div>
<div class="a" style="left:775px;top:147.8px;width:11.2px;height:2.4px;background:#fff;box-shadow:0 0 0 .3px #e3e6ec"></div>
<div class="a" style="left:775px;top:150.2px;width:11.2px;height:2.4px;background:#2d4fc4"></div>
<div class="a" style="left:775px;top:152.6px;width:11.2px;height:2.4px;background:#e0302a"></div>
<svg class="a" style="left:792.5px;top:148px" width="9" height="6" viewBox="0 0 9 6"><path d="M0.8 1 L4.5 4.6 L8.2 1" fill="none" stroke="#4a5b85" stroke-width="1"/></svg>

<div class="a" style="left:607.3px;top:165.8px;width:208.4px;height:344px;background:#dfe3ea;border-radius:0 0 4px 4px"></div>
<div class="t" style="left:606px;width:211px;text-align:center;top:264.2px;font-size:11.25px;line-height:11.7px;color:#15181f;-webkit-text-stroke:0.25px #15181f;white-space:normal">Куда бы вы нажали в первую<br>очередь?</div>
<div class="a" style="left:607.3px;top:302px;width:208.4px;height:56px;background:#fff;border-radius:4px"></div>
<div class="a" style="left:644.8px;top:319.4px;width:133.2px;height:20.8px;background:#4566ea;border-radius:4px"></div>
<div class="t" style="left:644.8px;width:133.2px;text-align:center;top:325.5px;font-size:9.1px;font-weight:700;color:#fff">Показать изображение</div>
<div class="a" style="left:614.7px;top:370px;width:94px;height:20.6px;border:1.3px solid #4566ea;border-radius:4px"></div>
<div class="t" style="left:614.7px;width:94px;text-align:center;top:376px;font-size:8.7px;font-weight:700;color:#4566ea">Вернуться</div>
<div class="a" style="left:714.7px;top:370px;width:93.3px;height:20.6px;background:#4566ea;border-radius:4px"></div>
<div class="t" style="left:714.7px;width:93.3px;text-align:center;top:376px;font-size:9.2px;font-weight:700;color:#fff">Далее</div>
<div class="t" style="left:684px;top:493.5px;font-size:7px;color:#5a78e0;text-decoration:underline">Создано в Foquz</div>


<svg class="a" style="left:0;top:0" width="898" height="562" viewBox="0 0 898 562">
<!-- right toolbar icons -->
<g fill="none" stroke="#3f55a0" stroke-width="1.15" stroke-linejoin="round" stroke-linecap="round">
<rect x="671.3" y="121.2" width="9.4" height="5.6" rx="0.8"/>
<path d="M676 126.9 V128.4 M673.8 128.5 H678.2"/>
<rect x="699.4" y="121.9" width="9.4" height="6.2" rx="1"/>
<path d="M707 123.2 V126.8"/>
</g>
<rect x="687.2" y="120.4" width="5.6" height="8.8" rx="1" fill="none" stroke="#1f2430" stroke-width="1.15"/>
<circle cx="690" cy="127.6" r="0.4" fill="#1f2430"/>
<g fill="none" stroke="#4a5b85" stroke-width="1.05" stroke-linecap="round">
<path d="M724.9 125.6 L727.5 123"/>
<path d="M725.8 122 L727 120.8 C727.8 120 729 120 729.6 120.6 C730.2 121.2 730.2 122.4 729.4 123.2 L728.2 124.4"/>
<path d="M724.6 123.6 L723.4 124.8 C722.6 125.6 722.6 126.8 723.2 127.4 C723.8 128 725 128 725.8 127.2 L727 126"/>
</g>
<!-- test click icon -->
<g fill="none" stroke="#4a5b8f" stroke-linecap="round" stroke-linejoin="round">
<path d="M277.6 152.4 L282.3 154.4 L280.4 155.2 L282.5 157.4 M277.6 152.4 L279.6 157.1 L280.4 155.2" stroke-width="1.2"/>
<path d="M275.8 148.6 V149.8 M273.4 151.6 H274.6 M273.9 149.4 L274.7 150.2 M277.7 149.4 L276.9 150.2 M273.9 153.8 L274.7 153" stroke-width="1"/>
</g>
<!-- eye -->
<path d="M574.4 153.6 C576.2 150.6 580.8 150.6 582.6 153.6 C580.8 156.6 576.2 156.6 574.4 153.6 Z" fill="none" stroke="#3f5290" stroke-width="1.1"/>
<path d="M576.9 154.4 A1.6 1.6 0 0 1 580.1 154.4" fill="none" stroke="#3f5290" stroke-width="1"/>
<circle cx="578.5" cy="153.4" r="0.9" fill="#3f5290"/>
<path d="M586.2 152.3 L587.9 151.1 V155.9" fill="none" stroke="#4a5b8f" stroke-width="1.05" stroke-linejoin="round"/>
<!-- hamburger -->
<path d="M87 46.8 H96 M87 50 H96 M87 53.2 H96" stroke="#5f6e94" stroke-width="1.35" fill="none"/>
<!-- new question plus -->
<path d="M92.8 118.6 V126.2 M89 122.4 H96.6" stroke="#2e9a48" stroke-width="1.25" fill="none"/>
<!-- hierarchy -->
<g fill="#4a5b85">
<rect x="171.6" y="118.9" width="2.8" height="2.6" rx="0.5"/>
<rect x="172.4" y="121" width="1.2" height="2"/>
<path d="M169 126.2 V124.6 Q169 122.8 170.8 122.8 H175.2 Q177 122.8 177 124.6 V126.2 H175.6 V124.5 Q175.6 124 175.1 124 H170.9 Q170.4 124 170.4 124.5 V126.2 Z"/>
<rect x="172.3" y="123" width="1.4" height="3.2"/>
</g>
<!-- flow icon -->
<g fill="none" stroke="#4a5b85" stroke-width="1.1">
<path d="M193.1 120.6 L195.6 123.1 L193.1 125.6 L190.6 123.1 Z" stroke-width="1.3"/>
<circle cx="197.8" cy="119.7" r="1.45"/>
<path d="M195.2 122 L196.7 120.7 M195.2 124.2 L197 125.6"/>
</g>
<circle cx="197.9" cy="126.1" r="1.35" fill="#4a5b85"/>
<!-- dots -->
<g fill="#4a5b85"><circle cx="213.8" cy="122.5" r="1"/><circle cx="217.3" cy="122.5" r="1"/><circle cx="220.8" cy="122.5" r="1"/></g>
<!-- shuffle -->
<g fill="none" stroke="#4a5b85" stroke-width="1.25" stroke-linecap="round" stroke-linejoin="round">
<path d="M235.2 120.3 H236.8 C239 120.3 239.4 124.9 241.6 124.9 H243"/>
<path d="M235.2 124.9 H236.8 C239 124.9 239.4 120.3 241.6 120.3 H243"/>
<path d="M241.6 119 L243 120.3 L241.6 121.6 M241.6 123.6 L243 124.9 L241.6 126.2"/>
</g>
<!-- start icon -->
<g fill="none" stroke="#8797bd" stroke-width="1" stroke-linecap="round" stroke-linejoin="round">
<path d="M91 143.6 H93.6 Q94.7 143.6 94.7 144.7 V150.7 Q94.7 151.8 93.6 151.8 H91"/>
<path d="M86 147.7 H91.4 M89.6 145.9 L91.4 147.7 L89.6 149.5"/>
</g>
<!-- row1 click icon -->
<g fill="none" stroke="#1f2430" stroke-linecap="round" stroke-linejoin="round">
<path d="M90.3 169.2 L95.2 171.3 L93.2 172.1 L95.3 174.3 M90.3 169.2 L92.4 174.1 L93.2 172.1" stroke-width="1.15"/>
<path d="M88.4 165 V166.6 M85.6 167.9 H87.2 M86.4 165.9 L87.4 166.9 M90.5 165.9 L89.6 166.9 M86.4 170 L87.4 169" stroke-width="0.9"/>
</g>
<!-- row2 icon -->
<g fill="#8a98c0">
<rect x="85.9" y="186.4" width="2.8" height="2.5" rx="0.7"/>
<rect x="85.9" y="190.9" width="2.8" height="2.6" rx="0.7"/>
<rect x="90.4" y="186.4" width="4.8" height="0.9"/>
<rect x="90.4" y="188" width="1.9" height="0.9"/>
<rect x="90.4" y="190.8" width="4.8" height="0.9"/>
<rect x="90.4" y="192.6" width="1.9" height="0.9"/>
</g>
<!-- star -->
<path d="M90.35 205.5 L91.75 208.4 L94.7 208.75 L92.55 210.8 L93.1 213.9 L90.35 212.4 L87.6 213.9 L88.15 210.8 L86 208.75 L88.95 208.4 Z" fill="none" stroke="#8a98c0" stroke-width="0.9" stroke-linejoin="round"/>
<!-- row4 lines -->
<g fill="#8a98c0">
<rect x="86.2" y="225.95" width="8.3" height="0.9"/>
<rect x="86.2" y="228" width="8.3" height="0.9"/>
<rect x="86.2" y="230.55" width="8.3" height="0.9"/>
<rect x="86.2" y="232.85" width="4.7" height="0.9"/>
</g>
<!-- row5 sort icon -->
<g fill="none" stroke="#8a98c0" stroke-width="0.9" stroke-linecap="round" stroke-linejoin="round">
<path d="M87.5 245.8 V253.3 M86.1 251.9 L87.5 253.3 L88.9 251.9"/>
<path d="M90.4 245.9 H95 M90.4 248.3 H95 M90.4 250.8 H95 M90.4 253.3 H95"/>
</g>
<!-- end icon -->
<g fill="none" stroke="#8797bd" stroke-width="1" stroke-linecap="round" stroke-linejoin="round">
<path d="M90.2 267.4 H87.3 Q86.3 267.4 86.3 268.4 V275.1 Q86.3 276.1 87.3 276.1 H90.2"/>
<path d="M89.6 271.8 H95 M93.2 270 L95 271.8 L93.2 273.6"/>
</g>
</svg>
</body></html>
